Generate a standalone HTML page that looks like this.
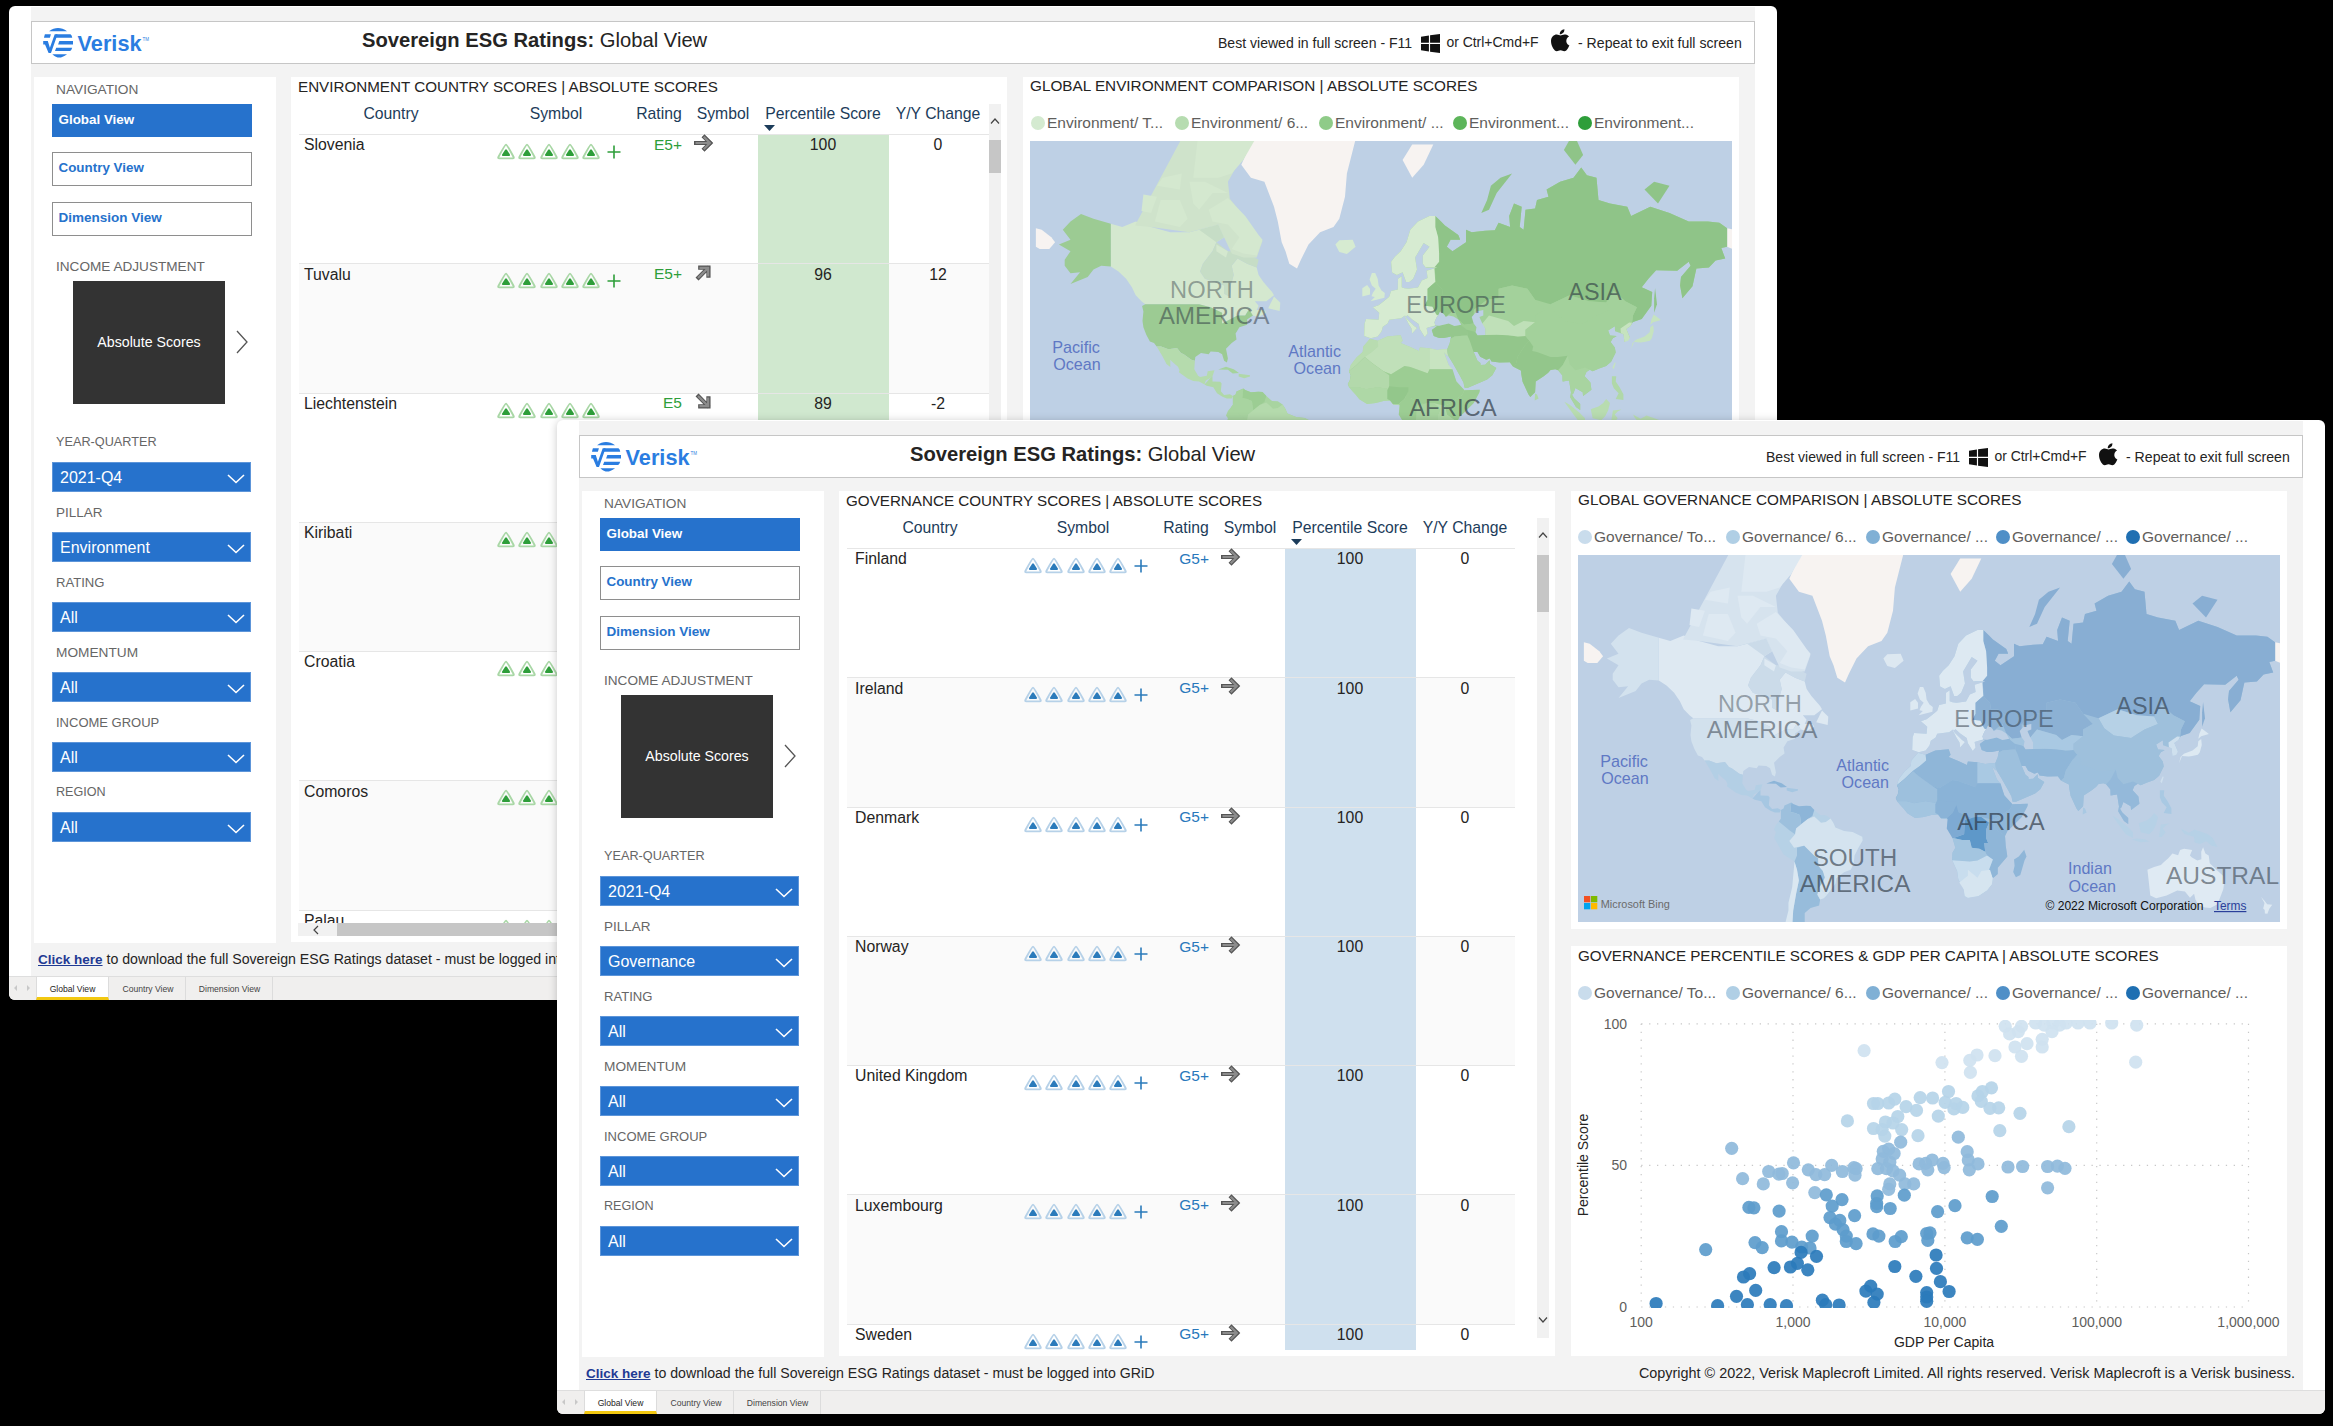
<!DOCTYPE html><html><head><meta charset="utf-8"><style>
html,body{margin:0;padding:0;background:#000;width:2333px;height:1426px;overflow:hidden;font-family:"Liberation Sans", sans-serif}
</style></head><body>
<div style="position:absolute;left:9px;top:6px;width:1768px;height:994px;background:#fff;border-radius:6px;overflow:hidden;box-shadow:0 1px 9px rgba(0,0,0,0.22)"><div style="position:absolute;left:22px;top:1px;width:1724px;height:969px;background:#f3f3f3;"></div><div style="position:absolute;left:22px;top:15px;width:1724px;height:43px;background:#fff;box-sizing:border-box;border:1.5px solid #c6c6c6"></div><svg width="110" height="34" viewBox="0 0 110 34" style="position:absolute;left:34px;top:21px"><g fill="#2a7de1"><path d="M6.1 4.3 C9 1.5 12 0.9 15 0.9 C18 0.9 21 1.5 24.1 4.3 Z"/><path d="M1.9 7.3 H7.9 L6.9 10.7 H0.9 Z"/><path d="M12.9 7.3 H27.5 Q29.2 8.5 29.2 10.7 H11.7 Z"/><path d="M0.2 14 H4.8 L6.9 20.8 L11.7 7.3 H14.6 L8 25.9 H5.6 L2 17.6 H0.2 Z"/><path d="M16.3 14 H30 V17.6 H15.1 Z"/><path d="M13.2 20.7 H29.2 Q28.6 23 27.2 24 H12 Z"/><path d="M9.4 27.2 H24.1 C21 29.8 18 30.5 16.5 30.5 C14 30.5 11.5 29.8 9.4 27.2 Z"/></g><text x="34.6" y="24" font-family="Liberation Sans" font-weight="bold" font-size="21.7" fill="#2a7de1">Verisk</text><text x="99.5" y="13.5" font-family="Liberation Sans" font-size="4.5" fill="#2a7de1">TM</text></svg><div style="position:absolute;left:353.0px;top:23.6px;font-size:20.2px;color:#252423;font-weight:normal;white-space:nowrap;line-height:1;"><b>Sovereign ESG Ratings:</b> Global View</div><div style="position:absolute;left:1209.0px;top:30.3px;font-size:14.05px;color:#252423;font-weight:normal;white-space:nowrap;line-height:1;">Best viewed in full screen - F11</div><svg width="19" height="19" viewBox="0 0 18 18" style="position:absolute;left:1411.7px;top:27.5px"><path d="M0 2.5 L7.5 1.4 V8.4 H0Z M8.6 1.2 L18 0 V8.4 H8.6Z M0 9.5 H7.5 V16.6 L0 15.5Z M8.6 9.5 H18 V18 L8.6 16.8Z" fill="#111"/></svg><div style="position:absolute;left:1437.4px;top:30.4px;font-size:13.95px;color:#252423;font-weight:normal;white-space:nowrap;line-height:1;">or Ctrl+Cmd+F</div><svg width="20" height="23" viewBox="0 0 170 200" preserveAspectRatio="none" style="position:absolute;left:1541.6px;top:23px"><path fill="#111" d="M150 68c-1 1-20 12-20 36 0 28 25 38 26 38 0 1-4 14-13 27-8 12-17 24-30 24s-17-8-32-8c-15 0-20 8-32 8s-21-11-30-24C8 153 0 128 0 105c0-38 25-58 49-58 13 0 24 9 32 9 8 0 20-9 35-9 6 0 26 1 39 20zM104 33c6-7 10-17 10-27 0-1 0-3-1-4-10 0-21 7-28 15-6 6-11 16-11 26 0 2 0 3 1 3 1 0 2 0 3 0 9 0 20-6 26-13z"/></svg><div style="position:absolute;left:1569.0px;top:30.3px;font-size:14.1px;color:#252423;font-weight:normal;white-space:nowrap;line-height:1;">- Repeat to exit full screen</div><div style="position:absolute;left:25px;top:71px;width:242px;height:866px;background:#fff;"></div><div style="position:absolute;left:47.0px;top:76.8px;font-size:13.7px;color:#666;font-weight:normal;white-space:nowrap;line-height:1;">NAVIGATION</div><div style="position:absolute;left:43px;top:98px;width:200px;height:33px;background:#2672cc;"></div><div style="position:absolute;left:49.5px;top:107.3px;font-size:13.4px;color:#fff;font-weight:bold;white-space:nowrap;line-height:1;">Global View</div><div style="position:absolute;left:43px;top:146px;width:200px;height:34px;background:#fff;box-sizing:border-box;border:1.6px solid #8e8e8e"></div><div style="position:absolute;left:49.5px;top:155.3px;font-size:13.4px;color:#2672cc;font-weight:bold;white-space:nowrap;line-height:1;">Country View</div><div style="position:absolute;left:43px;top:196px;width:200px;height:34px;background:#fff;box-sizing:border-box;border:1.6px solid #8e8e8e"></div><div style="position:absolute;left:49.5px;top:205.2px;font-size:13.5px;color:#2672cc;font-weight:bold;white-space:nowrap;line-height:1;">Dimension View</div><div style="position:absolute;left:47.0px;top:253.7px;font-size:13.6px;color:#666;font-weight:normal;white-space:nowrap;line-height:1;">INCOME ADJUSTMENT</div><div style="position:absolute;left:64px;top:275px;width:152px;height:123px;background:#333333;"></div><div style="position:absolute;left:-560.0px;width:1400px;text-align:center;top:328.7px;font-size:14.2px;color:#fff;font-weight:normal;white-space:nowrap;line-height:1;">Absolute Scores</div><svg width="14" height="26" viewBox="0 0 14 26" style="position:absolute;left:226px;top:323px"><path d="M2 2 L12 13 L2 24" fill="none" stroke="#555" stroke-width="1.3"/></svg><div style="position:absolute;left:47.0px;top:430.3px;font-size:12.7px;color:#666;font-weight:normal;white-space:nowrap;line-height:1;">YEAR-QUARTER</div><div style="position:absolute;left:43px;top:456px;width:199px;height:30px;background:#2672cc;box-sizing:border-box;border:1px solid #5d95d9"></div><div style="position:absolute;left:51.0px;top:463.8px;font-size:16px;color:#fff;font-weight:normal;white-space:nowrap;line-height:1;">2021-Q4</div><svg width="18" height="10" viewBox="0 0 18 10" style="position:absolute;left:218px;top:468px"><path d="M1 1 L9 8.5 L17 1" fill="none" stroke="#fff" stroke-width="1.6"/></svg><div style="position:absolute;left:47.0px;top:499.7px;font-size:13.5px;color:#666;font-weight:normal;white-space:nowrap;line-height:1;">PILLAR</div><div style="position:absolute;left:43px;top:526px;width:199px;height:30px;background:#2672cc;box-sizing:border-box;border:1px solid #5d95d9"></div><div style="position:absolute;left:51.0px;top:533.8px;font-size:16px;color:#fff;font-weight:normal;white-space:nowrap;line-height:1;">Environment</div><svg width="18" height="10" viewBox="0 0 18 10" style="position:absolute;left:218px;top:538px"><path d="M1 1 L9 8.5 L17 1" fill="none" stroke="#fff" stroke-width="1.6"/></svg><div style="position:absolute;left:47.0px;top:570.0px;font-size:13.1px;color:#666;font-weight:normal;white-space:nowrap;line-height:1;">RATING</div><div style="position:absolute;left:43px;top:596px;width:199px;height:30px;background:#2672cc;box-sizing:border-box;border:1px solid #5d95d9"></div><div style="position:absolute;left:51.0px;top:603.8px;font-size:16px;color:#fff;font-weight:normal;white-space:nowrap;line-height:1;">All</div><svg width="18" height="10" viewBox="0 0 18 10" style="position:absolute;left:218px;top:608px"><path d="M1 1 L9 8.5 L17 1" fill="none" stroke="#fff" stroke-width="1.6"/></svg><div style="position:absolute;left:47.0px;top:639.6px;font-size:13.7px;color:#666;font-weight:normal;white-space:nowrap;line-height:1;">MOMENTUM</div><div style="position:absolute;left:43px;top:666px;width:199px;height:30px;background:#2672cc;box-sizing:border-box;border:1px solid #5d95d9"></div><div style="position:absolute;left:51.0px;top:673.8px;font-size:16px;color:#fff;font-weight:normal;white-space:nowrap;line-height:1;">All</div><svg width="18" height="10" viewBox="0 0 18 10" style="position:absolute;left:218px;top:678px"><path d="M1 1 L9 8.5 L17 1" fill="none" stroke="#fff" stroke-width="1.6"/></svg><div style="position:absolute;left:47.0px;top:710.1px;font-size:13.0px;color:#666;font-weight:normal;white-space:nowrap;line-height:1;">INCOME GROUP</div><div style="position:absolute;left:43px;top:736px;width:199px;height:30px;background:#2672cc;box-sizing:border-box;border:1px solid #5d95d9"></div><div style="position:absolute;left:51.0px;top:743.8px;font-size:16px;color:#fff;font-weight:normal;white-space:nowrap;line-height:1;">All</div><svg width="18" height="10" viewBox="0 0 18 10" style="position:absolute;left:218px;top:748px"><path d="M1 1 L9 8.5 L17 1" fill="none" stroke="#fff" stroke-width="1.6"/></svg><div style="position:absolute;left:47.0px;top:780.4px;font-size:12.6px;color:#666;font-weight:normal;white-space:nowrap;line-height:1;">REGION</div><div style="position:absolute;left:43px;top:806px;width:199px;height:30px;background:#2672cc;box-sizing:border-box;border:1px solid #5d95d9"></div><div style="position:absolute;left:51.0px;top:813.8px;font-size:16px;color:#fff;font-weight:normal;white-space:nowrap;line-height:1;">All</div><svg width="18" height="10" viewBox="0 0 18 10" style="position:absolute;left:218px;top:818px"><path d="M1 1 L9 8.5 L17 1" fill="none" stroke="#fff" stroke-width="1.6"/></svg><div style="position:absolute;left:282px;top:71px;width:716px;height:865px;background:#fff;"></div><div style="position:absolute;left:289.0px;top:72.6px;font-size:15.2px;color:#252423;font-weight:normal;white-space:nowrap;line-height:1;">ENVIRONMENT COUNTRY SCORES | ABSOLUTE SCORES</div><div style="position:absolute;left:-318.0px;width:1400px;text-align:center;top:100.0px;font-size:15.75px;color:#1c3c5a;font-weight:normal;white-space:nowrap;line-height:1;">Country</div><div style="position:absolute;left:-153.0px;width:1400px;text-align:center;top:100.0px;font-size:15.75px;color:#1c3c5a;font-weight:normal;white-space:nowrap;line-height:1;">Symbol</div><div style="position:absolute;left:-50.0px;width:1400px;text-align:center;top:100.0px;font-size:15.75px;color:#1c3c5a;font-weight:normal;white-space:nowrap;line-height:1;">Rating</div><div style="position:absolute;left:14.0px;width:1400px;text-align:center;top:100.0px;font-size:15.75px;color:#1c3c5a;font-weight:normal;white-space:nowrap;line-height:1;">Symbol</div><div style="position:absolute;left:114.0px;width:1400px;text-align:center;top:100.0px;font-size:15.75px;color:#1c3c5a;font-weight:normal;white-space:nowrap;line-height:1;">Percentile Score</div><div style="position:absolute;left:229.0px;width:1400px;text-align:center;top:100.0px;font-size:15.75px;color:#1c3c5a;font-weight:normal;white-space:nowrap;line-height:1;">Y/Y Change</div><svg width="12" height="7" style="position:absolute;left:755px;top:119px"><path d="M0 0 H11 L5.5 6Z" fill="#1c3c5a"/></svg><div style="position:absolute;left:290px;top:128px;width:690px;height:802px;overflow:hidden"><div style="position:absolute;left:0px;top:0.00px;width:690px;height:129.25px;background:#ffffff;box-sizing:border-box;border-top:1px solid #e6e6e6"></div><div style="position:absolute;left:459px;top:1.00px;width:130.5px;height:129.25px;background:#d0e8cf;"></div><div style="position:absolute;left:5.0px;top:3.4px;font-size:15.8px;color:#252423;font-weight:normal;white-space:nowrap;line-height:1;">Slovenia</div><div style="position:absolute;left:197.7px;top:9.0px"><svg width="18" height="17" viewBox="0 0 18 17" style="position:absolute"><path d="M9 1.6 Q10 1.6 16.6 14 Q17.2 15.4 15.8 15.4 L2.2 15.4 Q0.8 15.4 1.4 14 Q8 1.6 9 1.6Z" fill="none" stroke="#a9d7a6" stroke-width="1.9"/><path d="M9 6.2 Q9.7 6.2 12.9 11.6 Q13.5 13 12.1 13.1 L5.9 13.1 Q4.5 13 5.1 11.6 Q8.3 6.2 9 6.2 Z" fill="#2e9e3a"/></svg></div><div style="position:absolute;left:219.1px;top:9.0px"><svg width="18" height="17" viewBox="0 0 18 17" style="position:absolute"><path d="M9 1.6 Q10 1.6 16.6 14 Q17.2 15.4 15.8 15.4 L2.2 15.4 Q0.8 15.4 1.4 14 Q8 1.6 9 1.6Z" fill="none" stroke="#a9d7a6" stroke-width="1.9"/><path d="M9 6.2 Q9.7 6.2 12.9 11.6 Q13.5 13 12.1 13.1 L5.9 13.1 Q4.5 13 5.1 11.6 Q8.3 6.2 9 6.2 Z" fill="#2e9e3a"/></svg></div><div style="position:absolute;left:240.5px;top:9.0px"><svg width="18" height="17" viewBox="0 0 18 17" style="position:absolute"><path d="M9 1.6 Q10 1.6 16.6 14 Q17.2 15.4 15.8 15.4 L2.2 15.4 Q0.8 15.4 1.4 14 Q8 1.6 9 1.6Z" fill="none" stroke="#a9d7a6" stroke-width="1.9"/><path d="M9 6.2 Q9.7 6.2 12.9 11.6 Q13.5 13 12.1 13.1 L5.9 13.1 Q4.5 13 5.1 11.6 Q8.3 6.2 9 6.2 Z" fill="#2e9e3a"/></svg></div><div style="position:absolute;left:261.9px;top:9.0px"><svg width="18" height="17" viewBox="0 0 18 17" style="position:absolute"><path d="M9 1.6 Q10 1.6 16.6 14 Q17.2 15.4 15.8 15.4 L2.2 15.4 Q0.8 15.4 1.4 14 Q8 1.6 9 1.6Z" fill="none" stroke="#a9d7a6" stroke-width="1.9"/><path d="M9 6.2 Q9.7 6.2 12.9 11.6 Q13.5 13 12.1 13.1 L5.9 13.1 Q4.5 13 5.1 11.6 Q8.3 6.2 9 6.2 Z" fill="#2e9e3a"/></svg></div><div style="position:absolute;left:283.3px;top:9.0px"><svg width="18" height="17" viewBox="0 0 18 17" style="position:absolute"><path d="M9 1.6 Q10 1.6 16.6 14 Q17.2 15.4 15.8 15.4 L2.2 15.4 Q0.8 15.4 1.4 14 Q8 1.6 9 1.6Z" fill="none" stroke="#a9d7a6" stroke-width="1.9"/><path d="M9 6.2 Q9.7 6.2 12.9 11.6 Q13.5 13 12.1 13.1 L5.9 13.1 Q4.5 13 5.1 11.6 Q8.3 6.2 9 6.2 Z" fill="#2e9e3a"/></svg></div><svg width="16" height="16" style="position:absolute;left:306.5px;top:10.0px"><path d="M8 1.5 V14.5 M1.5 8 H14.5" stroke="#2e9e3a" stroke-width="1.6"/></svg><div style="position:absolute;left:-1017.0px;width:1400px;text-align:right;top:2.7px;font-size:15.5px;color:#2e9e3a;font-weight:normal;white-space:nowrap;line-height:1;">E5+</div><div style="position:absolute;left:395px;top:0.0px"><svg width="20" height="18" viewBox="0 0 20 18" style="position:absolute;transform:rotate(0deg)"><g fill="none" stroke-linecap="square"><path d="M2 9 H15.5 M10.5 3.2 L16.3 9 L10.5 14.8" stroke="#555" stroke-width="4.2"/><path d="M2.6 9 H15 M10.5 3.6 L15.9 9 L10.5 14.4" stroke="#8c8c8c" stroke-width="2.2"/></g></svg></div><div style="position:absolute;left:-176.0px;width:1400px;text-align:center;top:3.3px;font-size:15.8px;color:#252423;font-weight:normal;white-space:nowrap;line-height:1;">100</div><div style="position:absolute;left:-61.0px;width:1400px;text-align:center;top:3.3px;font-size:15.8px;color:#252423;font-weight:normal;white-space:nowrap;line-height:1;">0</div><div style="position:absolute;left:0px;top:129.25px;width:690px;height:129.25px;background:#fafafa;box-sizing:border-box;border-top:1px solid #e6e6e6"></div><div style="position:absolute;left:459px;top:130.25px;width:130.5px;height:129.25px;background:#d0e8cf;"></div><div style="position:absolute;left:5.0px;top:132.6px;font-size:15.8px;color:#252423;font-weight:normal;white-space:nowrap;line-height:1;">Tuvalu</div><div style="position:absolute;left:197.7px;top:138.2px"><svg width="18" height="17" viewBox="0 0 18 17" style="position:absolute"><path d="M9 1.6 Q10 1.6 16.6 14 Q17.2 15.4 15.8 15.4 L2.2 15.4 Q0.8 15.4 1.4 14 Q8 1.6 9 1.6Z" fill="none" stroke="#a9d7a6" stroke-width="1.9"/><path d="M9 6.2 Q9.7 6.2 12.9 11.6 Q13.5 13 12.1 13.1 L5.9 13.1 Q4.5 13 5.1 11.6 Q8.3 6.2 9 6.2 Z" fill="#2e9e3a"/></svg></div><div style="position:absolute;left:219.1px;top:138.2px"><svg width="18" height="17" viewBox="0 0 18 17" style="position:absolute"><path d="M9 1.6 Q10 1.6 16.6 14 Q17.2 15.4 15.8 15.4 L2.2 15.4 Q0.8 15.4 1.4 14 Q8 1.6 9 1.6Z" fill="none" stroke="#a9d7a6" stroke-width="1.9"/><path d="M9 6.2 Q9.7 6.2 12.9 11.6 Q13.5 13 12.1 13.1 L5.9 13.1 Q4.5 13 5.1 11.6 Q8.3 6.2 9 6.2 Z" fill="#2e9e3a"/></svg></div><div style="position:absolute;left:240.5px;top:138.2px"><svg width="18" height="17" viewBox="0 0 18 17" style="position:absolute"><path d="M9 1.6 Q10 1.6 16.6 14 Q17.2 15.4 15.8 15.4 L2.2 15.4 Q0.8 15.4 1.4 14 Q8 1.6 9 1.6Z" fill="none" stroke="#a9d7a6" stroke-width="1.9"/><path d="M9 6.2 Q9.7 6.2 12.9 11.6 Q13.5 13 12.1 13.1 L5.9 13.1 Q4.5 13 5.1 11.6 Q8.3 6.2 9 6.2 Z" fill="#2e9e3a"/></svg></div><div style="position:absolute;left:261.9px;top:138.2px"><svg width="18" height="17" viewBox="0 0 18 17" style="position:absolute"><path d="M9 1.6 Q10 1.6 16.6 14 Q17.2 15.4 15.8 15.4 L2.2 15.4 Q0.8 15.4 1.4 14 Q8 1.6 9 1.6Z" fill="none" stroke="#a9d7a6" stroke-width="1.9"/><path d="M9 6.2 Q9.7 6.2 12.9 11.6 Q13.5 13 12.1 13.1 L5.9 13.1 Q4.5 13 5.1 11.6 Q8.3 6.2 9 6.2 Z" fill="#2e9e3a"/></svg></div><div style="position:absolute;left:283.3px;top:138.2px"><svg width="18" height="17" viewBox="0 0 18 17" style="position:absolute"><path d="M9 1.6 Q10 1.6 16.6 14 Q17.2 15.4 15.8 15.4 L2.2 15.4 Q0.8 15.4 1.4 14 Q8 1.6 9 1.6Z" fill="none" stroke="#a9d7a6" stroke-width="1.9"/><path d="M9 6.2 Q9.7 6.2 12.9 11.6 Q13.5 13 12.1 13.1 L5.9 13.1 Q4.5 13 5.1 11.6 Q8.3 6.2 9 6.2 Z" fill="#2e9e3a"/></svg></div><svg width="16" height="16" style="position:absolute;left:306.5px;top:139.2px"><path d="M8 1.5 V14.5 M1.5 8 H14.5" stroke="#2e9e3a" stroke-width="1.6"/></svg><div style="position:absolute;left:-1017.0px;width:1400px;text-align:right;top:132.0px;font-size:15.5px;color:#2e9e3a;font-weight:normal;white-space:nowrap;line-height:1;">E5+</div><div style="position:absolute;left:395px;top:129.2px"><svg width="20" height="18" viewBox="0 0 20 18" style="position:absolute;transform:rotate(-45deg)"><g fill="none" stroke-linecap="square"><path d="M2 9 H15.5 M10.5 3.2 L16.3 9 L10.5 14.8" stroke="#555" stroke-width="4.2"/><path d="M2.6 9 H15 M10.5 3.6 L15.9 9 L10.5 14.4" stroke="#8c8c8c" stroke-width="2.2"/></g></svg></div><div style="position:absolute;left:-176.0px;width:1400px;text-align:center;top:132.5px;font-size:15.8px;color:#252423;font-weight:normal;white-space:nowrap;line-height:1;">96</div><div style="position:absolute;left:-61.0px;width:1400px;text-align:center;top:132.5px;font-size:15.8px;color:#252423;font-weight:normal;white-space:nowrap;line-height:1;">12</div><div style="position:absolute;left:0px;top:258.50px;width:690px;height:129.25px;background:#ffffff;box-sizing:border-box;border-top:1px solid #e6e6e6"></div><div style="position:absolute;left:459px;top:259.50px;width:130.5px;height:129.25px;background:#d0e8cf;"></div><div style="position:absolute;left:5.0px;top:261.9px;font-size:15.8px;color:#252423;font-weight:normal;white-space:nowrap;line-height:1;">Liechtenstein</div><div style="position:absolute;left:197.7px;top:267.5px"><svg width="18" height="17" viewBox="0 0 18 17" style="position:absolute"><path d="M9 1.6 Q10 1.6 16.6 14 Q17.2 15.4 15.8 15.4 L2.2 15.4 Q0.8 15.4 1.4 14 Q8 1.6 9 1.6Z" fill="none" stroke="#a9d7a6" stroke-width="1.9"/><path d="M9 6.2 Q9.7 6.2 12.9 11.6 Q13.5 13 12.1 13.1 L5.9 13.1 Q4.5 13 5.1 11.6 Q8.3 6.2 9 6.2 Z" fill="#2e9e3a"/></svg></div><div style="position:absolute;left:219.1px;top:267.5px"><svg width="18" height="17" viewBox="0 0 18 17" style="position:absolute"><path d="M9 1.6 Q10 1.6 16.6 14 Q17.2 15.4 15.8 15.4 L2.2 15.4 Q0.8 15.4 1.4 14 Q8 1.6 9 1.6Z" fill="none" stroke="#a9d7a6" stroke-width="1.9"/><path d="M9 6.2 Q9.7 6.2 12.9 11.6 Q13.5 13 12.1 13.1 L5.9 13.1 Q4.5 13 5.1 11.6 Q8.3 6.2 9 6.2 Z" fill="#2e9e3a"/></svg></div><div style="position:absolute;left:240.5px;top:267.5px"><svg width="18" height="17" viewBox="0 0 18 17" style="position:absolute"><path d="M9 1.6 Q10 1.6 16.6 14 Q17.2 15.4 15.8 15.4 L2.2 15.4 Q0.8 15.4 1.4 14 Q8 1.6 9 1.6Z" fill="none" stroke="#a9d7a6" stroke-width="1.9"/><path d="M9 6.2 Q9.7 6.2 12.9 11.6 Q13.5 13 12.1 13.1 L5.9 13.1 Q4.5 13 5.1 11.6 Q8.3 6.2 9 6.2 Z" fill="#2e9e3a"/></svg></div><div style="position:absolute;left:261.9px;top:267.5px"><svg width="18" height="17" viewBox="0 0 18 17" style="position:absolute"><path d="M9 1.6 Q10 1.6 16.6 14 Q17.2 15.4 15.8 15.4 L2.2 15.4 Q0.8 15.4 1.4 14 Q8 1.6 9 1.6Z" fill="none" stroke="#a9d7a6" stroke-width="1.9"/><path d="M9 6.2 Q9.7 6.2 12.9 11.6 Q13.5 13 12.1 13.1 L5.9 13.1 Q4.5 13 5.1 11.6 Q8.3 6.2 9 6.2 Z" fill="#2e9e3a"/></svg></div><div style="position:absolute;left:283.3px;top:267.5px"><svg width="18" height="17" viewBox="0 0 18 17" style="position:absolute"><path d="M9 1.6 Q10 1.6 16.6 14 Q17.2 15.4 15.8 15.4 L2.2 15.4 Q0.8 15.4 1.4 14 Q8 1.6 9 1.6Z" fill="none" stroke="#a9d7a6" stroke-width="1.9"/><path d="M9 6.2 Q9.7 6.2 12.9 11.6 Q13.5 13 12.1 13.1 L5.9 13.1 Q4.5 13 5.1 11.6 Q8.3 6.2 9 6.2 Z" fill="#2e9e3a"/></svg></div><div style="position:absolute;left:-1017.0px;width:1400px;text-align:right;top:261.2px;font-size:15.5px;color:#2e9e3a;font-weight:normal;white-space:nowrap;line-height:1;">E5</div><div style="position:absolute;left:395px;top:258.5px"><svg width="20" height="18" viewBox="0 0 20 18" style="position:absolute;transform:rotate(45deg)"><g fill="none" stroke-linecap="square"><path d="M2 9 H15.5 M10.5 3.2 L16.3 9 L10.5 14.8" stroke="#555" stroke-width="4.2"/><path d="M2.6 9 H15 M10.5 3.6 L15.9 9 L10.5 14.4" stroke="#8c8c8c" stroke-width="2.2"/></g></svg></div><div style="position:absolute;left:-176.0px;width:1400px;text-align:center;top:261.8px;font-size:15.8px;color:#252423;font-weight:normal;white-space:nowrap;line-height:1;">89</div><div style="position:absolute;left:-61.0px;width:1400px;text-align:center;top:261.8px;font-size:15.8px;color:#252423;font-weight:normal;white-space:nowrap;line-height:1;">-2</div><div style="position:absolute;left:0px;top:387.75px;width:690px;height:129.25px;background:#fafafa;box-sizing:border-box;border-top:1px solid #e6e6e6"></div><div style="position:absolute;left:459px;top:388.75px;width:130.5px;height:129.25px;background:#d0e8cf;"></div><div style="position:absolute;left:5.0px;top:391.1px;font-size:15.8px;color:#252423;font-weight:normal;white-space:nowrap;line-height:1;">Kiribati</div><div style="position:absolute;left:197.7px;top:396.8px"><svg width="18" height="17" viewBox="0 0 18 17" style="position:absolute"><path d="M9 1.6 Q10 1.6 16.6 14 Q17.2 15.4 15.8 15.4 L2.2 15.4 Q0.8 15.4 1.4 14 Q8 1.6 9 1.6Z" fill="none" stroke="#a9d7a6" stroke-width="1.9"/><path d="M9 6.2 Q9.7 6.2 12.9 11.6 Q13.5 13 12.1 13.1 L5.9 13.1 Q4.5 13 5.1 11.6 Q8.3 6.2 9 6.2 Z" fill="#2e9e3a"/></svg></div><div style="position:absolute;left:219.1px;top:396.8px"><svg width="18" height="17" viewBox="0 0 18 17" style="position:absolute"><path d="M9 1.6 Q10 1.6 16.6 14 Q17.2 15.4 15.8 15.4 L2.2 15.4 Q0.8 15.4 1.4 14 Q8 1.6 9 1.6Z" fill="none" stroke="#a9d7a6" stroke-width="1.9"/><path d="M9 6.2 Q9.7 6.2 12.9 11.6 Q13.5 13 12.1 13.1 L5.9 13.1 Q4.5 13 5.1 11.6 Q8.3 6.2 9 6.2 Z" fill="#2e9e3a"/></svg></div><div style="position:absolute;left:240.5px;top:396.8px"><svg width="18" height="17" viewBox="0 0 18 17" style="position:absolute"><path d="M9 1.6 Q10 1.6 16.6 14 Q17.2 15.4 15.8 15.4 L2.2 15.4 Q0.8 15.4 1.4 14 Q8 1.6 9 1.6Z" fill="none" stroke="#a9d7a6" stroke-width="1.9"/><path d="M9 6.2 Q9.7 6.2 12.9 11.6 Q13.5 13 12.1 13.1 L5.9 13.1 Q4.5 13 5.1 11.6 Q8.3 6.2 9 6.2 Z" fill="#2e9e3a"/></svg></div><div style="position:absolute;left:261.9px;top:396.8px"><svg width="18" height="17" viewBox="0 0 18 17" style="position:absolute"><path d="M9 1.6 Q10 1.6 16.6 14 Q17.2 15.4 15.8 15.4 L2.2 15.4 Q0.8 15.4 1.4 14 Q8 1.6 9 1.6Z" fill="none" stroke="#a9d7a6" stroke-width="1.9"/><path d="M9 6.2 Q9.7 6.2 12.9 11.6 Q13.5 13 12.1 13.1 L5.9 13.1 Q4.5 13 5.1 11.6 Q8.3 6.2 9 6.2 Z" fill="#2e9e3a"/></svg></div><div style="position:absolute;left:283.3px;top:396.8px"><svg width="18" height="17" viewBox="0 0 18 17" style="position:absolute"><path d="M9 1.6 Q10 1.6 16.6 14 Q17.2 15.4 15.8 15.4 L2.2 15.4 Q0.8 15.4 1.4 14 Q8 1.6 9 1.6Z" fill="none" stroke="#a9d7a6" stroke-width="1.9"/><path d="M9 6.2 Q9.7 6.2 12.9 11.6 Q13.5 13 12.1 13.1 L5.9 13.1 Q4.5 13 5.1 11.6 Q8.3 6.2 9 6.2 Z" fill="#2e9e3a"/></svg></div><div style="position:absolute;left:-1017.0px;width:1400px;text-align:right;top:390.5px;font-size:15.5px;color:#2e9e3a;font-weight:normal;white-space:nowrap;line-height:1;">E5</div><div style="position:absolute;left:395px;top:387.8px"><svg width="20" height="18" viewBox="0 0 20 18" style="position:absolute;transform:rotate(0deg)"><g fill="none" stroke-linecap="square"><path d="M2 9 H15.5 M10.5 3.2 L16.3 9 L10.5 14.8" stroke="#555" stroke-width="4.2"/><path d="M2.6 9 H15 M10.5 3.6 L15.9 9 L10.5 14.4" stroke="#8c8c8c" stroke-width="2.2"/></g></svg></div><div style="position:absolute;left:-176.0px;width:1400px;text-align:center;top:391.0px;font-size:15.8px;color:#252423;font-weight:normal;white-space:nowrap;line-height:1;">88</div><div style="position:absolute;left:-61.0px;width:1400px;text-align:center;top:391.0px;font-size:15.8px;color:#252423;font-weight:normal;white-space:nowrap;line-height:1;">0</div><div style="position:absolute;left:0px;top:517.00px;width:690px;height:129.25px;background:#ffffff;box-sizing:border-box;border-top:1px solid #e6e6e6"></div><div style="position:absolute;left:459px;top:518.00px;width:130.5px;height:129.25px;background:#d0e8cf;"></div><div style="position:absolute;left:5.0px;top:520.4px;font-size:15.8px;color:#252423;font-weight:normal;white-space:nowrap;line-height:1;">Croatia</div><div style="position:absolute;left:197.7px;top:526.0px"><svg width="18" height="17" viewBox="0 0 18 17" style="position:absolute"><path d="M9 1.6 Q10 1.6 16.6 14 Q17.2 15.4 15.8 15.4 L2.2 15.4 Q0.8 15.4 1.4 14 Q8 1.6 9 1.6Z" fill="none" stroke="#a9d7a6" stroke-width="1.9"/><path d="M9 6.2 Q9.7 6.2 12.9 11.6 Q13.5 13 12.1 13.1 L5.9 13.1 Q4.5 13 5.1 11.6 Q8.3 6.2 9 6.2 Z" fill="#2e9e3a"/></svg></div><div style="position:absolute;left:219.1px;top:526.0px"><svg width="18" height="17" viewBox="0 0 18 17" style="position:absolute"><path d="M9 1.6 Q10 1.6 16.6 14 Q17.2 15.4 15.8 15.4 L2.2 15.4 Q0.8 15.4 1.4 14 Q8 1.6 9 1.6Z" fill="none" stroke="#a9d7a6" stroke-width="1.9"/><path d="M9 6.2 Q9.7 6.2 12.9 11.6 Q13.5 13 12.1 13.1 L5.9 13.1 Q4.5 13 5.1 11.6 Q8.3 6.2 9 6.2 Z" fill="#2e9e3a"/></svg></div><div style="position:absolute;left:240.5px;top:526.0px"><svg width="18" height="17" viewBox="0 0 18 17" style="position:absolute"><path d="M9 1.6 Q10 1.6 16.6 14 Q17.2 15.4 15.8 15.4 L2.2 15.4 Q0.8 15.4 1.4 14 Q8 1.6 9 1.6Z" fill="none" stroke="#a9d7a6" stroke-width="1.9"/><path d="M9 6.2 Q9.7 6.2 12.9 11.6 Q13.5 13 12.1 13.1 L5.9 13.1 Q4.5 13 5.1 11.6 Q8.3 6.2 9 6.2 Z" fill="#2e9e3a"/></svg></div><div style="position:absolute;left:261.9px;top:526.0px"><svg width="18" height="17" viewBox="0 0 18 17" style="position:absolute"><path d="M9 1.6 Q10 1.6 16.6 14 Q17.2 15.4 15.8 15.4 L2.2 15.4 Q0.8 15.4 1.4 14 Q8 1.6 9 1.6Z" fill="none" stroke="#a9d7a6" stroke-width="1.9"/><path d="M9 6.2 Q9.7 6.2 12.9 11.6 Q13.5 13 12.1 13.1 L5.9 13.1 Q4.5 13 5.1 11.6 Q8.3 6.2 9 6.2 Z" fill="#2e9e3a"/></svg></div><div style="position:absolute;left:283.3px;top:526.0px"><svg width="18" height="17" viewBox="0 0 18 17" style="position:absolute"><path d="M9 1.6 Q10 1.6 16.6 14 Q17.2 15.4 15.8 15.4 L2.2 15.4 Q0.8 15.4 1.4 14 Q8 1.6 9 1.6Z" fill="none" stroke="#a9d7a6" stroke-width="1.9"/><path d="M9 6.2 Q9.7 6.2 12.9 11.6 Q13.5 13 12.1 13.1 L5.9 13.1 Q4.5 13 5.1 11.6 Q8.3 6.2 9 6.2 Z" fill="#2e9e3a"/></svg></div><div style="position:absolute;left:-1017.0px;width:1400px;text-align:right;top:519.7px;font-size:15.5px;color:#2e9e3a;font-weight:normal;white-space:nowrap;line-height:1;">E5</div><div style="position:absolute;left:395px;top:517.0px"><svg width="20" height="18" viewBox="0 0 20 18" style="position:absolute;transform:rotate(0deg)"><g fill="none" stroke-linecap="square"><path d="M2 9 H15.5 M10.5 3.2 L16.3 9 L10.5 14.8" stroke="#555" stroke-width="4.2"/><path d="M2.6 9 H15 M10.5 3.6 L15.9 9 L10.5 14.4" stroke="#8c8c8c" stroke-width="2.2"/></g></svg></div><div style="position:absolute;left:-176.0px;width:1400px;text-align:center;top:520.3px;font-size:15.8px;color:#252423;font-weight:normal;white-space:nowrap;line-height:1;">86</div><div style="position:absolute;left:-61.0px;width:1400px;text-align:center;top:520.3px;font-size:15.8px;color:#252423;font-weight:normal;white-space:nowrap;line-height:1;">0</div><div style="position:absolute;left:0px;top:646.25px;width:690px;height:129.25px;background:#fafafa;box-sizing:border-box;border-top:1px solid #e6e6e6"></div><div style="position:absolute;left:459px;top:647.25px;width:130.5px;height:129.25px;background:#d0e8cf;"></div><div style="position:absolute;left:5.0px;top:649.6px;font-size:15.8px;color:#252423;font-weight:normal;white-space:nowrap;line-height:1;">Comoros</div><div style="position:absolute;left:197.7px;top:655.2px"><svg width="18" height="17" viewBox="0 0 18 17" style="position:absolute"><path d="M9 1.6 Q10 1.6 16.6 14 Q17.2 15.4 15.8 15.4 L2.2 15.4 Q0.8 15.4 1.4 14 Q8 1.6 9 1.6Z" fill="none" stroke="#a9d7a6" stroke-width="1.9"/><path d="M9 6.2 Q9.7 6.2 12.9 11.6 Q13.5 13 12.1 13.1 L5.9 13.1 Q4.5 13 5.1 11.6 Q8.3 6.2 9 6.2 Z" fill="#2e9e3a"/></svg></div><div style="position:absolute;left:219.1px;top:655.2px"><svg width="18" height="17" viewBox="0 0 18 17" style="position:absolute"><path d="M9 1.6 Q10 1.6 16.6 14 Q17.2 15.4 15.8 15.4 L2.2 15.4 Q0.8 15.4 1.4 14 Q8 1.6 9 1.6Z" fill="none" stroke="#a9d7a6" stroke-width="1.9"/><path d="M9 6.2 Q9.7 6.2 12.9 11.6 Q13.5 13 12.1 13.1 L5.9 13.1 Q4.5 13 5.1 11.6 Q8.3 6.2 9 6.2 Z" fill="#2e9e3a"/></svg></div><div style="position:absolute;left:240.5px;top:655.2px"><svg width="18" height="17" viewBox="0 0 18 17" style="position:absolute"><path d="M9 1.6 Q10 1.6 16.6 14 Q17.2 15.4 15.8 15.4 L2.2 15.4 Q0.8 15.4 1.4 14 Q8 1.6 9 1.6Z" fill="none" stroke="#a9d7a6" stroke-width="1.9"/><path d="M9 6.2 Q9.7 6.2 12.9 11.6 Q13.5 13 12.1 13.1 L5.9 13.1 Q4.5 13 5.1 11.6 Q8.3 6.2 9 6.2 Z" fill="#2e9e3a"/></svg></div><div style="position:absolute;left:261.9px;top:655.2px"><svg width="18" height="17" viewBox="0 0 18 17" style="position:absolute"><path d="M9 1.6 Q10 1.6 16.6 14 Q17.2 15.4 15.8 15.4 L2.2 15.4 Q0.8 15.4 1.4 14 Q8 1.6 9 1.6Z" fill="none" stroke="#a9d7a6" stroke-width="1.9"/><path d="M9 6.2 Q9.7 6.2 12.9 11.6 Q13.5 13 12.1 13.1 L5.9 13.1 Q4.5 13 5.1 11.6 Q8.3 6.2 9 6.2 Z" fill="#2e9e3a"/></svg></div><div style="position:absolute;left:283.3px;top:655.2px"><svg width="18" height="17" viewBox="0 0 18 17" style="position:absolute"><path d="M9 1.6 Q10 1.6 16.6 14 Q17.2 15.4 15.8 15.4 L2.2 15.4 Q0.8 15.4 1.4 14 Q8 1.6 9 1.6Z" fill="none" stroke="#a9d7a6" stroke-width="1.9"/><path d="M9 6.2 Q9.7 6.2 12.9 11.6 Q13.5 13 12.1 13.1 L5.9 13.1 Q4.5 13 5.1 11.6 Q8.3 6.2 9 6.2 Z" fill="#2e9e3a"/></svg></div><div style="position:absolute;left:-1017.0px;width:1400px;text-align:right;top:649.0px;font-size:15.5px;color:#2e9e3a;font-weight:normal;white-space:nowrap;line-height:1;">E5</div><div style="position:absolute;left:395px;top:646.2px"><svg width="20" height="18" viewBox="0 0 20 18" style="position:absolute;transform:rotate(0deg)"><g fill="none" stroke-linecap="square"><path d="M2 9 H15.5 M10.5 3.2 L16.3 9 L10.5 14.8" stroke="#555" stroke-width="4.2"/><path d="M2.6 9 H15 M10.5 3.6 L15.9 9 L10.5 14.4" stroke="#8c8c8c" stroke-width="2.2"/></g></svg></div><div style="position:absolute;left:-176.0px;width:1400px;text-align:center;top:649.5px;font-size:15.8px;color:#252423;font-weight:normal;white-space:nowrap;line-height:1;">85</div><div style="position:absolute;left:-61.0px;width:1400px;text-align:center;top:649.5px;font-size:15.8px;color:#252423;font-weight:normal;white-space:nowrap;line-height:1;">0</div><div style="position:absolute;left:0px;top:775.50px;width:690px;height:129.25px;background:#ffffff;box-sizing:border-box;border-top:1px solid #e6e6e6"></div><div style="position:absolute;left:459px;top:776.50px;width:130.5px;height:129.25px;background:#d0e8cf;"></div><div style="position:absolute;left:5.0px;top:778.9px;font-size:15.8px;color:#252423;font-weight:normal;white-space:nowrap;line-height:1;">Palau</div><div style="position:absolute;left:197.7px;top:784.5px"><svg width="18" height="17" viewBox="0 0 18 17" style="position:absolute"><path d="M9 1.6 Q10 1.6 16.6 14 Q17.2 15.4 15.8 15.4 L2.2 15.4 Q0.8 15.4 1.4 14 Q8 1.6 9 1.6Z" fill="none" stroke="#a9d7a6" stroke-width="1.9"/><path d="M9 6.2 Q9.7 6.2 12.9 11.6 Q13.5 13 12.1 13.1 L5.9 13.1 Q4.5 13 5.1 11.6 Q8.3 6.2 9 6.2 Z" fill="#2e9e3a"/></svg></div><div style="position:absolute;left:219.1px;top:784.5px"><svg width="18" height="17" viewBox="0 0 18 17" style="position:absolute"><path d="M9 1.6 Q10 1.6 16.6 14 Q17.2 15.4 15.8 15.4 L2.2 15.4 Q0.8 15.4 1.4 14 Q8 1.6 9 1.6Z" fill="none" stroke="#a9d7a6" stroke-width="1.9"/><path d="M9 6.2 Q9.7 6.2 12.9 11.6 Q13.5 13 12.1 13.1 L5.9 13.1 Q4.5 13 5.1 11.6 Q8.3 6.2 9 6.2 Z" fill="#2e9e3a"/></svg></div><div style="position:absolute;left:240.5px;top:784.5px"><svg width="18" height="17" viewBox="0 0 18 17" style="position:absolute"><path d="M9 1.6 Q10 1.6 16.6 14 Q17.2 15.4 15.8 15.4 L2.2 15.4 Q0.8 15.4 1.4 14 Q8 1.6 9 1.6Z" fill="none" stroke="#a9d7a6" stroke-width="1.9"/><path d="M9 6.2 Q9.7 6.2 12.9 11.6 Q13.5 13 12.1 13.1 L5.9 13.1 Q4.5 13 5.1 11.6 Q8.3 6.2 9 6.2 Z" fill="#2e9e3a"/></svg></div><div style="position:absolute;left:261.9px;top:784.5px"><svg width="18" height="17" viewBox="0 0 18 17" style="position:absolute"><path d="M9 1.6 Q10 1.6 16.6 14 Q17.2 15.4 15.8 15.4 L2.2 15.4 Q0.8 15.4 1.4 14 Q8 1.6 9 1.6Z" fill="none" stroke="#a9d7a6" stroke-width="1.9"/><path d="M9 6.2 Q9.7 6.2 12.9 11.6 Q13.5 13 12.1 13.1 L5.9 13.1 Q4.5 13 5.1 11.6 Q8.3 6.2 9 6.2 Z" fill="#2e9e3a"/></svg></div><div style="position:absolute;left:283.3px;top:784.5px"><svg width="18" height="17" viewBox="0 0 18 17" style="position:absolute"><path d="M9 1.6 Q10 1.6 16.6 14 Q17.2 15.4 15.8 15.4 L2.2 15.4 Q0.8 15.4 1.4 14 Q8 1.6 9 1.6Z" fill="none" stroke="#a9d7a6" stroke-width="1.9"/><path d="M9 6.2 Q9.7 6.2 12.9 11.6 Q13.5 13 12.1 13.1 L5.9 13.1 Q4.5 13 5.1 11.6 Q8.3 6.2 9 6.2 Z" fill="#2e9e3a"/></svg></div><div style="position:absolute;left:-1017.0px;width:1400px;text-align:right;top:778.2px;font-size:15.5px;color:#2e9e3a;font-weight:normal;white-space:nowrap;line-height:1;">E5</div><div style="position:absolute;left:395px;top:775.5px"><svg width="20" height="18" viewBox="0 0 20 18" style="position:absolute;transform:rotate(0deg)"><g fill="none" stroke-linecap="square"><path d="M2 9 H15.5 M10.5 3.2 L16.3 9 L10.5 14.8" stroke="#555" stroke-width="4.2"/><path d="M2.6 9 H15 M10.5 3.6 L15.9 9 L10.5 14.4" stroke="#8c8c8c" stroke-width="2.2"/></g></svg></div><div style="position:absolute;left:-176.0px;width:1400px;text-align:center;top:778.8px;font-size:15.8px;color:#252423;font-weight:normal;white-space:nowrap;line-height:1;">84</div><div style="position:absolute;left:-61.0px;width:1400px;text-align:center;top:778.8px;font-size:15.8px;color:#252423;font-weight:normal;white-space:nowrap;line-height:1;">0</div></div><div style="position:absolute;left:980px;top:98px;width:12px;height:820px;background:#f1f1f1;"></div><div style="position:absolute;left:980px;top:134px;width:12px;height:33px;background:#c6c6c6;"></div><svg width="12" height="8" style="position:absolute;left:980px;top:111px"><path d="M2 6.5 L6 2 L10 6.5" fill="none" stroke="#444" stroke-width="1.2"/></svg><svg width="12" height="8" style="position:absolute;left:980px;top:896px"><path d="M2 1.5 L6 6 L10 1.5" fill="none" stroke="#444" stroke-width="1.2"/></svg><div style="position:absolute;left:289px;top:917px;width:690px;height:13px;background:#f1f1f1;"></div><div style="position:absolute;left:328px;top:917px;width:600px;height:13px;background:#c6c6c6;"></div><svg width="10" height="12" style="position:absolute;left:302px;top:918px"><path d="M7 2 L3 6 L7 10" fill="none" stroke="#444" stroke-width="1.2"/></svg><div style="position:absolute;left:1014px;top:71px;width:716px;height:438px;background:#fff;"></div><div style="position:absolute;left:1021.0px;top:72.4px;font-size:15.3px;color:#252423;font-weight:normal;white-space:nowrap;line-height:1;">GLOBAL ENVIRONMENT COMPARISON | ABSOLUTE SCORES</div><div style="position:absolute;left:1022px;top:110px;width:14px;height:14px;border-radius:50%;background:#d4ead0"></div><div style="position:absolute;left:1038.0px;top:108.7px;font-size:15.5px;color:#605e5c;font-weight:normal;white-space:nowrap;line-height:1;">Environment/ T...</div><div style="position:absolute;left:1166px;top:110px;width:14px;height:14px;border-radius:50%;background:#b6dcb0"></div><div style="position:absolute;left:1182.0px;top:108.7px;font-size:15.5px;color:#605e5c;font-weight:normal;white-space:nowrap;line-height:1;">Environment/ 6...</div><div style="position:absolute;left:1310px;top:110px;width:14px;height:14px;border-radius:50%;background:#8fcb88"></div><div style="position:absolute;left:1326.0px;top:108.7px;font-size:15.5px;color:#605e5c;font-weight:normal;white-space:nowrap;line-height:1;">Environment/ ...</div><div style="position:absolute;left:1444px;top:110px;width:14px;height:14px;border-radius:50%;background:#5db55a"></div><div style="position:absolute;left:1460.0px;top:108.7px;font-size:15.5px;color:#605e5c;font-weight:normal;white-space:nowrap;line-height:1;">Environment...</div><div style="position:absolute;left:1569px;top:110px;width:14px;height:14px;border-radius:50%;background:#2e9e3a"></div><div style="position:absolute;left:1585.0px;top:108.7px;font-size:15.5px;color:#605e5c;font-weight:normal;white-space:nowrap;line-height:1;">Environment...</div><div style="position:absolute;left:1021px;top:135px;width:702px;height:367px;overflow:hidden"><svg width="702" height="367" viewBox="0 0 702 367" style="position:absolute;left:0;top:0"><rect width="702" height="367" fill="#bed0e5"/><polygon points="211.3,23.7 222.9,-2.2 245.9,-28.3 293.9,-44.0 322.7,-21.1 328.5,-13.2 316.9,32.6 315.0,55.7 309.3,77.8 303.5,86.1 290.1,91.3 278.5,103.5 270.9,118.7 267.0,127.4 259.3,122.7 255.5,110.3 251.7,101.2 247.8,80.6 244.0,65.7 234.4,40.8 220.9,36.8 211.3,23.7" fill="#f7f3f1"/><polygon points="305.4,103.5 309.3,99.3 322.7,98.8 325.6,105.8 316.9,112.9 309.3,111.1 305.4,103.5" fill="#d6ebd1"/><polygon points="5.9,105.8 5.9,87.2 11.7,88.7 21.3,96.3 25.1,101.2 19.3,108.0 9.7,108.0 5.9,105.8" fill="#f7f3f1"/><polygon points="697.1,105.8 697.1,87.2 704.8,88.7 714.4,96.3 718.2,101.2 712.5,108.0 702.9,108.0 697.1,105.8" fill="#f7f3f1"/><polygon points="80.8,82.8 92.3,86.1 105.7,80.6 121.1,86.1 140.3,91.3 159.5,91.3 169.1,88.7 178.7,86.1 188.3,83.4 194.1,96.3 186.4,101.2 182.5,110.3 172.9,122.7 170.1,130.4 174.9,137.7 184.5,141.1 194.1,144.5 194.1,152.7 199.8,155.8 200.8,144.5 203.7,134.1 201.7,124.7 207.5,117.5 217.1,122.7 226.7,126.6 228.6,134.1 233.4,141.1 242.1,151.1 244.0,154.2 236.3,160.3 224.8,160.3 228.6,164.7 226.7,169.0 234.4,169.0 236.3,171.8 228.6,175.9 222.9,174.5 219.0,168.2 215.2,174.5 207.5,174.5 199.8,178.6 192.1,182.5 192.1,171.8 180.6,166.2 169.1,163.3 115.3,163.3 111.5,160.3 105.7,154.2 101.9,146.2 96.1,137.7 88.5,130.4 80.8,125.5" fill="#d4e8cf"/><polygon points="169.1,88.7 178.7,86.1 188.3,83.4 194.1,96.3 186.4,101.2 182.5,110.3 172.9,122.7 170.1,130.4 174.9,137.7 184.5,141.1 194.1,144.5 194.1,152.7 199.8,155.8 200.8,144.5 203.7,134.1 201.7,124.7 207.5,117.5 217.1,122.7 226.7,126.6 228.6,118.7 213.3,110.3 197.9,110.3 186.4,101.2 169.1,88.7" fill="#c6ddc6"/><polygon points="105.0,84.5 158.0,-14.4 219.0,-14.4 207.5,23.7 197.9,40.8 199.8,57.7 211.3,71.9 228.6,96.3 232.5,99.7 226.7,116.6 213.3,116.6 201.7,112.4 194.1,96.3 188.3,83.4 178.7,86.1 159.5,91.3 121.1,86.1 105.0,84.5" fill="#cfe3cb"/><polygon points="124.9,80.6 149.9,86.1 157.6,77.8 149.9,59.1 130.7,59.1 124.9,80.6" fill="#d4e8cf"/><polygon points="178.7,68.8 197.9,57.0 215.2,74.9 228.6,93.9 232.5,98.8 226.7,114.6 213.3,112.4 201.7,108.0 209.4,96.3 197.9,83.4 182.5,80.6 178.7,68.8" fill="#d4e8cf"/><polygon points="163.3,36.8 188.3,36.8 201.7,32.6 213.3,19.0 232.5,-14.4 197.9,-28.3 169.1,-14.4 163.3,36.8" fill="#d4e8cf"/><polygon points="111.5,70.0 121.1,71.9 126.9,55.7 113.4,53.5 111.5,70.0" fill="#d4e8cf"/><polygon points="169.1,68.8 182.5,52.1 197.9,52.1 174.9,40.8 159.5,40.8 163.3,62.4 169.1,68.8" fill="#d4e8cf"/><polygon points="126.9,44.7 149.9,48.5 151.8,32.6 132.6,36.8 126.9,44.7" fill="#d4e8cf"/><polygon points="186.4,110.3 196.0,116.6 197.9,110.3 186.4,103.5 186.4,110.3" fill="#d4e8cf"/><polygon points="238.2,167.3 249.7,169.9 250.3,161.8 244.0,155.5 238.2,167.3" fill="#d4e8cf"/><polygon points="80.8,82.8 63.5,77.8 51.0,73.1 40.5,80.6 32.8,88.7 40.5,98.8 28.9,103.5 40.5,110.3 34.7,118.7 34.7,124.7 40.5,132.3 50.1,131.2 40.5,142.9 57.7,135.9 63.5,128.5 71.2,124.7 80.8,125.5" fill="#9ccb93"/><polygon points="115.3,163.3 169.1,163.3 180.6,166.2 192.1,171.8 192.1,182.5 199.8,178.6 207.5,174.5 215.2,174.5 219.0,168.2 222.9,174.5 217.1,178.6 217.1,183.8 209.4,186.3 205.6,192.5 206.5,198.5 201.7,202.0 196.0,207.7 197.9,217.6 196.9,221.5 194.1,219.8 192.1,213.3 188.3,211.1 180.6,210.4 178.7,213.3 171.0,212.0 165.3,215.9 164.9,219.8 161.4,218.7 153.7,213.3 150.9,212.0 147.0,207.0 138.4,208.2 131.1,205.5 126.7,205.5 124.0,202.0 119.9,200.6 116.3,193.7 113.4,186.3 112.5,179.9 113.4,170.4 112.1,165.0 115.3,163.3" fill="#9ccb93"/><polygon points="126.7,205.5 131.1,205.5 138.4,208.2 147.0,207.0 150.9,212.0 153.7,213.3 161.4,218.7 164.9,219.8 164.3,228.2 168.1,234.7 170.1,236.0 176.8,234.7 177.7,230.2 184.5,229.2 182.5,235.3 180.6,236.8 175.8,239.4 174.5,243.4 169.1,240.4 163.3,240.0 157.6,237.4 148.9,231.3 149.5,229.2 148.0,225.7 142.2,220.8 135.5,213.3 131.7,208.4 134.5,207.7 140.3,217.6 140.3,226.1 136.5,223.0 132.6,215.5 126.7,205.5" fill="#b5dbad"/><polygon points="174.5,243.4 180.6,236.8 182.5,235.3 182.5,240.4 190.2,240.8 191.6,242.6 190.8,250.3 194.1,254.1 199.8,253.2 202.9,254.9 201.7,257.4 196.9,257.4 192.5,255.7 187.0,252.2 183.3,246.3 176.8,244.7 174.5,243.4" fill="#b0d8a8"/><polygon points="188.3,228.4 196.0,225.7 203.7,228.2 209.0,231.9 202.7,232.5 197.9,228.8 188.3,228.4" fill="#a5d39d"/><polygon points="208.7,232.7 220.0,234.3 220.0,235.6 214.2,237.2 208.7,235.6" fill="#b0d8a8"/><polygon points="202.9,254.9 205.6,253.4 206.5,250.6 213.3,247.5 215.2,249.1 220.9,251.2 228.6,250.8 232.5,251.0 236.3,255.1 242.1,260.0 247.8,260.3 252.6,263.4 255.5,268.0 257.4,272.5 266.1,275.9 274.7,277.1 284.3,281.7 284.7,285.4 280.5,292.7 276.6,300.6 275.7,308.7 272.8,314.8 266.1,317.3 258.4,323.2 257.4,328.8 252.6,335.3 248.8,341.0 245.9,343.3 242.1,344.5 241.1,350.5 232.5,352.9 226.7,357.9 226.7,368.5 221.9,372.6 224.8,376.8 220.2,384.2 213.3,382.7 208.5,382.7 206.5,371.2 210.4,355.4 210.4,348.1 214.2,331.9 216.5,306.6 205.6,299.6 196.2,283.0 197.9,277.3 196.0,274.4 197.9,270.0 200.8,266.5 202.9,263.8 202.9,254.9" fill="#a8d4a0"/><polygon points="213.3,247.5 215.2,249.1 220.9,251.2 228.6,250.8 232.5,251.0 236.3,255.1 234.4,260.9 229.8,264.0 223.2,269.2 221.9,260.0 217.1,258.0 212.3,257.1 213.3,247.5" fill="#9ccd93"/><polygon points="202.9,254.9 205.6,253.4 206.5,250.6 213.3,247.5 212.3,257.1 217.1,258.0 221.9,260.0 223.2,269.2 218.1,273.4 217.1,279.2 211.3,275.3 207.5,271.9 200.8,266.5 202.9,263.8 202.9,254.9" fill="#a8d4a0"/><polygon points="252.6,263.4 255.5,268.0 257.4,272.5 266.1,275.9 274.7,277.1 284.3,281.7 284.7,285.4 280.5,292.7 276.6,300.6 275.7,308.7 272.8,314.8 266.1,317.3 258.4,323.2 257.4,328.8 252.6,335.3 248.8,340.3 240.9,332.4 244.6,327.5 246.7,322.4 244.7,315.9 240.1,310.7 240.1,303.2 235.9,300.6 226.1,290.8 216.1,292.7 211.3,285.9 217.1,279.2 218.1,273.4 223.2,269.2 229.8,264.0 236.3,261.5 243.0,267.7 247.8,267.1 252.6,263.4" fill="#b4daac"/><polygon points="216.5,306.6 219.0,314.8 220.9,325.4 218.1,338.7 215.2,355.4 214.2,371.2 213.3,382.7 220.2,384.2 224.8,376.8 221.9,372.6 226.7,368.5 226.7,357.9 232.5,352.9 241.1,350.5 242.1,344.5 239.4,339.8 240.9,332.4 244.6,327.5 246.7,322.4 244.7,315.9 240.1,310.7 240.1,303.2 235.9,300.6 226.1,290.8 219.0,292.7 219.0,300.6 216.5,306.6" fill="#a8d4a0"/><polygon points="239.4,339.8 240.9,332.4 248.8,340.3 245.9,343.3 242.1,344.5 239.4,339.8" fill="#b4daac"/><polygon points="216.5,306.6 219.0,314.8 220.9,325.4 218.1,338.7 215.2,355.4 214.2,371.2 213.3,382.7 208.5,382.7 206.5,371.2 210.4,355.4 210.4,348.1 214.2,331.9 216.5,306.6" fill="#b4daac"/><polygon points="318.9,230.2 320.8,224.0 326.5,216.6 332.7,211.1 333.3,205.5 340.0,197.8 347.7,199.7 357.3,195.4 370.7,194.2 372.6,199.7 370.7,202.0 380.3,205.9 388.9,210.0 389.9,206.6 399.5,207.3 407.2,209.1 412.9,208.2 417.2,208.2 417.7,215.5 413.9,211.3 418.7,224.0 422.5,230.2 426.4,240.4 434.4,249.3 449.8,248.7 449.4,251.2 443.7,261.9 432.1,273.4 429.3,276.3 427.0,281.1 427.7,290.8 429.3,301.6 419.7,312.8 419.7,319.0 414.7,323.2 413.9,329.3 409.1,335.3 400.5,341.0 389.9,342.8 386.8,341.0 385.7,334.2 380.3,324.3 379.1,315.9 374.2,305.2 374.5,297.7 377.4,292.7 374.5,283.0 368.8,273.4 369.7,264.2 363.0,263.2 360.1,259.4 353.4,260.0 345.7,261.9 337.1,263.0 329.4,258.2 326.0,254.1 322.5,250.3 319.2,246.3 317.9,243.0 319.8,239.4 320.8,234.3 318.9,230.2" fill="#b3d9ab"/><polygon points="318.9,230.2 320.8,224.0 326.5,216.6 332.7,211.1 333.3,205.5 340.0,197.8 347.7,199.7 348.2,205.5 341.9,211.1 334.8,216.1 326.5,224.0 318.9,230.2" fill="#b8dcb0"/><polygon points="347.7,199.7 357.3,195.4 370.7,194.2 372.6,199.7 370.7,202.0 380.3,205.9 388.9,210.0 389.9,206.6 399.5,207.3 399.5,232.3 397.6,232.3 380.3,226.1 374.5,225.1 361.1,233.3 353.4,230.2 341.9,221.9 334.8,216.1 341.9,211.1 348.2,205.5 347.7,199.7" fill="#c0e0b9"/><polygon points="399.5,207.3 407.2,209.1 412.9,208.2 417.2,208.2 417.7,215.5 413.9,211.3 418.7,224.0 422.5,228.2 399.5,228.2 399.5,207.3" fill="#c8e4c1"/><polygon points="318.9,230.2 326.5,224.0 334.8,216.1 341.9,221.9 353.4,230.2 361.1,233.3 374.5,225.1 380.3,226.1 397.6,232.3 399.5,228.2 422.5,228.2 426.4,240.4 434.4,249.3 432.1,254.1 420.6,261.9 414.9,264.8 403.3,261.9 393.7,262.9 380.3,257.1 368.8,250.3 359.2,248.3 347.7,246.3 336.1,248.3 328.5,246.3 319.2,246.3 317.9,243.0 319.8,239.4 320.8,234.3 318.9,230.2" fill="#9ccd93"/><polygon points="318.9,230.2 326.5,224.0 334.8,216.1 341.9,221.9 353.4,230.2 359.2,234.3 359.2,248.3 347.7,246.3 336.1,248.3 328.5,246.3 319.2,246.3 317.9,243.0 319.8,239.4 320.8,234.3 318.9,230.2" fill="#b3d9ab"/><polygon points="319.2,246.3 328.5,246.3 336.1,248.3 347.7,246.3 359.2,248.3 368.8,250.3 369.7,264.2 363.0,263.2 360.1,259.4 353.4,260.0 345.7,261.9 337.1,263.0 329.4,258.2 326.0,254.1 322.5,250.3 319.2,246.3" fill="#aed8a6"/><polygon points="357.3,258.0 357.3,249.3 359.2,245.3 368.8,246.3 378.4,246.3 378.4,250.3 374.5,258.0 368.8,262.9 363.0,263.2 360.1,259.4 357.3,258.0" fill="#93c78b"/><polygon points="420.6,261.9 432.1,254.1 434.4,249.3 449.8,248.7 449.4,251.2 443.7,261.9 432.1,273.4 429.3,276.3 427.0,281.1 416.8,273.4 414.9,264.8 420.6,261.9" fill="#9ccd93"/><polygon points="375.5,283.0 386.1,279.2 387.0,264.8 397.6,261.9 403.3,261.9 411.0,267.7 408.1,274.4 408.1,283.0 410.1,287.9 406.2,287.9 407.2,296.7 401.4,293.7 393.7,292.7 391.8,285.0 384.1,285.0 375.5,283.0" fill="#a8d4a0"/><polygon points="368.8,273.4 369.7,264.2 368.8,262.9 374.5,258.0 378.4,250.3 380.3,257.1 393.7,262.9 397.6,261.9 387.0,264.8 386.1,279.2 375.5,283.0 374.5,283.0 368.8,273.4" fill="#9ccd93"/><polygon points="408.1,274.4 411.0,267.7 414.9,264.8 416.8,273.4 427.0,281.1 427.7,290.8 429.3,301.6 419.7,312.8 419.7,319.0 414.7,323.2 411.0,314.8 414.9,304.6 409.1,300.6 407.2,296.7 406.2,287.9 410.1,287.9 408.1,283.0 408.1,274.4" fill="#aed8a6"/><polygon points="374.5,283.0 384.1,285.0 391.8,285.0 393.7,292.7 401.4,293.7 407.2,296.7 409.1,300.6 399.5,305.6 391.8,306.6 374.2,305.2 374.5,297.7 377.4,292.7 374.5,283.0" fill="#aed8a6"/><polygon points="374.2,305.2 391.8,306.6 399.5,305.6 409.1,300.6 414.9,304.6 411.0,314.8 414.7,323.2 413.9,329.3 409.1,335.3 400.5,341.0 389.9,342.8 386.8,341.0 385.7,334.2 380.3,324.3 379.1,315.9 374.2,305.2" fill="#bfe0b8"/><polygon points="385.7,334.2 381.3,327.5 389.9,320.7 389.9,314.8 399.5,322.8 403.3,315.9 412.0,314.8 414.7,323.2 413.9,329.3 409.1,335.3 400.5,341.0 389.9,342.8 386.8,341.0 385.7,334.2" fill="#c6e3bf"/><polygon points="446.2,294.7 448.5,301.6 446.5,305.6 442.3,320.0 437.9,322.2 435.2,316.9 436.6,310.7 436.0,304.6 440.8,301.6 446.2,294.7" fill="#a8d4a0"/><polygon points="340.7,197.3 334.2,194.9 334.6,182.5 336.1,178.0 348.6,178.8 349.2,171.8 342.9,166.2 348.6,164.2 354.4,159.7 359.2,155.8 361.1,150.1 367.8,148.5 368.0,137.7 371.7,135.2 371.7,146.2 374.5,147.2 378.4,147.8 388.0,146.5 391.8,139.4 397.6,137.0 396.6,129.7 407.2,126.6 395.7,126.6 392.8,122.7 392.8,114.6 399.5,105.8 393.7,102.1 385.1,116.6 387.0,128.5 383.2,137.7 379.3,141.1 376.1,141.1 372.6,131.2 366.9,134.1 362.1,131.5 361.1,120.7 364.9,115.8 370.7,110.3 376.5,101.2 380.3,88.7 388.0,80.6 399.5,74.9 405.3,74.9 411.0,80.6 414.9,84.5 428.3,93.9 430.2,98.8 420.6,98.8 416.8,105.8 422.5,110.3 436.0,101.2 436.0,88.7 441.7,91.3 455.2,89.8 464.8,89.3 468.6,81.7 480.1,86.1 479.2,74.9 484.0,62.4 491.7,65.7 489.7,86.1 493.6,88.7 495.5,68.8 505.1,67.6 507.0,59.1 518.5,55.7 516.6,48.5 530.1,40.8 543.5,36.8 551.2,26.4 556.9,34.3 566.5,36.8 568.5,59.1 580.0,62.4 597.3,65.7 601.1,74.9 620.3,65.7 639.5,71.9 658.7,80.6 677.9,80.6 689.4,81.7 697.1,87.2 697.1,105.8 691.3,107.1 695.2,117.5 685.6,119.5 678.9,126.6 666.4,127.4 664.5,135.9 662.5,145.2 652.4,157.3 650.1,144.5 651.0,135.9 660.6,124.7 658.7,120.7 647.2,129.7 626.1,129.3 618.4,137.7 611.7,146.2 622.2,151.1 621.3,164.7 611.7,178.0 603.0,180.9 600.5,185.1 596.3,188.1 599.9,196.4 594.4,200.9 593.6,193.3 590.9,192.3 585.0,190.3 584.8,185.3 578.1,189.6 580.0,194.5 586.7,194.9 582.9,197.3 580.6,200.9 584.8,206.6 585.7,211.5 581.1,220.8 576.1,224.9 568.5,227.8 562.7,230.2 559.8,228.8 556.4,230.9 554.6,235.3 560.4,241.4 561.4,248.7 553.1,254.9 552.7,251.2 545.4,246.9 543.5,252.2 542.0,253.8 544.3,257.4 550.2,262.9 550.2,269.0 546.0,265.9 540.2,256.3 541.0,251.4 539.1,239.4 532.6,240.4 532.4,234.5 528.1,229.2 525.3,228.2 520.5,229.0 518.2,231.7 513.7,235.3 505.7,240.6 505.1,251.2 500.3,256.1 498.4,253.2 492.6,240.8 491.3,233.3 490.9,229.6 485.9,227.1 483.0,225.5 479.8,221.3 469.6,221.5 461.5,220.4 459.8,217.4 456.3,218.7 450.2,215.7 447.5,211.1 443.7,211.1 447.5,219.8 450.4,221.9 450.6,224.0 455.2,223.8 459.6,219.3 460.0,223.0 466.3,227.1 462.3,234.3 457.1,238.4 451.3,241.0 437.9,246.7 434.6,246.7 433.5,241.4 430.2,235.3 426.4,228.6 423.3,223.0 418.7,215.5 417.7,212.2 417.2,208.2 419.7,202.2 420.6,197.8 421.2,195.4 413.9,197.1 409.1,196.9 403.7,194.9 401.8,189.1 407.2,185.1 401.4,185.6 396.6,187.1 397.6,192.5 394.7,196.1 391.8,191.3 389.9,188.3 388.7,183.0 382.2,178.6 377.6,174.3 375.1,175.9 378.4,182.5 381.5,187.6 382.2,192.5 387.0,187.1 384.1,185.1 376.5,177.5 375.1,174.5 371.1,177.2 366.9,177.8 359.2,178.8 357.6,182.5 352.8,185.8 351.5,190.6 347.7,195.4 340.7,197.3" fill="#a3d19b"/><polygon points="405.3,74.9 411.0,80.6 414.9,84.5 428.3,93.9 430.2,98.8 420.6,98.8 416.8,105.8 422.5,110.3 436.0,101.2 436.0,88.7 441.7,91.3 455.2,89.8 464.8,89.3 468.6,81.7 480.1,86.1 479.2,74.9 484.0,62.4 491.7,65.7 489.7,86.1 493.6,88.7 495.5,68.8 505.1,67.6 507.0,59.1 518.5,55.7 516.6,48.5 530.1,40.8 543.5,36.8 551.2,26.4 556.9,34.3 566.5,36.8 568.5,59.1 580.0,62.4 597.3,65.7 601.1,74.9 620.3,65.7 639.5,71.9 658.7,80.6 677.9,80.6 689.4,81.7 697.1,87.2 697.1,105.8 691.3,107.1 695.2,117.5 685.6,119.5 678.9,126.6 666.4,127.4 664.5,135.9 662.5,145.2 652.4,157.3 650.1,144.5 651.0,135.9 660.6,124.7 658.7,120.7 647.2,129.7 626.1,129.3 618.4,137.7 611.7,146.2 622.2,151.1 621.3,164.7 611.7,178.0 603.0,180.9 602.1,181.7 603.0,174.5 606.9,166.2 595.3,160.3 583.8,150.1 576.1,161.5 558.9,160.3 539.7,154.2 520.5,163.3 505.1,158.8 497.4,147.8 482.1,144.5 468.6,147.8 468.6,157.3 457.1,158.8 443.7,169.0 443.7,182.5 434.1,183.8 428.3,178.6 424.5,169.0 428.3,164.7 428.3,160.3 419.7,154.2 412.9,154.2 412.0,147.8 405.3,141.1 405.3,134.1 404.3,126.6 407.2,126.6 395.7,126.6 409.1,120.7 409.1,112.4 408.1,96.3 405.3,86.1 405.3,74.9" fill="#8fc488"/><polygon points="340.7,197.3 334.2,194.9 334.6,182.5 336.1,178.0 348.6,178.8 349.2,171.8 342.9,166.2 348.6,164.2 354.4,159.7 359.2,155.8 361.1,150.1 367.8,148.5 368.0,137.7 371.7,135.2 371.7,146.2 374.5,147.2 378.4,147.8 388.0,146.5 391.8,139.4 397.6,137.0 396.6,129.7 407.2,126.6 395.7,126.6 392.8,122.7 392.8,114.6 399.5,105.8 393.7,102.1 385.1,116.6 387.0,128.5 383.2,137.7 379.3,141.1 376.1,141.1 372.6,131.2 366.9,134.1 362.1,131.5 361.1,120.7 364.9,115.8 370.7,110.3 376.5,101.2 380.3,88.7 388.0,80.6 399.5,74.9 405.3,74.9 405.3,86.1 408.1,96.3 409.1,112.4 409.1,120.7 404.3,126.6 405.3,141.1 397.6,147.8 397.6,158.8 394.7,164.7 402.4,165.6 406.2,173.2 408.3,174.5 406.4,176.7 404.5,181.2 405.3,184.5 401.4,185.6 396.6,187.1 397.6,192.5 394.7,196.1 391.8,191.3 389.9,188.3 388.7,183.0 382.2,178.6 377.6,174.3 375.1,175.9 378.4,182.5 381.5,187.6 382.2,192.5 387.0,187.1 384.1,185.1 376.5,177.5 375.1,174.5 371.1,177.2 366.9,177.8 359.2,178.8 357.6,182.5 352.8,185.8 351.5,190.6 347.7,195.4 340.7,197.3" fill="#d6ebd1"/><polygon points="397.6,147.8 405.3,141.1 412.0,147.8 412.9,154.2 419.7,154.2 428.3,160.3 428.3,164.7 424.5,169.0 418.7,173.2 415.8,175.9 413.9,173.2 410.1,170.4 408.3,174.5 406.2,173.2 402.4,165.6 394.7,164.7 397.6,158.8 397.6,147.8" fill="#8fc488"/><polygon points="428.3,178.6 434.1,183.8 443.7,182.5 446.5,186.3 445.6,191.3 436.9,190.1 432.1,185.1 428.3,178.6" fill="#9ccd93"/><polygon points="401.8,189.1 403.7,194.9 409.1,196.9 413.9,197.1 421.2,195.4 420.6,197.8 424.5,195.4 432.1,194.7 437.5,194.5 436.9,188.8 432.1,185.1 431.2,183.8 424.5,185.1 418.7,182.5 409.1,184.8 405.3,184.5 407.2,185.1 401.8,189.1" fill="#95c78d"/><polygon points="417.2,208.2 419.7,202.2 420.6,197.8 424.5,195.4 432.1,194.7 437.5,194.5 439.8,199.7 443.7,211.1 447.5,219.8 450.4,221.9 450.6,224.0 455.2,223.8 459.6,219.3 460.0,223.0 466.3,227.1 462.3,234.3 457.1,238.4 451.3,241.0 437.9,246.7 434.6,246.7 433.5,241.4 430.2,235.3 426.4,228.6 423.3,223.0 418.7,215.5 417.7,212.2 417.2,208.2" fill="#a8d4a0"/><polygon points="437.5,194.5 436.9,188.8 443.7,190.6 445.6,191.3 455.2,194.0 466.7,193.7 478.2,194.2 487.8,195.4 495.5,194.9 499.3,199.7 494.5,205.0 487.8,215.5 485.9,223.0 483.0,225.5 479.8,221.3 469.6,221.5 461.5,220.4 459.8,217.4 456.3,218.7 450.2,215.7 447.5,211.1 443.7,211.1 439.8,199.7 437.5,194.5" fill="#93c68b"/><polygon points="443.7,169.0 457.1,158.8 468.6,157.3 468.6,147.8 482.1,144.5 497.4,147.8 505.1,158.8 514.7,169.0 505.1,174.5 505.1,181.2 493.6,179.9 484.0,185.1 478.2,179.9 468.6,177.2 459.0,174.5 451.3,183.8 449.4,175.9 453.3,169.0 446.5,170.4 443.7,169.0" fill="#a3d19b"/><polygon points="451.3,183.8 455.2,187.6 455.2,194.0 466.7,193.7 478.2,194.2 487.8,195.4 495.5,194.9 495.5,188.8 505.1,181.2 493.6,179.9 484.0,185.1 478.2,179.9 468.6,177.2 459.0,174.5 451.3,183.8" fill="#bfe0b8"/><polygon points="520.5,163.3 539.7,154.2 558.9,160.3 576.1,161.5 580.0,169.0 566.5,174.5 553.1,183.0 535.8,180.4 526.2,173.2 520.5,163.3" fill="#a3d19b"/><polygon points="505.1,181.2 495.5,188.8 495.5,194.9 499.3,199.7 503.2,205.5 502.2,210.0 507.0,211.1 520.5,215.9 528.1,215.9 537.7,214.8 539.7,223.0 545.4,229.2 555.0,226.5 559.8,228.8 562.7,230.2 568.5,227.8 576.1,224.9 581.1,220.8 585.7,211.5 584.8,206.6 580.6,200.9 582.9,197.3 586.7,194.9 580.0,194.5 578.1,189.6 584.8,185.3 590.5,187.6 599.2,181.5 602.1,181.7 603.0,174.5 606.9,166.2 595.3,160.3 583.8,150.1 576.1,161.5 580.0,169.0 566.5,174.5 553.1,183.0 535.8,180.4 526.2,173.2 520.5,163.3 514.7,169.0 505.1,174.5 505.1,181.2" fill="#a3d19b"/><polygon points="590.5,187.6 599.2,181.5 602.1,181.7 600.5,185.1 596.3,188.1 599.9,196.4 598.2,199.7 594.4,200.9 593.6,193.3 590.9,192.3 590.5,187.6" fill="#c6e3bf"/><polygon points="483.0,225.5 485.9,223.0 487.8,215.5 494.5,205.0 499.3,199.7 503.2,205.5 502.2,210.0 507.0,211.1 520.5,215.9 528.1,215.9 537.7,214.8 532.9,224.0 529.1,228.2 528.1,229.2 525.3,228.2 520.5,229.0 518.2,231.7 513.7,235.3 505.7,240.6 505.1,251.2 500.3,256.1 498.4,253.2 492.6,240.8 491.3,233.3 490.9,229.6 485.9,227.1 483.0,225.5" fill="#93c68b"/><polygon points="537.7,214.8 539.7,223.0 545.4,229.2 555.0,226.5 559.8,228.8 556.4,230.9 554.6,235.3 560.4,241.4 561.4,248.7 553.1,254.9 552.7,251.2 545.4,246.9 543.5,252.2 542.0,253.8 544.3,257.4 550.2,262.9 550.2,269.0 546.0,265.9 540.2,256.3 541.0,251.4 539.1,239.4 532.6,240.4 532.4,234.5 528.1,229.2 529.1,228.2 532.9,224.0 537.7,214.8" fill="#a8d4a0"/><polygon points="404.5,181.2 405.3,184.5 409.1,184.8 418.7,182.5 424.5,185.1 431.2,183.8 428.3,178.6 423.5,175.4 418.7,174.5 415.8,175.9 413.9,173.2 410.1,170.4 408.1,174.5 406.4,176.7 404.5,181.2" fill="#bed0e5"/><polygon points="441.7,175.9 446.5,170.4 453.3,169.0 453.3,174.5 449.4,175.9 452.3,182.5 455.2,187.6 455.2,194.0 447.5,194.2 445.6,191.3 446.5,186.3 443.7,182.5 441.7,175.9" fill="#bed0e5"/><polygon points="340.6,160.3 354.4,156.7 354.8,152.0 351.5,149.5 348.6,144.5 347.7,137.7 345.2,131.9 341.9,131.9 339.6,138.4 341.9,144.5 345.7,147.8 342.9,151.7 341.5,155.2 344.8,156.1 340.6,160.3" fill="#d6ebd1"/><polygon points="332.3,155.5 340.0,153.6 340.0,147.8 337.1,143.9 332.3,147.2 332.3,155.5" fill="#d6ebd1"/><polygon points="601.1,208.2 604.0,200.9 610.7,201.6 614.2,200.9 619.9,199.7 621.8,197.3 623.8,190.1 623.2,184.0 620.3,186.3 619.7,191.3 614.5,195.4 605.9,198.7 602.6,202.0 601.1,208.2" fill="#c6e3bf"/><polygon points="620.3,183.8 623.2,181.2 630.9,179.1 628.0,176.7 623.6,173.5 621.3,179.1 620.3,183.8" fill="#c6e3bf"/><polygon points="624.1,171.8 627.0,163.3 625.1,146.9 624.1,157.3 624.1,171.8" fill="#8fc488"/><polygon points="504.7,259.6 508.6,257.6 507.0,253.4 505.1,252.6 504.7,259.6" fill="#b0d8a8"/><polygon points="582.3,226.5 583.8,228.2 585.7,221.9 584.8,221.3 582.3,226.5" fill="#c6e3bf"/><polygon points="581.9,235.3 586.3,235.3 585.7,240.4 589.6,246.3 593.4,253.2 593.4,259.0 585.7,258.0 588.6,252.2 583.8,247.3 581.9,242.4 581.9,235.3" fill="#b0d8a8"/><polygon points="560.8,268.6 562.7,277.3 571.3,279.2 575.2,275.3 578.1,269.6 580.0,261.9 576.1,258.0 573.3,261.9 568.5,265.4 561.9,267.7 560.8,268.6" fill="#b8dcb0"/><polygon points="534.3,260.7 539.7,263.8 549.3,271.5 555.0,277.3 555.0,283.0 547.9,279.2 543.5,273.4 534.3,260.7" fill="#b8dcb0"/><polygon points="553.5,284.6 558.9,283.4 567.5,284.6 571.3,286.5 562.7,287.3 553.5,284.6" fill="#b8dcb0"/><polygon points="580.9,282.1 582.9,269.6 591.5,268.6 587.7,270.5 584.8,273.4 587.7,277.3 583.8,282.1 580.9,282.1" fill="#b8dcb0"/><polygon points="603.0,273.4 610.7,277.8 616.5,274.4 622.2,276.5 629.9,279.2 634.7,283.0 639.5,292.0 633.7,290.8 628.0,286.3 622.2,288.9 616.5,287.5 616.1,281.7 606.9,279.2 604.9,276.9 603.0,273.4" fill="#b8dcb0"/><polygon points="569.4,314.8 570.4,323.2 572.3,340.5 578.1,343.3 588.6,340.5 599.2,335.5 606.9,336.6 612.0,342.8 616.1,338.7 617.4,344.5 620.3,350.0 627.0,352.4 632.4,352.9 639.5,349.3 645.3,334.2 646.2,327.5 645.3,321.1 638.5,314.8 631.8,308.3 630.7,300.6 627.4,298.6 625.1,292.2 623.2,296.7 623.4,304.2 619.3,305.6 614.0,302.4 611.9,300.6 614.2,295.1 606.1,293.7 602.1,295.1 600.1,300.2 594.4,298.6 590.3,303.2 585.7,307.2 582.9,310.1 576.1,311.9 569.4,314.8" fill="#c6e3bf"/><polygon points="683.1,341.9 686.5,345.7 689.2,349.3 694.2,349.7 691.3,353.7 689.4,358.7 686.9,358.5 686.7,354.9 685.2,353.4 686.5,348.1 683.1,341.9" fill="#c6e3bf"/><polygon points="372.6,19.0 382.2,3.5 403.3,3.5 393.7,23.7 382.2,36.8 372.6,19.0" fill="#f7f3f1"/><polygon points="451.3,71.9 457.1,59.1 460.9,44.7 470.5,36.8 482.1,32.6 466.7,52.1 459.0,68.8 451.3,71.9" fill="#8fc488"/><polygon points="533.9,8.9 543.5,-8.1 553.1,14.1 545.4,23.7 533.9,8.9" fill="#8fc488"/><polygon points="614.5,48.5 624.1,40.8 639.5,44.7 628.0,62.4 614.5,48.5" fill="#8fc488"/></svg><svg width="702" height="367" style="position:absolute;left:0;top:0;font-family:"Liberation Sans", sans-serif"><text x="182" y="157" font-size="23.7" fill="#2a3440" fill-opacity="0.42" text-anchor="middle">NORTH</text><text x="184" y="183" font-size="24.3" fill="#2a3440" fill-opacity="0.5" text-anchor="middle">AMERICA</text><text x="426" y="172" font-size="23.6" fill="#2a3440" fill-opacity="0.5" text-anchor="middle">EUROPE</text><text x="565" y="158.60000000000002" font-size="23.4" fill="#2a3440" fill-opacity="0.6" text-anchor="middle">ASIA</text><text x="423" y="274.6" font-size="23.9" fill="#2a3440" fill-opacity="0.68" text-anchor="middle">AFRICA</text><text x="277" y="311" font-size="24.2" fill="#2a3440" fill-opacity="0.6" text-anchor="middle">SOUTH</text><text x="277" y="337" font-size="24.3" fill="#2a3440" fill-opacity="0.65" text-anchor="middle">AMERICA</text><text x="588" y="329" font-size="24.5" fill="#2a3440" fill-opacity="0.55" text-anchor="start">AUSTRAL</text><text x="46" y="211.60000000000002" font-size="16.2" fill="#5f78c4" text-anchor="middle" >Pacific</text><text x="47" y="229" font-size="16.1" fill="#5f78c4" text-anchor="middle" >Ocean</text><text x="311" y="216" font-size="16.1" fill="#5f78c4" text-anchor="end" >Atlantic</text><text x="311" y="233" font-size="16.1" fill="#5f78c4" text-anchor="end" >Ocean</text><text x="490" y="319.29999999999995" font-size="16.1" fill="#5f78c4" text-anchor="start" >Indian</text><text x="490.5999999999999" y="337" font-size="16.1" fill="#5f78c4" text-anchor="start" >Ocean</text><rect x="6" y="341" width="6.3" height="6.3" fill="#f25022"/><rect x="13" y="341" width="6.3" height="6.3" fill="#7fba00"/><rect x="6" y="348" width="6.3" height="6.3" fill="#00a4ef"/><rect x="13" y="348" width="6.3" height="6.3" fill="#ffb900"/><text x="22.799999999999955" y="353" font-size="10.9" fill="#6b6b6b" text-anchor="start" >Microsoft Bing</text><text x="467.4000000000001" y="355" font-size="12.1" fill="#111" text-anchor="start" >© 2022 Microsoft Corporation</text><text x="636" y="355" font-size="11.9" fill="#2a3f9a" text-anchor="start" text-decoration="underline">Terms</text></svg></div><div style="position:absolute;left:1014px;top:526px;width:716px;height:410px;background:#fff;"></div><div style="position:absolute;left:1021.0px;top:527.9px;font-size:15.2px;color:#252423;font-weight:normal;white-space:nowrap;line-height:1;">ENVIRONMENT PERCENTILE SCORES &amp; GDP PER CAPITA | ABSOLUTE SCORES</div><div style="position:absolute;left:1022px;top:566px;width:14px;height:14px;border-radius:50%;background:#d4ead0"></div><div style="position:absolute;left:1038.0px;top:564.7px;font-size:15.5px;color:#605e5c;font-weight:normal;white-space:nowrap;line-height:1;">Environment/ T...</div><div style="position:absolute;left:1166px;top:566px;width:14px;height:14px;border-radius:50%;background:#b6dcb0"></div><div style="position:absolute;left:1182.0px;top:564.7px;font-size:15.5px;color:#605e5c;font-weight:normal;white-space:nowrap;line-height:1;">Environment/ 6...</div><div style="position:absolute;left:1310px;top:566px;width:14px;height:14px;border-radius:50%;background:#8fcb88"></div><div style="position:absolute;left:1326.0px;top:564.7px;font-size:15.5px;color:#605e5c;font-weight:normal;white-space:nowrap;line-height:1;">Environment/ ...</div><div style="position:absolute;left:1444px;top:566px;width:14px;height:14px;border-radius:50%;background:#5db55a"></div><div style="position:absolute;left:1460.0px;top:564.7px;font-size:15.5px;color:#605e5c;font-weight:normal;white-space:nowrap;line-height:1;">Environment...</div><div style="position:absolute;left:1569px;top:566px;width:14px;height:14px;border-radius:50%;background:#2e9e3a"></div><div style="position:absolute;left:1585.0px;top:564.7px;font-size:15.5px;color:#605e5c;font-weight:normal;white-space:nowrap;line-height:1;">Environment...</div><svg width="716" height="410" viewBox="1014 526 716 410" style="position:absolute;left:1014px;top:526px"><defs><clipPath id="pc"><rect x="1014" y="600" width="716" height="288"/></clipPath></defs><line x1="1084.2" y1="603.8" x2="1084.2" y2="887" stroke="#c8c8c8" stroke-width="1.2" stroke-dasharray="1.3 6.6"/><line x1="1236" y1="603.8" x2="1236" y2="887" stroke="#c8c8c8" stroke-width="1.2" stroke-dasharray="1.3 6.6"/><line x1="1387.9" y1="603.8" x2="1387.9" y2="887" stroke="#c8c8c8" stroke-width="1.2" stroke-dasharray="1.3 6.6"/><line x1="1539.7" y1="603.8" x2="1539.7" y2="887" stroke="#c8c8c8" stroke-width="1.2" stroke-dasharray="1.3 6.6"/><line x1="1691.5" y1="603.8" x2="1691.5" y2="887" stroke="#c8c8c8" stroke-width="1.2" stroke-dasharray="1.3 6.6"/><line x1="1084.2" y1="603.8" x2="1691.5" y2="603.8" stroke="#c8c8c8" stroke-width="1.2" stroke-dasharray="1.3 6.6"/><line x1="1084.2" y1="745.4" x2="1691.5" y2="745.4" stroke="#c8c8c8" stroke-width="1.2" stroke-dasharray="1.3 6.6"/><line x1="1084.2" y1="887" x2="1691.5" y2="887" stroke="#c8c8c8" stroke-width="1.2" stroke-dasharray="1.3 6.6"/><g clip-path="url(#pc)"><circle cx="1307.1" cy="630.7" r="6.6" fill="#cfe2f0" fill-opacity="0.92"/><circle cx="1385.0" cy="642.6" r="6.6" fill="#cfe2f0" fill-opacity="0.92"/><circle cx="1448.2" cy="606.3" r="6.6" fill="#cfe2f0" fill-opacity="0.92"/><circle cx="1464.5" cy="606.3" r="6.6" fill="#cfe2f0" fill-opacity="0.92"/><circle cx="1478.7" cy="603.0" r="6.6" fill="#cfe2f0" fill-opacity="0.92"/><circle cx="1487.3" cy="605.2" r="6.6" fill="#cfe2f0" fill-opacity="0.92"/><circle cx="1496.0" cy="603.0" r="6.6" fill="#cfe2f0" fill-opacity="0.92"/><circle cx="1502.6" cy="605.2" r="6.6" fill="#cfe2f0" fill-opacity="0.92"/><circle cx="1509.1" cy="603.0" r="6.6" fill="#cfe2f0" fill-opacity="0.92"/><circle cx="1521.0" cy="603.0" r="6.6" fill="#cfe2f0" fill-opacity="0.92"/><circle cx="1533.0" cy="603.0" r="6.6" fill="#cfe2f0" fill-opacity="0.92"/><circle cx="1554.7" cy="603.0" r="6.6" fill="#cfe2f0" fill-opacity="0.92"/><circle cx="1579.7" cy="605.2" r="6.6" fill="#cfe2f0" fill-opacity="0.92"/><circle cx="1452.6" cy="613.9" r="6.6" fill="#cfe2f0" fill-opacity="0.92"/><circle cx="1461.3" cy="611.7" r="6.6" fill="#cfe2f0" fill-opacity="0.92"/><circle cx="1458.0" cy="627.0" r="6.6" fill="#cfe2f0" fill-opacity="0.92"/><circle cx="1470.0" cy="623.7" r="6.6" fill="#cfe2f0" fill-opacity="0.92"/><circle cx="1464.5" cy="636.3" r="6.6" fill="#cfe2f0" fill-opacity="0.92"/><circle cx="1485.2" cy="619.3" r="6.6" fill="#cfe2f0" fill-opacity="0.92"/><circle cx="1485.2" cy="627.0" r="6.6" fill="#cfe2f0" fill-opacity="0.92"/><circle cx="1495.0" cy="611.7" r="6.6" fill="#cfe2f0" fill-opacity="0.92"/><circle cx="1438.0" cy="635.7" r="6.6" fill="#cfe2f0" fill-opacity="0.92"/><circle cx="1420.0" cy="635.0" r="6.6" fill="#cfe2f0" fill-opacity="0.92"/><circle cx="1412.8" cy="640.4" r="6.6" fill="#cfe2f0" fill-opacity="0.92"/><circle cx="1413.4" cy="652.4" r="6.6" fill="#cfe2f0" fill-opacity="0.92"/><circle cx="1578.7" cy="642.2" r="6.6" fill="#cfe2f0" fill-opacity="0.92"/><circle cx="1290.4" cy="700.9" r="6.6" fill="#b5d4e8" fill-opacity="0.92"/><circle cx="1316.5" cy="683.5" r="6.6" fill="#b5d4e8" fill-opacity="0.92"/><circle cx="1320.8" cy="683.5" r="6.6" fill="#b5d4e8" fill-opacity="0.92"/><circle cx="1331.7" cy="683.0" r="6.6" fill="#b5d4e8" fill-opacity="0.92"/><circle cx="1337.8" cy="679.1" r="6.6" fill="#b5d4e8" fill-opacity="0.92"/><circle cx="1349.1" cy="686.7" r="6.6" fill="#b5d4e8" fill-opacity="0.92"/><circle cx="1363.2" cy="677.6" r="6.6" fill="#b5d4e8" fill-opacity="0.92"/><circle cx="1375.6" cy="678.0" r="6.6" fill="#b5d4e8" fill-opacity="0.92"/><circle cx="1359.5" cy="690.4" r="6.6" fill="#b5d4e8" fill-opacity="0.92"/><circle cx="1340.8" cy="696.5" r="6.6" fill="#b5d4e8" fill-opacity="0.92"/><circle cx="1328.4" cy="702.0" r="6.6" fill="#b5d4e8" fill-opacity="0.92"/><circle cx="1316.5" cy="708.5" r="6.6" fill="#b5d4e8" fill-opacity="0.92"/><circle cx="1325.2" cy="709.6" r="6.6" fill="#b5d4e8" fill-opacity="0.92"/><circle cx="1336.0" cy="703.0" r="6.6" fill="#b5d4e8" fill-opacity="0.92"/><circle cx="1344.7" cy="709.6" r="6.6" fill="#b5d4e8" fill-opacity="0.92"/><circle cx="1327.8" cy="716.1" r="6.6" fill="#b5d4e8" fill-opacity="0.92"/><circle cx="1361.0" cy="715.7" r="6.6" fill="#b5d4e8" fill-opacity="0.92"/><circle cx="1381.3" cy="696.1" r="6.6" fill="#b5d4e8" fill-opacity="0.92"/><circle cx="1391.5" cy="671.5" r="6.6" fill="#b5d4e8" fill-opacity="0.92"/><circle cx="1388.2" cy="682.4" r="6.6" fill="#b5d4e8" fill-opacity="0.92"/><circle cx="1396.9" cy="688.9" r="6.6" fill="#b5d4e8" fill-opacity="0.92"/><circle cx="1399.1" cy="683.5" r="6.6" fill="#b5d4e8" fill-opacity="0.92"/><circle cx="1421.0" cy="675.9" r="6.6" fill="#b5d4e8" fill-opacity="0.92"/><circle cx="1425.4" cy="671.5" r="6.6" fill="#b5d4e8" fill-opacity="0.92"/><circle cx="1424.3" cy="681.3" r="6.6" fill="#b5d4e8" fill-opacity="0.92"/><circle cx="1434.5" cy="667.8" r="6.6" fill="#b5d4e8" fill-opacity="0.92"/><circle cx="1433.0" cy="688.3" r="6.6" fill="#b5d4e8" fill-opacity="0.92"/><circle cx="1441.7" cy="687.8" r="6.6" fill="#b5d4e8" fill-opacity="0.92"/><circle cx="1463.0" cy="693.3" r="6.6" fill="#b5d4e8" fill-opacity="0.92"/><circle cx="1442.8" cy="710.7" r="6.6" fill="#b5d4e8" fill-opacity="0.92"/><circle cx="1511.9" cy="706.7" r="6.6" fill="#b5d4e8" fill-opacity="0.92"/><circle cx="1405.8" cy="687.4" r="6.6" fill="#b5d4e8" fill-opacity="0.92"/><circle cx="1174.7" cy="728.3" r="6.6" fill="#8fbadb" fill-opacity="0.92"/><circle cx="1185.6" cy="758.7" r="6.6" fill="#8fbadb" fill-opacity="0.92"/><circle cx="1206.3" cy="763.9" r="6.6" fill="#8fbadb" fill-opacity="0.92"/><circle cx="1211.7" cy="751.5" r="6.6" fill="#8fbadb" fill-opacity="0.92"/><circle cx="1221.9" cy="754.1" r="6.6" fill="#8fbadb" fill-opacity="0.92"/><circle cx="1225.2" cy="753.5" r="6.6" fill="#8fbadb" fill-opacity="0.92"/><circle cx="1236.5" cy="742.8" r="6.6" fill="#8fbadb" fill-opacity="0.92"/><circle cx="1235.6" cy="762.8" r="6.6" fill="#8fbadb" fill-opacity="0.92"/><circle cx="1251.3" cy="749.8" r="6.6" fill="#8fbadb" fill-opacity="0.92"/><circle cx="1258.9" cy="754.6" r="6.6" fill="#8fbadb" fill-opacity="0.92"/><circle cx="1267.6" cy="754.6" r="6.6" fill="#8fbadb" fill-opacity="0.92"/><circle cx="1274.7" cy="745.4" r="6.6" fill="#8fbadb" fill-opacity="0.92"/><circle cx="1285.4" cy="751.5" r="6.6" fill="#8fbadb" fill-opacity="0.92"/><circle cx="1296.9" cy="747.6" r="6.6" fill="#8fbadb" fill-opacity="0.92"/><circle cx="1299.1" cy="748.7" r="6.6" fill="#8fbadb" fill-opacity="0.92"/><circle cx="1298.0" cy="755.2" r="6.6" fill="#8fbadb" fill-opacity="0.92"/><circle cx="1257.8" cy="772.6" r="6.6" fill="#8fbadb" fill-opacity="0.92"/><circle cx="1326.3" cy="731.3" r="6.6" fill="#8fbadb" fill-opacity="0.92"/><circle cx="1331.7" cy="729.1" r="6.6" fill="#8fbadb" fill-opacity="0.92"/><circle cx="1337.1" cy="733.5" r="6.6" fill="#8fbadb" fill-opacity="0.92"/><circle cx="1325.2" cy="738.9" r="6.6" fill="#8fbadb" fill-opacity="0.92"/><circle cx="1332.8" cy="742.2" r="6.6" fill="#8fbadb" fill-opacity="0.92"/><circle cx="1320.8" cy="748.7" r="6.6" fill="#8fbadb" fill-opacity="0.92"/><circle cx="1329.5" cy="748.7" r="6.6" fill="#8fbadb" fill-opacity="0.92"/><circle cx="1336.0" cy="750.9" r="6.6" fill="#8fbadb" fill-opacity="0.92"/><circle cx="1342.6" cy="755.2" r="6.6" fill="#8fbadb" fill-opacity="0.92"/><circle cx="1332.8" cy="763.9" r="6.6" fill="#8fbadb" fill-opacity="0.92"/><circle cx="1331.7" cy="769.3" r="6.6" fill="#8fbadb" fill-opacity="0.92"/><circle cx="1348.0" cy="763.9" r="6.6" fill="#8fbadb" fill-opacity="0.92"/><circle cx="1356.7" cy="763.9" r="6.6" fill="#8fbadb" fill-opacity="0.92"/><circle cx="1343.7" cy="722.2" r="6.6" fill="#8fbadb" fill-opacity="0.92"/><circle cx="1362.1" cy="743.9" r="6.6" fill="#8fbadb" fill-opacity="0.92"/><circle cx="1368.7" cy="743.3" r="6.6" fill="#8fbadb" fill-opacity="0.92"/><circle cx="1375.2" cy="740.0" r="6.6" fill="#8fbadb" fill-opacity="0.92"/><circle cx="1370.8" cy="749.8" r="6.6" fill="#8fbadb" fill-opacity="0.92"/><circle cx="1386.0" cy="743.3" r="6.6" fill="#8fbadb" fill-opacity="0.92"/><circle cx="1387.1" cy="747.6" r="6.6" fill="#8fbadb" fill-opacity="0.92"/><circle cx="1401.3" cy="717.2" r="6.6" fill="#8fbadb" fill-opacity="0.92"/><circle cx="1410.2" cy="731.7" r="6.6" fill="#8fbadb" fill-opacity="0.92"/><circle cx="1411.3" cy="740.0" r="6.6" fill="#8fbadb" fill-opacity="0.92"/><circle cx="1412.3" cy="749.8" r="6.6" fill="#8fbadb" fill-opacity="0.92"/><circle cx="1421.0" cy="743.9" r="6.6" fill="#8fbadb" fill-opacity="0.92"/><circle cx="1451.0" cy="747.0" r="6.6" fill="#8fbadb" fill-opacity="0.92"/><circle cx="1465.6" cy="746.5" r="6.6" fill="#8fbadb" fill-opacity="0.92"/><circle cx="1490.6" cy="746.5" r="6.6" fill="#8fbadb" fill-opacity="0.92"/><circle cx="1500.4" cy="746.1" r="6.6" fill="#8fbadb" fill-opacity="0.92"/><circle cx="1508.0" cy="748.3" r="6.6" fill="#8fbadb" fill-opacity="0.92"/><circle cx="1490.6" cy="767.8" r="6.6" fill="#8fbadb" fill-opacity="0.92"/><circle cx="1191.9" cy="787.4" r="6.6" fill="#5d9ccc" fill-opacity="0.92"/><circle cx="1196.9" cy="787.8" r="6.6" fill="#5d9ccc" fill-opacity="0.92"/><circle cx="1222.1" cy="791.1" r="6.6" fill="#5d9ccc" fill-opacity="0.92"/><circle cx="1269.3" cy="774.8" r="6.6" fill="#5d9ccc" fill-opacity="0.92"/><circle cx="1285.0" cy="779.6" r="6.6" fill="#5d9ccc" fill-opacity="0.92"/><circle cx="1275.2" cy="786.1" r="6.6" fill="#5d9ccc" fill-opacity="0.92"/><circle cx="1273.0" cy="797.6" r="6.6" fill="#5d9ccc" fill-opacity="0.92"/><circle cx="1278.4" cy="804.1" r="6.6" fill="#5d9ccc" fill-opacity="0.92"/><circle cx="1282.8" cy="800.4" r="6.6" fill="#5d9ccc" fill-opacity="0.92"/><circle cx="1286.0" cy="809.6" r="6.6" fill="#5d9ccc" fill-opacity="0.92"/><circle cx="1289.3" cy="816.1" r="6.6" fill="#5d9ccc" fill-opacity="0.92"/><circle cx="1289.3" cy="821.5" r="6.6" fill="#5d9ccc" fill-opacity="0.92"/><circle cx="1299.1" cy="823.7" r="6.6" fill="#5d9ccc" fill-opacity="0.92"/><circle cx="1297.6" cy="795.7" r="6.6" fill="#5d9ccc" fill-opacity="0.92"/><circle cx="1320.2" cy="775.9" r="6.6" fill="#5d9ccc" fill-opacity="0.92"/><circle cx="1319.7" cy="783.5" r="6.6" fill="#5d9ccc" fill-opacity="0.92"/><circle cx="1319.7" cy="786.7" r="6.6" fill="#5d9ccc" fill-opacity="0.92"/><circle cx="1333.2" cy="788.5" r="6.6" fill="#5d9ccc" fill-opacity="0.92"/><circle cx="1347.3" cy="775.2" r="6.6" fill="#5d9ccc" fill-opacity="0.92"/><circle cx="1380.6" cy="791.7" r="6.6" fill="#5d9ccc" fill-opacity="0.92"/><circle cx="1398.0" cy="785.7" r="6.6" fill="#5d9ccc" fill-opacity="0.92"/><circle cx="1148.7" cy="829.6" r="6.6" fill="#5d9ccc" fill-opacity="0.92"/><circle cx="1198.0" cy="822.6" r="6.6" fill="#5d9ccc" fill-opacity="0.92"/><circle cx="1205.2" cy="827.6" r="6.6" fill="#5d9ccc" fill-opacity="0.92"/><circle cx="1224.5" cy="811.7" r="6.6" fill="#5d9ccc" fill-opacity="0.92"/><circle cx="1224.5" cy="820.9" r="6.6" fill="#5d9ccc" fill-opacity="0.92"/><circle cx="1235.0" cy="822.2" r="6.6" fill="#5d9ccc" fill-opacity="0.92"/><circle cx="1244.7" cy="827.0" r="6.6" fill="#5d9ccc" fill-opacity="0.92"/><circle cx="1255.2" cy="816.1" r="6.6" fill="#5d9ccc" fill-opacity="0.92"/><circle cx="1253.0" cy="828.0" r="6.6" fill="#5d9ccc" fill-opacity="0.92"/><circle cx="1316.0" cy="813.9" r="6.6" fill="#5d9ccc" fill-opacity="0.92"/><circle cx="1321.9" cy="816.1" r="6.6" fill="#5d9ccc" fill-opacity="0.92"/><circle cx="1338.2" cy="821.5" r="6.6" fill="#5d9ccc" fill-opacity="0.92"/><circle cx="1344.3" cy="816.7" r="6.6" fill="#5d9ccc" fill-opacity="0.92"/><circle cx="1369.7" cy="813.5" r="6.6" fill="#5d9ccc" fill-opacity="0.92"/><circle cx="1373.0" cy="812.8" r="6.6" fill="#5d9ccc" fill-opacity="0.92"/><circle cx="1370.8" cy="820.4" r="6.6" fill="#5d9ccc" fill-opacity="0.92"/><circle cx="1435.2" cy="776.5" r="6.6" fill="#5d9ccc" fill-opacity="0.92"/><circle cx="1444.3" cy="806.3" r="6.6" fill="#5d9ccc" fill-opacity="0.92"/><circle cx="1410.2" cy="817.8" r="6.6" fill="#5d9ccc" fill-opacity="0.92"/><circle cx="1420.4" cy="819.3" r="6.6" fill="#5d9ccc" fill-opacity="0.92"/><circle cx="1099.1" cy="883.5" r="6.6" fill="#2b7bbb" fill-opacity="0.92"/><circle cx="1160.6" cy="885.7" r="6.6" fill="#2b7bbb" fill-opacity="0.92"/><circle cx="1179.5" cy="876.3" r="6.6" fill="#2b7bbb" fill-opacity="0.92"/><circle cx="1186.5" cy="857.0" r="6.6" fill="#2b7bbb" fill-opacity="0.92"/><circle cx="1192.6" cy="853.7" r="6.6" fill="#2b7bbb" fill-opacity="0.92"/><circle cx="1198.7" cy="870.4" r="6.6" fill="#2b7bbb" fill-opacity="0.92"/><circle cx="1190.4" cy="884.6" r="6.6" fill="#2b7bbb" fill-opacity="0.92"/><circle cx="1213.2" cy="884.6" r="6.6" fill="#2b7bbb" fill-opacity="0.92"/><circle cx="1217.1" cy="847.6" r="6.6" fill="#2b7bbb" fill-opacity="0.92"/><circle cx="1229.5" cy="885.7" r="6.6" fill="#2b7bbb" fill-opacity="0.92"/><circle cx="1233.4" cy="847.0" r="6.6" fill="#2b7bbb" fill-opacity="0.92"/><circle cx="1240.4" cy="843.3" r="6.6" fill="#2b7bbb" fill-opacity="0.92"/><circle cx="1244.1" cy="832.4" r="6.6" fill="#2b7bbb" fill-opacity="0.92"/><circle cx="1250.8" cy="849.8" r="6.6" fill="#2b7bbb" fill-opacity="0.92"/><circle cx="1259.5" cy="836.3" r="6.6" fill="#2b7bbb" fill-opacity="0.92"/><circle cx="1265.4" cy="880.2" r="6.6" fill="#2b7bbb" fill-opacity="0.92"/><circle cx="1268.7" cy="884.6" r="6.6" fill="#2b7bbb" fill-opacity="0.92"/><circle cx="1282.1" cy="885.0" r="6.6" fill="#2b7bbb" fill-opacity="0.92"/><circle cx="1308.9" cy="871.1" r="6.6" fill="#2b7bbb" fill-opacity="0.92"/><circle cx="1313.7" cy="866.1" r="6.6" fill="#2b7bbb" fill-opacity="0.92"/><circle cx="1320.2" cy="874.1" r="6.6" fill="#2b7bbb" fill-opacity="0.92"/><circle cx="1316.9" cy="882.4" r="6.6" fill="#2b7bbb" fill-opacity="0.92"/><circle cx="1337.8" cy="846.5" r="6.6" fill="#2b7bbb" fill-opacity="0.92"/><circle cx="1358.9" cy="856.3" r="6.6" fill="#2b7bbb" fill-opacity="0.92"/><circle cx="1379.1" cy="835.0" r="6.6" fill="#2b7bbb" fill-opacity="0.92"/><circle cx="1379.5" cy="848.3" r="6.6" fill="#2b7bbb" fill-opacity="0.92"/><circle cx="1383.4" cy="861.7" r="6.6" fill="#2b7bbb" fill-opacity="0.92"/><circle cx="1392.1" cy="871.5" r="6.6" fill="#2b7bbb" fill-opacity="0.92"/><circle cx="1369.7" cy="872.6" r="6.6" fill="#2b7bbb" fill-opacity="0.92"/><circle cx="1369.7" cy="877.0" r="6.6" fill="#2b7bbb" fill-opacity="0.92"/><circle cx="1369.7" cy="881.3" r="6.6" fill="#2b7bbb" fill-opacity="0.92"/></g></svg><div style="position:absolute;left:-330.0px;width:1400px;text-align:right;top:596.7px;font-size:14px;color:#605e5c;font-weight:normal;white-space:nowrap;line-height:1;">100</div><div style="position:absolute;left:-330.0px;width:1400px;text-align:right;top:738.3px;font-size:14px;color:#605e5c;font-weight:normal;white-space:nowrap;line-height:1;">50</div><div style="position:absolute;left:-330.0px;width:1400px;text-align:right;top:879.9px;font-size:14px;color:#605e5c;font-weight:normal;white-space:nowrap;line-height:1;">0</div><div style="position:absolute;left:384.2px;width:1400px;text-align:center;top:895.4px;font-size:14px;color:#605e5c;font-weight:normal;white-space:nowrap;line-height:1;">100</div><div style="position:absolute;left:536.0px;width:1400px;text-align:center;top:895.4px;font-size:14px;color:#605e5c;font-weight:normal;white-space:nowrap;line-height:1;">1,000</div><div style="position:absolute;left:687.9px;width:1400px;text-align:center;top:895.4px;font-size:14px;color:#605e5c;font-weight:normal;white-space:nowrap;line-height:1;">10,000</div><div style="position:absolute;left:839.7px;width:1400px;text-align:center;top:895.4px;font-size:14px;color:#605e5c;font-weight:normal;white-space:nowrap;line-height:1;">100,000</div><div style="position:absolute;left:991.5px;width:1400px;text-align:center;top:895.4px;font-size:14px;color:#605e5c;font-weight:normal;white-space:nowrap;line-height:1;">1,000,000</div><div style="position:absolute;left:687.0px;width:1400px;text-align:center;top:915.4px;font-size:14px;color:#252423;font-weight:normal;white-space:nowrap;line-height:1;">GDP Per Capita</div><div style="position:absolute;left:966px;top:738px;width:120px;text-align:center;font-size:14px;line-height:1;color:#252423;transform:rotate(-90deg)">Percentile Score</div><div style="position:absolute;left:29.0px;top:946.2px;font-size:14.15px;color:#252423;font-weight:normal;white-space:nowrap;line-height:1;"><span style="color:#1f3a93;font-weight:bold;text-decoration:underline;font-size:13.5px">Click here</span> to download the full Sovereign ESG Ratings dataset - must be logged into GRiD</div><div style="position:absolute;left:338.0px;width:1400px;text-align:right;top:946.1px;font-size:14.4px;color:#252423;font-weight:normal;white-space:nowrap;line-height:1;">Copyright © 2022, Verisk Maplecroft Limited. All rights reserved. Verisk Maplecroft is a Verisk business.</div><div style="position:absolute;left:0px;top:970px;width:1768px;height:24px;background:#f0efee;box-sizing:border-box;border-top:1px solid #dedede"></div><div style="position:absolute;left:27px;top:971px;width:73px;height:23px;background:#fff;box-sizing:border-box;border-bottom:3px solid #f2c811;border-left:1px solid #dcdcdc;border-right:1px solid #dcdcdc"></div><div style="position:absolute;left:-636.5px;width:1400px;text-align:center;top:978.5px;font-size:8.6px;color:#252423;font-weight:normal;white-space:nowrap;line-height:1;">Global View</div><div style="position:absolute;left:100px;top:971px;width:77px;height:23px;background:transparent;box-sizing:border-box;border-right:1px solid #dcdcdc"></div><div style="position:absolute;left:-561.0px;width:1400px;text-align:center;top:978.5px;font-size:8.6px;color:#444;font-weight:normal;white-space:nowrap;line-height:1;">Country View</div><div style="position:absolute;left:177px;top:971px;width:87px;height:23px;background:transparent;box-sizing:border-box;border-right:1px solid #dcdcdc"></div><div style="position:absolute;left:-479.5px;width:1400px;text-align:center;top:978.5px;font-size:8.6px;color:#444;font-weight:normal;white-space:nowrap;line-height:1;">Dimension View</div><svg width="26" height="12" style="position:absolute;left:0;top:976px"><path d="M8 3 L5 6 L8 9Z M18 3 L21 6 L18 9Z" fill="#c8c8c8"/></svg></div>
<div style="position:absolute;left:557px;top:420px;width:1768px;height:994px;background:#fff;border-radius:6px;overflow:hidden;box-shadow:0 1px 9px rgba(0,0,0,0.22)"><div style="position:absolute;left:22px;top:1px;width:1724px;height:969px;background:#f3f3f3;"></div><div style="position:absolute;left:22px;top:15px;width:1724px;height:43px;background:#fff;box-sizing:border-box;border:1.5px solid #c6c6c6"></div><svg width="110" height="34" viewBox="0 0 110 34" style="position:absolute;left:34px;top:21px"><g fill="#2a7de1"><path d="M6.1 4.3 C9 1.5 12 0.9 15 0.9 C18 0.9 21 1.5 24.1 4.3 Z"/><path d="M1.9 7.3 H7.9 L6.9 10.7 H0.9 Z"/><path d="M12.9 7.3 H27.5 Q29.2 8.5 29.2 10.7 H11.7 Z"/><path d="M0.2 14 H4.8 L6.9 20.8 L11.7 7.3 H14.6 L8 25.9 H5.6 L2 17.6 H0.2 Z"/><path d="M16.3 14 H30 V17.6 H15.1 Z"/><path d="M13.2 20.7 H29.2 Q28.6 23 27.2 24 H12 Z"/><path d="M9.4 27.2 H24.1 C21 29.8 18 30.5 16.5 30.5 C14 30.5 11.5 29.8 9.4 27.2 Z"/></g><text x="34.6" y="24" font-family="Liberation Sans" font-weight="bold" font-size="21.7" fill="#2a7de1">Verisk</text><text x="99.5" y="13.5" font-family="Liberation Sans" font-size="4.5" fill="#2a7de1">TM</text></svg><div style="position:absolute;left:353.0px;top:23.6px;font-size:20.2px;color:#252423;font-weight:normal;white-space:nowrap;line-height:1;"><b>Sovereign ESG Ratings:</b> Global View</div><div style="position:absolute;left:1209.0px;top:30.3px;font-size:14.05px;color:#252423;font-weight:normal;white-space:nowrap;line-height:1;">Best viewed in full screen - F11</div><svg width="19" height="19" viewBox="0 0 18 18" style="position:absolute;left:1411.7px;top:27.5px"><path d="M0 2.5 L7.5 1.4 V8.4 H0Z M8.6 1.2 L18 0 V8.4 H8.6Z M0 9.5 H7.5 V16.6 L0 15.5Z M8.6 9.5 H18 V18 L8.6 16.8Z" fill="#111"/></svg><div style="position:absolute;left:1437.4px;top:30.4px;font-size:13.95px;color:#252423;font-weight:normal;white-space:nowrap;line-height:1;">or Ctrl+Cmd+F</div><svg width="20" height="23" viewBox="0 0 170 200" preserveAspectRatio="none" style="position:absolute;left:1541.6px;top:23px"><path fill="#111" d="M150 68c-1 1-20 12-20 36 0 28 25 38 26 38 0 1-4 14-13 27-8 12-17 24-30 24s-17-8-32-8c-15 0-20 8-32 8s-21-11-30-24C8 153 0 128 0 105c0-38 25-58 49-58 13 0 24 9 32 9 8 0 20-9 35-9 6 0 26 1 39 20zM104 33c6-7 10-17 10-27 0-1 0-3-1-4-10 0-21 7-28 15-6 6-11 16-11 26 0 2 0 3 1 3 1 0 2 0 3 0 9 0 20-6 26-13z"/></svg><div style="position:absolute;left:1569.0px;top:30.3px;font-size:14.1px;color:#252423;font-weight:normal;white-space:nowrap;line-height:1;">- Repeat to exit full screen</div><div style="position:absolute;left:25px;top:71px;width:242px;height:866px;background:#fff;"></div><div style="position:absolute;left:47.0px;top:76.8px;font-size:13.7px;color:#666;font-weight:normal;white-space:nowrap;line-height:1;">NAVIGATION</div><div style="position:absolute;left:43px;top:98px;width:200px;height:33px;background:#2672cc;"></div><div style="position:absolute;left:49.5px;top:107.3px;font-size:13.4px;color:#fff;font-weight:bold;white-space:nowrap;line-height:1;">Global View</div><div style="position:absolute;left:43px;top:146px;width:200px;height:34px;background:#fff;box-sizing:border-box;border:1.6px solid #8e8e8e"></div><div style="position:absolute;left:49.5px;top:155.3px;font-size:13.4px;color:#2672cc;font-weight:bold;white-space:nowrap;line-height:1;">Country View</div><div style="position:absolute;left:43px;top:196px;width:200px;height:34px;background:#fff;box-sizing:border-box;border:1.6px solid #8e8e8e"></div><div style="position:absolute;left:49.5px;top:205.2px;font-size:13.5px;color:#2672cc;font-weight:bold;white-space:nowrap;line-height:1;">Dimension View</div><div style="position:absolute;left:47.0px;top:253.7px;font-size:13.6px;color:#666;font-weight:normal;white-space:nowrap;line-height:1;">INCOME ADJUSTMENT</div><div style="position:absolute;left:64px;top:275px;width:152px;height:123px;background:#333333;"></div><div style="position:absolute;left:-560.0px;width:1400px;text-align:center;top:328.7px;font-size:14.2px;color:#fff;font-weight:normal;white-space:nowrap;line-height:1;">Absolute Scores</div><svg width="14" height="26" viewBox="0 0 14 26" style="position:absolute;left:226px;top:323px"><path d="M2 2 L12 13 L2 24" fill="none" stroke="#555" stroke-width="1.3"/></svg><div style="position:absolute;left:47.0px;top:430.3px;font-size:12.7px;color:#666;font-weight:normal;white-space:nowrap;line-height:1;">YEAR-QUARTER</div><div style="position:absolute;left:43px;top:456px;width:199px;height:30px;background:#2672cc;box-sizing:border-box;border:1px solid #5d95d9"></div><div style="position:absolute;left:51.0px;top:463.8px;font-size:16px;color:#fff;font-weight:normal;white-space:nowrap;line-height:1;">2021-Q4</div><svg width="18" height="10" viewBox="0 0 18 10" style="position:absolute;left:218px;top:468px"><path d="M1 1 L9 8.5 L17 1" fill="none" stroke="#fff" stroke-width="1.6"/></svg><div style="position:absolute;left:47.0px;top:499.7px;font-size:13.5px;color:#666;font-weight:normal;white-space:nowrap;line-height:1;">PILLAR</div><div style="position:absolute;left:43px;top:526px;width:199px;height:30px;background:#2672cc;box-sizing:border-box;border:1px solid #5d95d9"></div><div style="position:absolute;left:51.0px;top:533.8px;font-size:16px;color:#fff;font-weight:normal;white-space:nowrap;line-height:1;">Governance</div><svg width="18" height="10" viewBox="0 0 18 10" style="position:absolute;left:218px;top:538px"><path d="M1 1 L9 8.5 L17 1" fill="none" stroke="#fff" stroke-width="1.6"/></svg><div style="position:absolute;left:47.0px;top:570.0px;font-size:13.1px;color:#666;font-weight:normal;white-space:nowrap;line-height:1;">RATING</div><div style="position:absolute;left:43px;top:596px;width:199px;height:30px;background:#2672cc;box-sizing:border-box;border:1px solid #5d95d9"></div><div style="position:absolute;left:51.0px;top:603.8px;font-size:16px;color:#fff;font-weight:normal;white-space:nowrap;line-height:1;">All</div><svg width="18" height="10" viewBox="0 0 18 10" style="position:absolute;left:218px;top:608px"><path d="M1 1 L9 8.5 L17 1" fill="none" stroke="#fff" stroke-width="1.6"/></svg><div style="position:absolute;left:47.0px;top:639.6px;font-size:13.7px;color:#666;font-weight:normal;white-space:nowrap;line-height:1;">MOMENTUM</div><div style="position:absolute;left:43px;top:666px;width:199px;height:30px;background:#2672cc;box-sizing:border-box;border:1px solid #5d95d9"></div><div style="position:absolute;left:51.0px;top:673.8px;font-size:16px;color:#fff;font-weight:normal;white-space:nowrap;line-height:1;">All</div><svg width="18" height="10" viewBox="0 0 18 10" style="position:absolute;left:218px;top:678px"><path d="M1 1 L9 8.5 L17 1" fill="none" stroke="#fff" stroke-width="1.6"/></svg><div style="position:absolute;left:47.0px;top:710.1px;font-size:13.0px;color:#666;font-weight:normal;white-space:nowrap;line-height:1;">INCOME GROUP</div><div style="position:absolute;left:43px;top:736px;width:199px;height:30px;background:#2672cc;box-sizing:border-box;border:1px solid #5d95d9"></div><div style="position:absolute;left:51.0px;top:743.8px;font-size:16px;color:#fff;font-weight:normal;white-space:nowrap;line-height:1;">All</div><svg width="18" height="10" viewBox="0 0 18 10" style="position:absolute;left:218px;top:748px"><path d="M1 1 L9 8.5 L17 1" fill="none" stroke="#fff" stroke-width="1.6"/></svg><div style="position:absolute;left:47.0px;top:780.4px;font-size:12.6px;color:#666;font-weight:normal;white-space:nowrap;line-height:1;">REGION</div><div style="position:absolute;left:43px;top:806px;width:199px;height:30px;background:#2672cc;box-sizing:border-box;border:1px solid #5d95d9"></div><div style="position:absolute;left:51.0px;top:813.8px;font-size:16px;color:#fff;font-weight:normal;white-space:nowrap;line-height:1;">All</div><svg width="18" height="10" viewBox="0 0 18 10" style="position:absolute;left:218px;top:818px"><path d="M1 1 L9 8.5 L17 1" fill="none" stroke="#fff" stroke-width="1.6"/></svg><div style="position:absolute;left:282px;top:71px;width:716px;height:865px;background:#fff;"></div><div style="position:absolute;left:289.0px;top:72.6px;font-size:15.2px;color:#252423;font-weight:normal;white-space:nowrap;line-height:1;">GOVERNANCE COUNTRY SCORES | ABSOLUTE SCORES</div><div style="position:absolute;left:-327.0px;width:1400px;text-align:center;top:100.0px;font-size:15.75px;color:#1c3c5a;font-weight:normal;white-space:nowrap;line-height:1;">Country</div><div style="position:absolute;left:-174.0px;width:1400px;text-align:center;top:100.0px;font-size:15.75px;color:#1c3c5a;font-weight:normal;white-space:nowrap;line-height:1;">Symbol</div><div style="position:absolute;left:-71.0px;width:1400px;text-align:center;top:100.0px;font-size:15.75px;color:#1c3c5a;font-weight:normal;white-space:nowrap;line-height:1;">Rating</div><div style="position:absolute;left:-7.0px;width:1400px;text-align:center;top:100.0px;font-size:15.75px;color:#1c3c5a;font-weight:normal;white-space:nowrap;line-height:1;">Symbol</div><div style="position:absolute;left:93.0px;width:1400px;text-align:center;top:100.0px;font-size:15.75px;color:#1c3c5a;font-weight:normal;white-space:nowrap;line-height:1;">Percentile Score</div><div style="position:absolute;left:208.0px;width:1400px;text-align:center;top:100.0px;font-size:15.75px;color:#1c3c5a;font-weight:normal;white-space:nowrap;line-height:1;">Y/Y Change</div><svg width="12" height="7" style="position:absolute;left:734px;top:119px"><path d="M0 0 H11 L5.5 6Z" fill="#1c3c5a"/></svg><div style="position:absolute;left:290px;top:128px;width:668px;height:802px;overflow:hidden"><div style="position:absolute;left:0px;top:0.00px;width:668px;height:129.25px;background:#ffffff;box-sizing:border-box;border-top:1px solid #e6e6e6"></div><div style="position:absolute;left:438px;top:1.00px;width:130.5px;height:129.25px;background:#cfe0ee;"></div><div style="position:absolute;left:8.0px;top:3.4px;font-size:15.8px;color:#252423;font-weight:normal;white-space:nowrap;line-height:1;">Finland</div><div style="position:absolute;left:176.7px;top:9.0px"><svg width="18" height="17" viewBox="0 0 18 17" style="position:absolute"><path d="M9 1.6 Q10 1.6 16.6 14 Q17.2 15.4 15.8 15.4 L2.2 15.4 Q0.8 15.4 1.4 14 Q8 1.6 9 1.6Z" fill="none" stroke="#b6d1e8" stroke-width="1.9"/><path d="M9 6.2 Q9.7 6.2 12.9 11.6 Q13.5 13 12.1 13.1 L5.9 13.1 Q4.5 13 5.1 11.6 Q8.3 6.2 9 6.2 Z" fill="#2b7bbb"/></svg></div><div style="position:absolute;left:198.1px;top:9.0px"><svg width="18" height="17" viewBox="0 0 18 17" style="position:absolute"><path d="M9 1.6 Q10 1.6 16.6 14 Q17.2 15.4 15.8 15.4 L2.2 15.4 Q0.8 15.4 1.4 14 Q8 1.6 9 1.6Z" fill="none" stroke="#b6d1e8" stroke-width="1.9"/><path d="M9 6.2 Q9.7 6.2 12.9 11.6 Q13.5 13 12.1 13.1 L5.9 13.1 Q4.5 13 5.1 11.6 Q8.3 6.2 9 6.2 Z" fill="#2b7bbb"/></svg></div><div style="position:absolute;left:219.5px;top:9.0px"><svg width="18" height="17" viewBox="0 0 18 17" style="position:absolute"><path d="M9 1.6 Q10 1.6 16.6 14 Q17.2 15.4 15.8 15.4 L2.2 15.4 Q0.8 15.4 1.4 14 Q8 1.6 9 1.6Z" fill="none" stroke="#b6d1e8" stroke-width="1.9"/><path d="M9 6.2 Q9.7 6.2 12.9 11.6 Q13.5 13 12.1 13.1 L5.9 13.1 Q4.5 13 5.1 11.6 Q8.3 6.2 9 6.2 Z" fill="#2b7bbb"/></svg></div><div style="position:absolute;left:240.9px;top:9.0px"><svg width="18" height="17" viewBox="0 0 18 17" style="position:absolute"><path d="M9 1.6 Q10 1.6 16.6 14 Q17.2 15.4 15.8 15.4 L2.2 15.4 Q0.8 15.4 1.4 14 Q8 1.6 9 1.6Z" fill="none" stroke="#b6d1e8" stroke-width="1.9"/><path d="M9 6.2 Q9.7 6.2 12.9 11.6 Q13.5 13 12.1 13.1 L5.9 13.1 Q4.5 13 5.1 11.6 Q8.3 6.2 9 6.2 Z" fill="#2b7bbb"/></svg></div><div style="position:absolute;left:262.3px;top:9.0px"><svg width="18" height="17" viewBox="0 0 18 17" style="position:absolute"><path d="M9 1.6 Q10 1.6 16.6 14 Q17.2 15.4 15.8 15.4 L2.2 15.4 Q0.8 15.4 1.4 14 Q8 1.6 9 1.6Z" fill="none" stroke="#b6d1e8" stroke-width="1.9"/><path d="M9 6.2 Q9.7 6.2 12.9 11.6 Q13.5 13 12.1 13.1 L5.9 13.1 Q4.5 13 5.1 11.6 Q8.3 6.2 9 6.2 Z" fill="#2b7bbb"/></svg></div><svg width="16" height="16" style="position:absolute;left:285.5px;top:10.0px"><path d="M8 1.5 V14.5 M1.5 8 H14.5" stroke="#2b7bbb" stroke-width="1.6"/></svg><div style="position:absolute;left:-1038.0px;width:1400px;text-align:right;top:2.7px;font-size:15.5px;color:#2878bc;font-weight:normal;white-space:nowrap;line-height:1;">G5+</div><div style="position:absolute;left:374px;top:0.0px"><svg width="20" height="18" viewBox="0 0 20 18" style="position:absolute;transform:rotate(0deg)"><g fill="none" stroke-linecap="square"><path d="M2 9 H15.5 M10.5 3.2 L16.3 9 L10.5 14.8" stroke="#555" stroke-width="4.2"/><path d="M2.6 9 H15 M10.5 3.6 L15.9 9 L10.5 14.4" stroke="#8c8c8c" stroke-width="2.2"/></g></svg></div><div style="position:absolute;left:-197.0px;width:1400px;text-align:center;top:3.3px;font-size:15.8px;color:#252423;font-weight:normal;white-space:nowrap;line-height:1;">100</div><div style="position:absolute;left:-82.0px;width:1400px;text-align:center;top:3.3px;font-size:15.8px;color:#252423;font-weight:normal;white-space:nowrap;line-height:1;">0</div><div style="position:absolute;left:0px;top:129.25px;width:668px;height:129.25px;background:#fafafa;box-sizing:border-box;border-top:1px solid #e6e6e6"></div><div style="position:absolute;left:438px;top:130.25px;width:130.5px;height:129.25px;background:#cfe0ee;"></div><div style="position:absolute;left:8.0px;top:132.6px;font-size:15.8px;color:#252423;font-weight:normal;white-space:nowrap;line-height:1;">Ireland</div><div style="position:absolute;left:176.7px;top:138.2px"><svg width="18" height="17" viewBox="0 0 18 17" style="position:absolute"><path d="M9 1.6 Q10 1.6 16.6 14 Q17.2 15.4 15.8 15.4 L2.2 15.4 Q0.8 15.4 1.4 14 Q8 1.6 9 1.6Z" fill="none" stroke="#b6d1e8" stroke-width="1.9"/><path d="M9 6.2 Q9.7 6.2 12.9 11.6 Q13.5 13 12.1 13.1 L5.9 13.1 Q4.5 13 5.1 11.6 Q8.3 6.2 9 6.2 Z" fill="#2b7bbb"/></svg></div><div style="position:absolute;left:198.1px;top:138.2px"><svg width="18" height="17" viewBox="0 0 18 17" style="position:absolute"><path d="M9 1.6 Q10 1.6 16.6 14 Q17.2 15.4 15.8 15.4 L2.2 15.4 Q0.8 15.4 1.4 14 Q8 1.6 9 1.6Z" fill="none" stroke="#b6d1e8" stroke-width="1.9"/><path d="M9 6.2 Q9.7 6.2 12.9 11.6 Q13.5 13 12.1 13.1 L5.9 13.1 Q4.5 13 5.1 11.6 Q8.3 6.2 9 6.2 Z" fill="#2b7bbb"/></svg></div><div style="position:absolute;left:219.5px;top:138.2px"><svg width="18" height="17" viewBox="0 0 18 17" style="position:absolute"><path d="M9 1.6 Q10 1.6 16.6 14 Q17.2 15.4 15.8 15.4 L2.2 15.4 Q0.8 15.4 1.4 14 Q8 1.6 9 1.6Z" fill="none" stroke="#b6d1e8" stroke-width="1.9"/><path d="M9 6.2 Q9.7 6.2 12.9 11.6 Q13.5 13 12.1 13.1 L5.9 13.1 Q4.5 13 5.1 11.6 Q8.3 6.2 9 6.2 Z" fill="#2b7bbb"/></svg></div><div style="position:absolute;left:240.9px;top:138.2px"><svg width="18" height="17" viewBox="0 0 18 17" style="position:absolute"><path d="M9 1.6 Q10 1.6 16.6 14 Q17.2 15.4 15.8 15.4 L2.2 15.4 Q0.8 15.4 1.4 14 Q8 1.6 9 1.6Z" fill="none" stroke="#b6d1e8" stroke-width="1.9"/><path d="M9 6.2 Q9.7 6.2 12.9 11.6 Q13.5 13 12.1 13.1 L5.9 13.1 Q4.5 13 5.1 11.6 Q8.3 6.2 9 6.2 Z" fill="#2b7bbb"/></svg></div><div style="position:absolute;left:262.3px;top:138.2px"><svg width="18" height="17" viewBox="0 0 18 17" style="position:absolute"><path d="M9 1.6 Q10 1.6 16.6 14 Q17.2 15.4 15.8 15.4 L2.2 15.4 Q0.8 15.4 1.4 14 Q8 1.6 9 1.6Z" fill="none" stroke="#b6d1e8" stroke-width="1.9"/><path d="M9 6.2 Q9.7 6.2 12.9 11.6 Q13.5 13 12.1 13.1 L5.9 13.1 Q4.5 13 5.1 11.6 Q8.3 6.2 9 6.2 Z" fill="#2b7bbb"/></svg></div><svg width="16" height="16" style="position:absolute;left:285.5px;top:139.2px"><path d="M8 1.5 V14.5 M1.5 8 H14.5" stroke="#2b7bbb" stroke-width="1.6"/></svg><div style="position:absolute;left:-1038.0px;width:1400px;text-align:right;top:132.0px;font-size:15.5px;color:#2878bc;font-weight:normal;white-space:nowrap;line-height:1;">G5+</div><div style="position:absolute;left:374px;top:129.2px"><svg width="20" height="18" viewBox="0 0 20 18" style="position:absolute;transform:rotate(0deg)"><g fill="none" stroke-linecap="square"><path d="M2 9 H15.5 M10.5 3.2 L16.3 9 L10.5 14.8" stroke="#555" stroke-width="4.2"/><path d="M2.6 9 H15 M10.5 3.6 L15.9 9 L10.5 14.4" stroke="#8c8c8c" stroke-width="2.2"/></g></svg></div><div style="position:absolute;left:-197.0px;width:1400px;text-align:center;top:132.5px;font-size:15.8px;color:#252423;font-weight:normal;white-space:nowrap;line-height:1;">100</div><div style="position:absolute;left:-82.0px;width:1400px;text-align:center;top:132.5px;font-size:15.8px;color:#252423;font-weight:normal;white-space:nowrap;line-height:1;">0</div><div style="position:absolute;left:0px;top:258.50px;width:668px;height:129.25px;background:#ffffff;box-sizing:border-box;border-top:1px solid #e6e6e6"></div><div style="position:absolute;left:438px;top:259.50px;width:130.5px;height:129.25px;background:#cfe0ee;"></div><div style="position:absolute;left:8.0px;top:261.9px;font-size:15.8px;color:#252423;font-weight:normal;white-space:nowrap;line-height:1;">Denmark</div><div style="position:absolute;left:176.7px;top:267.5px"><svg width="18" height="17" viewBox="0 0 18 17" style="position:absolute"><path d="M9 1.6 Q10 1.6 16.6 14 Q17.2 15.4 15.8 15.4 L2.2 15.4 Q0.8 15.4 1.4 14 Q8 1.6 9 1.6Z" fill="none" stroke="#b6d1e8" stroke-width="1.9"/><path d="M9 6.2 Q9.7 6.2 12.9 11.6 Q13.5 13 12.1 13.1 L5.9 13.1 Q4.5 13 5.1 11.6 Q8.3 6.2 9 6.2 Z" fill="#2b7bbb"/></svg></div><div style="position:absolute;left:198.1px;top:267.5px"><svg width="18" height="17" viewBox="0 0 18 17" style="position:absolute"><path d="M9 1.6 Q10 1.6 16.6 14 Q17.2 15.4 15.8 15.4 L2.2 15.4 Q0.8 15.4 1.4 14 Q8 1.6 9 1.6Z" fill="none" stroke="#b6d1e8" stroke-width="1.9"/><path d="M9 6.2 Q9.7 6.2 12.9 11.6 Q13.5 13 12.1 13.1 L5.9 13.1 Q4.5 13 5.1 11.6 Q8.3 6.2 9 6.2 Z" fill="#2b7bbb"/></svg></div><div style="position:absolute;left:219.5px;top:267.5px"><svg width="18" height="17" viewBox="0 0 18 17" style="position:absolute"><path d="M9 1.6 Q10 1.6 16.6 14 Q17.2 15.4 15.8 15.4 L2.2 15.4 Q0.8 15.4 1.4 14 Q8 1.6 9 1.6Z" fill="none" stroke="#b6d1e8" stroke-width="1.9"/><path d="M9 6.2 Q9.7 6.2 12.9 11.6 Q13.5 13 12.1 13.1 L5.9 13.1 Q4.5 13 5.1 11.6 Q8.3 6.2 9 6.2 Z" fill="#2b7bbb"/></svg></div><div style="position:absolute;left:240.9px;top:267.5px"><svg width="18" height="17" viewBox="0 0 18 17" style="position:absolute"><path d="M9 1.6 Q10 1.6 16.6 14 Q17.2 15.4 15.8 15.4 L2.2 15.4 Q0.8 15.4 1.4 14 Q8 1.6 9 1.6Z" fill="none" stroke="#b6d1e8" stroke-width="1.9"/><path d="M9 6.2 Q9.7 6.2 12.9 11.6 Q13.5 13 12.1 13.1 L5.9 13.1 Q4.5 13 5.1 11.6 Q8.3 6.2 9 6.2 Z" fill="#2b7bbb"/></svg></div><div style="position:absolute;left:262.3px;top:267.5px"><svg width="18" height="17" viewBox="0 0 18 17" style="position:absolute"><path d="M9 1.6 Q10 1.6 16.6 14 Q17.2 15.4 15.8 15.4 L2.2 15.4 Q0.8 15.4 1.4 14 Q8 1.6 9 1.6Z" fill="none" stroke="#b6d1e8" stroke-width="1.9"/><path d="M9 6.2 Q9.7 6.2 12.9 11.6 Q13.5 13 12.1 13.1 L5.9 13.1 Q4.5 13 5.1 11.6 Q8.3 6.2 9 6.2 Z" fill="#2b7bbb"/></svg></div><svg width="16" height="16" style="position:absolute;left:285.5px;top:268.5px"><path d="M8 1.5 V14.5 M1.5 8 H14.5" stroke="#2b7bbb" stroke-width="1.6"/></svg><div style="position:absolute;left:-1038.0px;width:1400px;text-align:right;top:261.2px;font-size:15.5px;color:#2878bc;font-weight:normal;white-space:nowrap;line-height:1;">G5+</div><div style="position:absolute;left:374px;top:258.5px"><svg width="20" height="18" viewBox="0 0 20 18" style="position:absolute;transform:rotate(0deg)"><g fill="none" stroke-linecap="square"><path d="M2 9 H15.5 M10.5 3.2 L16.3 9 L10.5 14.8" stroke="#555" stroke-width="4.2"/><path d="M2.6 9 H15 M10.5 3.6 L15.9 9 L10.5 14.4" stroke="#8c8c8c" stroke-width="2.2"/></g></svg></div><div style="position:absolute;left:-197.0px;width:1400px;text-align:center;top:261.8px;font-size:15.8px;color:#252423;font-weight:normal;white-space:nowrap;line-height:1;">100</div><div style="position:absolute;left:-82.0px;width:1400px;text-align:center;top:261.8px;font-size:15.8px;color:#252423;font-weight:normal;white-space:nowrap;line-height:1;">0</div><div style="position:absolute;left:0px;top:387.75px;width:668px;height:129.25px;background:#fafafa;box-sizing:border-box;border-top:1px solid #e6e6e6"></div><div style="position:absolute;left:438px;top:388.75px;width:130.5px;height:129.25px;background:#cfe0ee;"></div><div style="position:absolute;left:8.0px;top:391.1px;font-size:15.8px;color:#252423;font-weight:normal;white-space:nowrap;line-height:1;">Norway</div><div style="position:absolute;left:176.7px;top:396.8px"><svg width="18" height="17" viewBox="0 0 18 17" style="position:absolute"><path d="M9 1.6 Q10 1.6 16.6 14 Q17.2 15.4 15.8 15.4 L2.2 15.4 Q0.8 15.4 1.4 14 Q8 1.6 9 1.6Z" fill="none" stroke="#b6d1e8" stroke-width="1.9"/><path d="M9 6.2 Q9.7 6.2 12.9 11.6 Q13.5 13 12.1 13.1 L5.9 13.1 Q4.5 13 5.1 11.6 Q8.3 6.2 9 6.2 Z" fill="#2b7bbb"/></svg></div><div style="position:absolute;left:198.1px;top:396.8px"><svg width="18" height="17" viewBox="0 0 18 17" style="position:absolute"><path d="M9 1.6 Q10 1.6 16.6 14 Q17.2 15.4 15.8 15.4 L2.2 15.4 Q0.8 15.4 1.4 14 Q8 1.6 9 1.6Z" fill="none" stroke="#b6d1e8" stroke-width="1.9"/><path d="M9 6.2 Q9.7 6.2 12.9 11.6 Q13.5 13 12.1 13.1 L5.9 13.1 Q4.5 13 5.1 11.6 Q8.3 6.2 9 6.2 Z" fill="#2b7bbb"/></svg></div><div style="position:absolute;left:219.5px;top:396.8px"><svg width="18" height="17" viewBox="0 0 18 17" style="position:absolute"><path d="M9 1.6 Q10 1.6 16.6 14 Q17.2 15.4 15.8 15.4 L2.2 15.4 Q0.8 15.4 1.4 14 Q8 1.6 9 1.6Z" fill="none" stroke="#b6d1e8" stroke-width="1.9"/><path d="M9 6.2 Q9.7 6.2 12.9 11.6 Q13.5 13 12.1 13.1 L5.9 13.1 Q4.5 13 5.1 11.6 Q8.3 6.2 9 6.2 Z" fill="#2b7bbb"/></svg></div><div style="position:absolute;left:240.9px;top:396.8px"><svg width="18" height="17" viewBox="0 0 18 17" style="position:absolute"><path d="M9 1.6 Q10 1.6 16.6 14 Q17.2 15.4 15.8 15.4 L2.2 15.4 Q0.8 15.4 1.4 14 Q8 1.6 9 1.6Z" fill="none" stroke="#b6d1e8" stroke-width="1.9"/><path d="M9 6.2 Q9.7 6.2 12.9 11.6 Q13.5 13 12.1 13.1 L5.9 13.1 Q4.5 13 5.1 11.6 Q8.3 6.2 9 6.2 Z" fill="#2b7bbb"/></svg></div><div style="position:absolute;left:262.3px;top:396.8px"><svg width="18" height="17" viewBox="0 0 18 17" style="position:absolute"><path d="M9 1.6 Q10 1.6 16.6 14 Q17.2 15.4 15.8 15.4 L2.2 15.4 Q0.8 15.4 1.4 14 Q8 1.6 9 1.6Z" fill="none" stroke="#b6d1e8" stroke-width="1.9"/><path d="M9 6.2 Q9.7 6.2 12.9 11.6 Q13.5 13 12.1 13.1 L5.9 13.1 Q4.5 13 5.1 11.6 Q8.3 6.2 9 6.2 Z" fill="#2b7bbb"/></svg></div><svg width="16" height="16" style="position:absolute;left:285.5px;top:397.8px"><path d="M8 1.5 V14.5 M1.5 8 H14.5" stroke="#2b7bbb" stroke-width="1.6"/></svg><div style="position:absolute;left:-1038.0px;width:1400px;text-align:right;top:390.5px;font-size:15.5px;color:#2878bc;font-weight:normal;white-space:nowrap;line-height:1;">G5+</div><div style="position:absolute;left:374px;top:387.8px"><svg width="20" height="18" viewBox="0 0 20 18" style="position:absolute;transform:rotate(0deg)"><g fill="none" stroke-linecap="square"><path d="M2 9 H15.5 M10.5 3.2 L16.3 9 L10.5 14.8" stroke="#555" stroke-width="4.2"/><path d="M2.6 9 H15 M10.5 3.6 L15.9 9 L10.5 14.4" stroke="#8c8c8c" stroke-width="2.2"/></g></svg></div><div style="position:absolute;left:-197.0px;width:1400px;text-align:center;top:391.0px;font-size:15.8px;color:#252423;font-weight:normal;white-space:nowrap;line-height:1;">100</div><div style="position:absolute;left:-82.0px;width:1400px;text-align:center;top:391.0px;font-size:15.8px;color:#252423;font-weight:normal;white-space:nowrap;line-height:1;">0</div><div style="position:absolute;left:0px;top:517.00px;width:668px;height:129.25px;background:#ffffff;box-sizing:border-box;border-top:1px solid #e6e6e6"></div><div style="position:absolute;left:438px;top:518.00px;width:130.5px;height:129.25px;background:#cfe0ee;"></div><div style="position:absolute;left:8.0px;top:520.4px;font-size:15.8px;color:#252423;font-weight:normal;white-space:nowrap;line-height:1;">United Kingdom</div><div style="position:absolute;left:176.7px;top:526.0px"><svg width="18" height="17" viewBox="0 0 18 17" style="position:absolute"><path d="M9 1.6 Q10 1.6 16.6 14 Q17.2 15.4 15.8 15.4 L2.2 15.4 Q0.8 15.4 1.4 14 Q8 1.6 9 1.6Z" fill="none" stroke="#b6d1e8" stroke-width="1.9"/><path d="M9 6.2 Q9.7 6.2 12.9 11.6 Q13.5 13 12.1 13.1 L5.9 13.1 Q4.5 13 5.1 11.6 Q8.3 6.2 9 6.2 Z" fill="#2b7bbb"/></svg></div><div style="position:absolute;left:198.1px;top:526.0px"><svg width="18" height="17" viewBox="0 0 18 17" style="position:absolute"><path d="M9 1.6 Q10 1.6 16.6 14 Q17.2 15.4 15.8 15.4 L2.2 15.4 Q0.8 15.4 1.4 14 Q8 1.6 9 1.6Z" fill="none" stroke="#b6d1e8" stroke-width="1.9"/><path d="M9 6.2 Q9.7 6.2 12.9 11.6 Q13.5 13 12.1 13.1 L5.9 13.1 Q4.5 13 5.1 11.6 Q8.3 6.2 9 6.2 Z" fill="#2b7bbb"/></svg></div><div style="position:absolute;left:219.5px;top:526.0px"><svg width="18" height="17" viewBox="0 0 18 17" style="position:absolute"><path d="M9 1.6 Q10 1.6 16.6 14 Q17.2 15.4 15.8 15.4 L2.2 15.4 Q0.8 15.4 1.4 14 Q8 1.6 9 1.6Z" fill="none" stroke="#b6d1e8" stroke-width="1.9"/><path d="M9 6.2 Q9.7 6.2 12.9 11.6 Q13.5 13 12.1 13.1 L5.9 13.1 Q4.5 13 5.1 11.6 Q8.3 6.2 9 6.2 Z" fill="#2b7bbb"/></svg></div><div style="position:absolute;left:240.9px;top:526.0px"><svg width="18" height="17" viewBox="0 0 18 17" style="position:absolute"><path d="M9 1.6 Q10 1.6 16.6 14 Q17.2 15.4 15.8 15.4 L2.2 15.4 Q0.8 15.4 1.4 14 Q8 1.6 9 1.6Z" fill="none" stroke="#b6d1e8" stroke-width="1.9"/><path d="M9 6.2 Q9.7 6.2 12.9 11.6 Q13.5 13 12.1 13.1 L5.9 13.1 Q4.5 13 5.1 11.6 Q8.3 6.2 9 6.2 Z" fill="#2b7bbb"/></svg></div><div style="position:absolute;left:262.3px;top:526.0px"><svg width="18" height="17" viewBox="0 0 18 17" style="position:absolute"><path d="M9 1.6 Q10 1.6 16.6 14 Q17.2 15.4 15.8 15.4 L2.2 15.4 Q0.8 15.4 1.4 14 Q8 1.6 9 1.6Z" fill="none" stroke="#b6d1e8" stroke-width="1.9"/><path d="M9 6.2 Q9.7 6.2 12.9 11.6 Q13.5 13 12.1 13.1 L5.9 13.1 Q4.5 13 5.1 11.6 Q8.3 6.2 9 6.2 Z" fill="#2b7bbb"/></svg></div><svg width="16" height="16" style="position:absolute;left:285.5px;top:527.0px"><path d="M8 1.5 V14.5 M1.5 8 H14.5" stroke="#2b7bbb" stroke-width="1.6"/></svg><div style="position:absolute;left:-1038.0px;width:1400px;text-align:right;top:519.7px;font-size:15.5px;color:#2878bc;font-weight:normal;white-space:nowrap;line-height:1;">G5+</div><div style="position:absolute;left:374px;top:517.0px"><svg width="20" height="18" viewBox="0 0 20 18" style="position:absolute;transform:rotate(0deg)"><g fill="none" stroke-linecap="square"><path d="M2 9 H15.5 M10.5 3.2 L16.3 9 L10.5 14.8" stroke="#555" stroke-width="4.2"/><path d="M2.6 9 H15 M10.5 3.6 L15.9 9 L10.5 14.4" stroke="#8c8c8c" stroke-width="2.2"/></g></svg></div><div style="position:absolute;left:-197.0px;width:1400px;text-align:center;top:520.3px;font-size:15.8px;color:#252423;font-weight:normal;white-space:nowrap;line-height:1;">100</div><div style="position:absolute;left:-82.0px;width:1400px;text-align:center;top:520.3px;font-size:15.8px;color:#252423;font-weight:normal;white-space:nowrap;line-height:1;">0</div><div style="position:absolute;left:0px;top:646.25px;width:668px;height:129.25px;background:#fafafa;box-sizing:border-box;border-top:1px solid #e6e6e6"></div><div style="position:absolute;left:438px;top:647.25px;width:130.5px;height:129.25px;background:#cfe0ee;"></div><div style="position:absolute;left:8.0px;top:649.6px;font-size:15.8px;color:#252423;font-weight:normal;white-space:nowrap;line-height:1;">Luxembourg</div><div style="position:absolute;left:176.7px;top:655.2px"><svg width="18" height="17" viewBox="0 0 18 17" style="position:absolute"><path d="M9 1.6 Q10 1.6 16.6 14 Q17.2 15.4 15.8 15.4 L2.2 15.4 Q0.8 15.4 1.4 14 Q8 1.6 9 1.6Z" fill="none" stroke="#b6d1e8" stroke-width="1.9"/><path d="M9 6.2 Q9.7 6.2 12.9 11.6 Q13.5 13 12.1 13.1 L5.9 13.1 Q4.5 13 5.1 11.6 Q8.3 6.2 9 6.2 Z" fill="#2b7bbb"/></svg></div><div style="position:absolute;left:198.1px;top:655.2px"><svg width="18" height="17" viewBox="0 0 18 17" style="position:absolute"><path d="M9 1.6 Q10 1.6 16.6 14 Q17.2 15.4 15.8 15.4 L2.2 15.4 Q0.8 15.4 1.4 14 Q8 1.6 9 1.6Z" fill="none" stroke="#b6d1e8" stroke-width="1.9"/><path d="M9 6.2 Q9.7 6.2 12.9 11.6 Q13.5 13 12.1 13.1 L5.9 13.1 Q4.5 13 5.1 11.6 Q8.3 6.2 9 6.2 Z" fill="#2b7bbb"/></svg></div><div style="position:absolute;left:219.5px;top:655.2px"><svg width="18" height="17" viewBox="0 0 18 17" style="position:absolute"><path d="M9 1.6 Q10 1.6 16.6 14 Q17.2 15.4 15.8 15.4 L2.2 15.4 Q0.8 15.4 1.4 14 Q8 1.6 9 1.6Z" fill="none" stroke="#b6d1e8" stroke-width="1.9"/><path d="M9 6.2 Q9.7 6.2 12.9 11.6 Q13.5 13 12.1 13.1 L5.9 13.1 Q4.5 13 5.1 11.6 Q8.3 6.2 9 6.2 Z" fill="#2b7bbb"/></svg></div><div style="position:absolute;left:240.9px;top:655.2px"><svg width="18" height="17" viewBox="0 0 18 17" style="position:absolute"><path d="M9 1.6 Q10 1.6 16.6 14 Q17.2 15.4 15.8 15.4 L2.2 15.4 Q0.8 15.4 1.4 14 Q8 1.6 9 1.6Z" fill="none" stroke="#b6d1e8" stroke-width="1.9"/><path d="M9 6.2 Q9.7 6.2 12.9 11.6 Q13.5 13 12.1 13.1 L5.9 13.1 Q4.5 13 5.1 11.6 Q8.3 6.2 9 6.2 Z" fill="#2b7bbb"/></svg></div><div style="position:absolute;left:262.3px;top:655.2px"><svg width="18" height="17" viewBox="0 0 18 17" style="position:absolute"><path d="M9 1.6 Q10 1.6 16.6 14 Q17.2 15.4 15.8 15.4 L2.2 15.4 Q0.8 15.4 1.4 14 Q8 1.6 9 1.6Z" fill="none" stroke="#b6d1e8" stroke-width="1.9"/><path d="M9 6.2 Q9.7 6.2 12.9 11.6 Q13.5 13 12.1 13.1 L5.9 13.1 Q4.5 13 5.1 11.6 Q8.3 6.2 9 6.2 Z" fill="#2b7bbb"/></svg></div><svg width="16" height="16" style="position:absolute;left:285.5px;top:656.2px"><path d="M8 1.5 V14.5 M1.5 8 H14.5" stroke="#2b7bbb" stroke-width="1.6"/></svg><div style="position:absolute;left:-1038.0px;width:1400px;text-align:right;top:649.0px;font-size:15.5px;color:#2878bc;font-weight:normal;white-space:nowrap;line-height:1;">G5+</div><div style="position:absolute;left:374px;top:646.2px"><svg width="20" height="18" viewBox="0 0 20 18" style="position:absolute;transform:rotate(0deg)"><g fill="none" stroke-linecap="square"><path d="M2 9 H15.5 M10.5 3.2 L16.3 9 L10.5 14.8" stroke="#555" stroke-width="4.2"/><path d="M2.6 9 H15 M10.5 3.6 L15.9 9 L10.5 14.4" stroke="#8c8c8c" stroke-width="2.2"/></g></svg></div><div style="position:absolute;left:-197.0px;width:1400px;text-align:center;top:649.5px;font-size:15.8px;color:#252423;font-weight:normal;white-space:nowrap;line-height:1;">100</div><div style="position:absolute;left:-82.0px;width:1400px;text-align:center;top:649.5px;font-size:15.8px;color:#252423;font-weight:normal;white-space:nowrap;line-height:1;">0</div><div style="position:absolute;left:0px;top:775.50px;width:668px;height:129.25px;background:#ffffff;box-sizing:border-box;border-top:1px solid #e6e6e6"></div><div style="position:absolute;left:438px;top:776.50px;width:130.5px;height:129.25px;background:#cfe0ee;"></div><div style="position:absolute;left:8.0px;top:778.9px;font-size:15.8px;color:#252423;font-weight:normal;white-space:nowrap;line-height:1;">Sweden</div><div style="position:absolute;left:176.7px;top:784.5px"><svg width="18" height="17" viewBox="0 0 18 17" style="position:absolute"><path d="M9 1.6 Q10 1.6 16.6 14 Q17.2 15.4 15.8 15.4 L2.2 15.4 Q0.8 15.4 1.4 14 Q8 1.6 9 1.6Z" fill="none" stroke="#b6d1e8" stroke-width="1.9"/><path d="M9 6.2 Q9.7 6.2 12.9 11.6 Q13.5 13 12.1 13.1 L5.9 13.1 Q4.5 13 5.1 11.6 Q8.3 6.2 9 6.2 Z" fill="#2b7bbb"/></svg></div><div style="position:absolute;left:198.1px;top:784.5px"><svg width="18" height="17" viewBox="0 0 18 17" style="position:absolute"><path d="M9 1.6 Q10 1.6 16.6 14 Q17.2 15.4 15.8 15.4 L2.2 15.4 Q0.8 15.4 1.4 14 Q8 1.6 9 1.6Z" fill="none" stroke="#b6d1e8" stroke-width="1.9"/><path d="M9 6.2 Q9.7 6.2 12.9 11.6 Q13.5 13 12.1 13.1 L5.9 13.1 Q4.5 13 5.1 11.6 Q8.3 6.2 9 6.2 Z" fill="#2b7bbb"/></svg></div><div style="position:absolute;left:219.5px;top:784.5px"><svg width="18" height="17" viewBox="0 0 18 17" style="position:absolute"><path d="M9 1.6 Q10 1.6 16.6 14 Q17.2 15.4 15.8 15.4 L2.2 15.4 Q0.8 15.4 1.4 14 Q8 1.6 9 1.6Z" fill="none" stroke="#b6d1e8" stroke-width="1.9"/><path d="M9 6.2 Q9.7 6.2 12.9 11.6 Q13.5 13 12.1 13.1 L5.9 13.1 Q4.5 13 5.1 11.6 Q8.3 6.2 9 6.2 Z" fill="#2b7bbb"/></svg></div><div style="position:absolute;left:240.9px;top:784.5px"><svg width="18" height="17" viewBox="0 0 18 17" style="position:absolute"><path d="M9 1.6 Q10 1.6 16.6 14 Q17.2 15.4 15.8 15.4 L2.2 15.4 Q0.8 15.4 1.4 14 Q8 1.6 9 1.6Z" fill="none" stroke="#b6d1e8" stroke-width="1.9"/><path d="M9 6.2 Q9.7 6.2 12.9 11.6 Q13.5 13 12.1 13.1 L5.9 13.1 Q4.5 13 5.1 11.6 Q8.3 6.2 9 6.2 Z" fill="#2b7bbb"/></svg></div><div style="position:absolute;left:262.3px;top:784.5px"><svg width="18" height="17" viewBox="0 0 18 17" style="position:absolute"><path d="M9 1.6 Q10 1.6 16.6 14 Q17.2 15.4 15.8 15.4 L2.2 15.4 Q0.8 15.4 1.4 14 Q8 1.6 9 1.6Z" fill="none" stroke="#b6d1e8" stroke-width="1.9"/><path d="M9 6.2 Q9.7 6.2 12.9 11.6 Q13.5 13 12.1 13.1 L5.9 13.1 Q4.5 13 5.1 11.6 Q8.3 6.2 9 6.2 Z" fill="#2b7bbb"/></svg></div><svg width="16" height="16" style="position:absolute;left:285.5px;top:785.5px"><path d="M8 1.5 V14.5 M1.5 8 H14.5" stroke="#2b7bbb" stroke-width="1.6"/></svg><div style="position:absolute;left:-1038.0px;width:1400px;text-align:right;top:778.2px;font-size:15.5px;color:#2878bc;font-weight:normal;white-space:nowrap;line-height:1;">G5+</div><div style="position:absolute;left:374px;top:775.5px"><svg width="20" height="18" viewBox="0 0 20 18" style="position:absolute;transform:rotate(0deg)"><g fill="none" stroke-linecap="square"><path d="M2 9 H15.5 M10.5 3.2 L16.3 9 L10.5 14.8" stroke="#555" stroke-width="4.2"/><path d="M2.6 9 H15 M10.5 3.6 L15.9 9 L10.5 14.4" stroke="#8c8c8c" stroke-width="2.2"/></g></svg></div><div style="position:absolute;left:-197.0px;width:1400px;text-align:center;top:778.8px;font-size:15.8px;color:#252423;font-weight:normal;white-space:nowrap;line-height:1;">100</div><div style="position:absolute;left:-82.0px;width:1400px;text-align:center;top:778.8px;font-size:15.8px;color:#252423;font-weight:normal;white-space:nowrap;line-height:1;">0</div></div><div style="position:absolute;left:980px;top:98px;width:12px;height:820px;background:#f1f1f1;"></div><div style="position:absolute;left:980px;top:134.5px;width:12px;height:57px;background:#c6c6c6;"></div><svg width="12" height="8" style="position:absolute;left:980px;top:111px"><path d="M2 6.5 L6 2 L10 6.5" fill="none" stroke="#444" stroke-width="1.2"/></svg><svg width="12" height="8" style="position:absolute;left:980px;top:896px"><path d="M2 1.5 L6 6 L10 1.5" fill="none" stroke="#444" stroke-width="1.2"/></svg><div style="position:absolute;left:1014px;top:71px;width:716px;height:438px;background:#fff;"></div><div style="position:absolute;left:1021.0px;top:72.4px;font-size:15.3px;color:#252423;font-weight:normal;white-space:nowrap;line-height:1;">GLOBAL GOVERNANCE COMPARISON | ABSOLUTE SCORES</div><div style="position:absolute;left:1021px;top:110px;width:14px;height:14px;border-radius:50%;background:#c9dcec"></div><div style="position:absolute;left:1037.0px;top:108.7px;font-size:15.5px;color:#605e5c;font-weight:normal;white-space:nowrap;line-height:1;">Governance/ To...</div><div style="position:absolute;left:1169px;top:110px;width:14px;height:14px;border-radius:50%;background:#b0cfe5"></div><div style="position:absolute;left:1185.0px;top:108.7px;font-size:15.5px;color:#605e5c;font-weight:normal;white-space:nowrap;line-height:1;">Governance/ 6...</div><div style="position:absolute;left:1309px;top:110px;width:14px;height:14px;border-radius:50%;background:#80b0d5"></div><div style="position:absolute;left:1325.0px;top:108.7px;font-size:15.5px;color:#605e5c;font-weight:normal;white-space:nowrap;line-height:1;">Governance/ ...</div><div style="position:absolute;left:1439px;top:110px;width:14px;height:14px;border-radius:50%;background:#4f8fc7"></div><div style="position:absolute;left:1455.0px;top:108.7px;font-size:15.5px;color:#605e5c;font-weight:normal;white-space:nowrap;line-height:1;">Governance/ ...</div><div style="position:absolute;left:1569px;top:110px;width:14px;height:14px;border-radius:50%;background:#1f6fb2"></div><div style="position:absolute;left:1585.0px;top:108.7px;font-size:15.5px;color:#605e5c;font-weight:normal;white-space:nowrap;line-height:1;">Governance/ ...</div><div style="position:absolute;left:1021px;top:135px;width:702px;height:367px;overflow:hidden"><svg width="702" height="367" viewBox="0 0 702 367" style="position:absolute;left:0;top:0"><rect width="702" height="367" fill="#bed0e5"/><polygon points="211.3,23.7 222.9,-2.2 245.9,-28.3 293.9,-44.0 322.7,-21.1 328.5,-13.2 316.9,32.6 315.0,55.7 309.3,77.8 303.5,86.1 290.1,91.3 278.5,103.5 270.9,118.7 267.0,127.4 259.3,122.7 255.5,110.3 251.7,101.2 247.8,80.6 244.0,65.7 234.4,40.8 220.9,36.8 211.3,23.7" fill="#f7f3f1"/><polygon points="305.4,103.5 309.3,99.3 322.7,98.8 325.6,105.8 316.9,112.9 309.3,111.1 305.4,103.5" fill="#dde8f1"/><polygon points="5.9,105.8 5.9,87.2 11.7,88.7 21.3,96.3 25.1,101.2 19.3,108.0 9.7,108.0 5.9,105.8" fill="#f7f3f1"/><polygon points="697.1,105.8 697.1,87.2 704.8,88.7 714.4,96.3 718.2,101.2 712.5,108.0 702.9,108.0 697.1,105.8" fill="#f7f3f1"/><polygon points="80.8,82.8 92.3,86.1 105.7,80.6 121.1,86.1 140.3,91.3 159.5,91.3 169.1,88.7 178.7,86.1 188.3,83.4 194.1,96.3 186.4,101.2 182.5,110.3 172.9,122.7 170.1,130.4 174.9,137.7 184.5,141.1 194.1,144.5 194.1,152.7 199.8,155.8 200.8,144.5 203.7,134.1 201.7,124.7 207.5,117.5 217.1,122.7 226.7,126.6 228.6,134.1 233.4,141.1 242.1,151.1 244.0,154.2 236.3,160.3 224.8,160.3 228.6,164.7 226.7,169.0 234.4,169.0 236.3,171.8 228.6,175.9 222.9,174.5 219.0,168.2 215.2,174.5 207.5,174.5 199.8,178.6 192.1,182.5 192.1,171.8 180.6,166.2 169.1,163.3 115.3,163.3 111.5,160.3 105.7,154.2 101.9,146.2 96.1,137.7 88.5,130.4 80.8,125.5" fill="#dee9f2"/><polygon points="169.1,88.7 178.7,86.1 188.3,83.4 194.1,96.3 186.4,101.2 182.5,110.3 172.9,122.7 170.1,130.4 174.9,137.7 184.5,141.1 194.1,144.5 194.1,152.7 199.8,155.8 200.8,144.5 203.7,134.1 201.7,124.7 207.5,117.5 217.1,122.7 226.7,126.6 228.6,118.7 213.3,110.3 197.9,110.3 186.4,101.2 169.1,88.7" fill="#cbdbe9"/><polygon points="105.0,84.5 158.0,-14.4 219.0,-14.4 207.5,23.7 197.9,40.8 199.8,57.7 211.3,71.9 228.6,96.3 232.5,99.7 226.7,116.6 213.3,116.6 201.7,112.4 194.1,96.3 188.3,83.4 178.7,86.1 159.5,91.3 121.1,86.1 105.0,84.5" fill="#d6e3ee"/><polygon points="124.9,80.6 149.9,86.1 157.6,77.8 149.9,59.1 130.7,59.1 124.9,80.6" fill="#dee9f2"/><polygon points="178.7,68.8 197.9,57.0 215.2,74.9 228.6,93.9 232.5,98.8 226.7,114.6 213.3,112.4 201.7,108.0 209.4,96.3 197.9,83.4 182.5,80.6 178.7,68.8" fill="#dee9f2"/><polygon points="163.3,36.8 188.3,36.8 201.7,32.6 213.3,19.0 232.5,-14.4 197.9,-28.3 169.1,-14.4 163.3,36.8" fill="#dee9f2"/><polygon points="111.5,70.0 121.1,71.9 126.9,55.7 113.4,53.5 111.5,70.0" fill="#dee9f2"/><polygon points="169.1,68.8 182.5,52.1 197.9,52.1 174.9,40.8 159.5,40.8 163.3,62.4 169.1,68.8" fill="#dee9f2"/><polygon points="126.9,44.7 149.9,48.5 151.8,32.6 132.6,36.8 126.9,44.7" fill="#dee9f2"/><polygon points="186.4,110.3 196.0,116.6 197.9,110.3 186.4,103.5 186.4,110.3" fill="#dee9f2"/><polygon points="238.2,167.3 249.7,169.9 250.3,161.8 244.0,155.5 238.2,167.3" fill="#dee9f2"/><polygon points="80.8,82.8 63.5,77.8 51.0,73.1 40.5,80.6 32.8,88.7 40.5,98.8 28.9,103.5 40.5,110.3 34.7,118.7 34.7,124.7 40.5,132.3 50.1,131.2 40.5,142.9 57.7,135.9 63.5,128.5 71.2,124.7 80.8,125.5" fill="#d3e2ee"/><polygon points="115.3,163.3 169.1,163.3 180.6,166.2 192.1,171.8 192.1,182.5 199.8,178.6 207.5,174.5 215.2,174.5 219.0,168.2 222.9,174.5 217.1,178.6 217.1,183.8 209.4,186.3 205.6,192.5 206.5,198.5 201.7,202.0 196.0,207.7 197.9,217.6 196.9,221.5 194.1,219.8 192.1,213.3 188.3,211.1 180.6,210.4 178.7,213.3 171.0,212.0 165.3,215.9 164.9,219.8 161.4,218.7 153.7,213.3 150.9,212.0 147.0,207.0 138.4,208.2 131.1,205.5 126.7,205.5 124.0,202.0 119.9,200.6 116.3,193.7 113.4,186.3 112.5,179.9 113.4,170.4 112.1,165.0 115.3,163.3" fill="#d2e1ed"/><polygon points="126.7,205.5 131.1,205.5 138.4,208.2 147.0,207.0 150.9,212.0 153.7,213.3 161.4,218.7 164.9,219.8 164.3,228.2 168.1,234.7 170.1,236.0 176.8,234.7 177.7,230.2 184.5,229.2 182.5,235.3 180.6,236.8 175.8,239.4 174.5,243.4 169.1,240.4 163.3,240.0 157.6,237.4 148.9,231.3 149.5,229.2 148.0,225.7 142.2,220.8 135.5,213.3 131.7,208.4 134.5,207.7 140.3,217.6 140.3,226.1 136.5,223.0 132.6,215.5 126.7,205.5" fill="#b3cfe5"/><polygon points="174.5,243.4 180.6,236.8 182.5,235.3 182.5,240.4 190.2,240.8 191.6,242.6 190.8,250.3 194.1,254.1 199.8,253.2 202.9,254.9 201.7,257.4 196.9,257.4 192.5,255.7 187.0,252.2 183.3,246.3 176.8,244.7 174.5,243.4" fill="#a6c7e2"/><polygon points="188.3,228.4 196.0,225.7 203.7,228.2 209.0,231.9 202.7,232.5 197.9,228.8 188.3,228.4" fill="#8db5d8"/><polygon points="208.7,232.7 220.0,234.3 220.0,235.6 214.2,237.2 208.7,235.6" fill="#a6c7e2"/><polygon points="202.9,254.9 205.6,253.4 206.5,250.6 213.3,247.5 215.2,249.1 220.9,251.2 228.6,250.8 232.5,251.0 236.3,255.1 242.1,260.0 247.8,260.3 252.6,263.4 255.5,268.0 257.4,272.5 266.1,275.9 274.7,277.1 284.3,281.7 284.7,285.4 280.5,292.7 276.6,300.6 275.7,308.7 272.8,314.8 266.1,317.3 258.4,323.2 257.4,328.8 252.6,335.3 248.8,341.0 245.9,343.3 242.1,344.5 241.1,350.5 232.5,352.9 226.7,357.9 226.7,368.5 221.9,372.6 224.8,376.8 220.2,384.2 213.3,382.7 208.5,382.7 206.5,371.2 210.4,355.4 210.4,348.1 214.2,331.9 216.5,306.6 205.6,299.6 196.2,283.0 197.9,277.3 196.0,274.4 197.9,270.0 200.8,266.5 202.9,263.8 202.9,254.9" fill="#b6d1e6"/><polygon points="213.3,247.5 215.2,249.1 220.9,251.2 228.6,250.8 232.5,251.0 236.3,255.1 234.4,260.9 229.8,264.0 223.2,269.2 221.9,260.0 217.1,258.0 212.3,257.1 213.3,247.5" fill="#8db5d8"/><polygon points="202.9,254.9 205.6,253.4 206.5,250.6 213.3,247.5 212.3,257.1 217.1,258.0 221.9,260.0 223.2,269.2 218.1,273.4 217.1,279.2 211.3,275.3 207.5,271.9 200.8,266.5 202.9,263.8 202.9,254.9" fill="#9dc0dd"/><polygon points="252.6,263.4 255.5,268.0 257.4,272.5 266.1,275.9 274.7,277.1 284.3,281.7 284.7,285.4 280.5,292.7 276.6,300.6 275.7,308.7 272.8,314.8 266.1,317.3 258.4,323.2 257.4,328.8 252.6,335.3 248.8,340.3 240.9,332.4 244.6,327.5 246.7,322.4 244.7,315.9 240.1,310.7 240.1,303.2 235.9,300.6 226.1,290.8 216.1,292.7 211.3,285.9 217.1,279.2 218.1,273.4 223.2,269.2 229.8,264.0 236.3,261.5 243.0,267.7 247.8,267.1 252.6,263.4" fill="#d4e3ef"/><polygon points="216.5,306.6 219.0,314.8 220.9,325.4 218.1,338.7 215.2,355.4 214.2,371.2 213.3,382.7 220.2,384.2 224.8,376.8 221.9,372.6 226.7,368.5 226.7,357.9 232.5,352.9 241.1,350.5 242.1,344.5 239.4,339.8 240.9,332.4 244.6,327.5 246.7,322.4 244.7,315.9 240.1,310.7 240.1,303.2 235.9,300.6 226.1,290.8 219.0,292.7 219.0,300.6 216.5,306.6" fill="#97bcdb"/><polygon points="239.4,339.8 240.9,332.4 248.8,340.3 245.9,343.3 242.1,344.5 239.4,339.8" fill="#d4e3ef"/><polygon points="216.5,306.6 219.0,314.8 220.9,325.4 218.1,338.7 215.2,355.4 214.2,371.2 213.3,382.7 208.5,382.7 206.5,371.2 210.4,355.4 210.4,348.1 214.2,331.9 216.5,306.6" fill="#dae7f1"/><polygon points="318.9,230.2 320.8,224.0 326.5,216.6 332.7,211.1 333.3,205.5 340.0,197.8 347.7,199.7 357.3,195.4 370.7,194.2 372.6,199.7 370.7,202.0 380.3,205.9 388.9,210.0 389.9,206.6 399.5,207.3 407.2,209.1 412.9,208.2 417.2,208.2 417.7,215.5 413.9,211.3 418.7,224.0 422.5,230.2 426.4,240.4 434.4,249.3 449.8,248.7 449.4,251.2 443.7,261.9 432.1,273.4 429.3,276.3 427.0,281.1 427.7,290.8 429.3,301.6 419.7,312.8 419.7,319.0 414.7,323.2 413.9,329.3 409.1,335.3 400.5,341.0 389.9,342.8 386.8,341.0 385.7,334.2 380.3,324.3 379.1,315.9 374.2,305.2 374.5,297.7 377.4,292.7 374.5,283.0 368.8,273.4 369.7,264.2 363.0,263.2 360.1,259.4 353.4,260.0 345.7,261.9 337.1,263.0 329.4,258.2 326.0,254.1 322.5,250.3 319.2,246.3 317.9,243.0 319.8,239.4 320.8,234.3 318.9,230.2" fill="#9dc0dd"/><polygon points="318.9,230.2 320.8,224.0 326.5,216.6 332.7,211.1 333.3,205.5 340.0,197.8 347.7,199.7 348.2,205.5 341.9,211.1 334.8,216.1 326.5,224.0 318.9,230.2" fill="#c4daeb"/><polygon points="347.7,199.7 357.3,195.4 370.7,194.2 372.6,199.7 370.7,202.0 380.3,205.9 388.9,210.0 389.9,206.6 399.5,207.3 399.5,232.3 397.6,232.3 380.3,226.1 374.5,225.1 361.1,233.3 353.4,230.2 341.9,221.9 334.8,216.1 341.9,211.1 348.2,205.5 347.7,199.7" fill="#8fb6d8"/><polygon points="399.5,207.3 407.2,209.1 412.9,208.2 417.2,208.2 417.7,215.5 413.9,211.3 418.7,224.0 422.5,228.2 399.5,228.2 399.5,207.3" fill="#a9c9e3"/><polygon points="318.9,230.2 326.5,224.0 334.8,216.1 341.9,221.9 353.4,230.2 361.1,233.3 374.5,225.1 380.3,226.1 397.6,232.3 399.5,228.2 422.5,228.2 426.4,240.4 434.4,249.3 432.1,254.1 420.6,261.9 414.9,264.8 403.3,261.9 393.7,262.9 380.3,257.1 368.8,250.3 359.2,248.3 347.7,246.3 336.1,248.3 328.5,246.3 319.2,246.3 317.9,243.0 319.8,239.4 320.8,234.3 318.9,230.2" fill="#8ab3d7"/><polygon points="318.9,230.2 326.5,224.0 334.8,216.1 341.9,221.9 353.4,230.2 359.2,234.3 359.2,248.3 347.7,246.3 336.1,248.3 328.5,246.3 319.2,246.3 317.9,243.0 319.8,239.4 320.8,234.3 318.9,230.2" fill="#9dc0dd"/><polygon points="319.2,246.3 328.5,246.3 336.1,248.3 347.7,246.3 359.2,248.3 368.8,250.3 369.7,264.2 363.0,263.2 360.1,259.4 353.4,260.0 345.7,261.9 337.1,263.0 329.4,258.2 326.0,254.1 322.5,250.3 319.2,246.3" fill="#a3c5e0"/><polygon points="357.3,258.0 357.3,249.3 359.2,245.3 368.8,246.3 378.4,246.3 378.4,250.3 374.5,258.0 368.8,262.9 363.0,263.2 360.1,259.4 357.3,258.0" fill="#8ab3d7"/><polygon points="420.6,261.9 432.1,254.1 434.4,249.3 449.8,248.7 449.4,251.2 443.7,261.9 432.1,273.4 429.3,276.3 427.0,281.1 416.8,273.4 414.9,264.8 420.6,261.9" fill="#8fb6d8"/><polygon points="375.5,283.0 386.1,279.2 387.0,264.8 397.6,261.9 403.3,261.9 411.0,267.7 408.1,274.4 408.1,283.0 410.1,287.9 406.2,287.9 407.2,296.7 401.4,293.7 393.7,292.7 391.8,285.0 384.1,285.0 375.5,283.0" fill="#5e98c9"/><polygon points="368.8,273.4 369.7,264.2 368.8,262.9 374.5,258.0 378.4,250.3 380.3,257.1 393.7,262.9 397.6,261.9 387.0,264.8 386.1,279.2 375.5,283.0 374.5,283.0 368.8,273.4" fill="#7eaad3"/><polygon points="408.1,274.4 411.0,267.7 414.9,264.8 416.8,273.4 427.0,281.1 427.7,290.8 429.3,301.6 419.7,312.8 419.7,319.0 414.7,323.2 411.0,314.8 414.9,304.6 409.1,300.6 407.2,296.7 406.2,287.9 410.1,287.9 408.1,283.0 408.1,274.4" fill="#8fb6d8"/><polygon points="374.5,283.0 384.1,285.0 391.8,285.0 393.7,292.7 401.4,293.7 407.2,296.7 409.1,300.6 399.5,305.6 391.8,306.6 374.2,305.2 374.5,297.7 377.4,292.7 374.5,283.0" fill="#a3c5e0"/><polygon points="374.2,305.2 391.8,306.6 399.5,305.6 409.1,300.6 414.9,304.6 411.0,314.8 414.7,323.2 413.9,329.3 409.1,335.3 400.5,341.0 389.9,342.8 386.8,341.0 385.7,334.2 380.3,324.3 379.1,315.9 374.2,305.2" fill="#c8ddee"/><polygon points="385.7,334.2 381.3,327.5 389.9,320.7 389.9,314.8 399.5,322.8 403.3,315.9 412.0,314.8 414.7,323.2 413.9,329.3 409.1,335.3 400.5,341.0 389.9,342.8 386.8,341.0 385.7,334.2" fill="#d6e5f0"/><polygon points="446.2,294.7 448.5,301.6 446.5,305.6 442.3,320.0 437.9,322.2 435.2,316.9 436.6,310.7 436.0,304.6 440.8,301.6 446.2,294.7" fill="#8fb6d8"/><polygon points="340.7,197.3 334.2,194.9 334.6,182.5 336.1,178.0 348.6,178.8 349.2,171.8 342.9,166.2 348.6,164.2 354.4,159.7 359.2,155.8 361.1,150.1 367.8,148.5 368.0,137.7 371.7,135.2 371.7,146.2 374.5,147.2 378.4,147.8 388.0,146.5 391.8,139.4 397.6,137.0 396.6,129.7 407.2,126.6 395.7,126.6 392.8,122.7 392.8,114.6 399.5,105.8 393.7,102.1 385.1,116.6 387.0,128.5 383.2,137.7 379.3,141.1 376.1,141.1 372.6,131.2 366.9,134.1 362.1,131.5 361.1,120.7 364.9,115.8 370.7,110.3 376.5,101.2 380.3,88.7 388.0,80.6 399.5,74.9 405.3,74.9 411.0,80.6 414.9,84.5 428.3,93.9 430.2,98.8 420.6,98.8 416.8,105.8 422.5,110.3 436.0,101.2 436.0,88.7 441.7,91.3 455.2,89.8 464.8,89.3 468.6,81.7 480.1,86.1 479.2,74.9 484.0,62.4 491.7,65.7 489.7,86.1 493.6,88.7 495.5,68.8 505.1,67.6 507.0,59.1 518.5,55.7 516.6,48.5 530.1,40.8 543.5,36.8 551.2,26.4 556.9,34.3 566.5,36.8 568.5,59.1 580.0,62.4 597.3,65.7 601.1,74.9 620.3,65.7 639.5,71.9 658.7,80.6 677.9,80.6 689.4,81.7 697.1,87.2 697.1,105.8 691.3,107.1 695.2,117.5 685.6,119.5 678.9,126.6 666.4,127.4 664.5,135.9 662.5,145.2 652.4,157.3 650.1,144.5 651.0,135.9 660.6,124.7 658.7,120.7 647.2,129.7 626.1,129.3 618.4,137.7 611.7,146.2 622.2,151.1 621.3,164.7 611.7,178.0 603.0,180.9 600.5,185.1 596.3,188.1 599.9,196.4 594.4,200.9 593.6,193.3 590.9,192.3 585.0,190.3 584.8,185.3 578.1,189.6 580.0,194.5 586.7,194.9 582.9,197.3 580.6,200.9 584.8,206.6 585.7,211.5 581.1,220.8 576.1,224.9 568.5,227.8 562.7,230.2 559.8,228.8 556.4,230.9 554.6,235.3 560.4,241.4 561.4,248.7 553.1,254.9 552.7,251.2 545.4,246.9 543.5,252.2 542.0,253.8 544.3,257.4 550.2,262.9 550.2,269.0 546.0,265.9 540.2,256.3 541.0,251.4 539.1,239.4 532.6,240.4 532.4,234.5 528.1,229.2 525.3,228.2 520.5,229.0 518.2,231.7 513.7,235.3 505.7,240.6 505.1,251.2 500.3,256.1 498.4,253.2 492.6,240.8 491.3,233.3 490.9,229.6 485.9,227.1 483.0,225.5 479.8,221.3 469.6,221.5 461.5,220.4 459.8,217.4 456.3,218.7 450.2,215.7 447.5,211.1 443.7,211.1 447.5,219.8 450.4,221.9 450.6,224.0 455.2,223.8 459.6,219.3 460.0,223.0 466.3,227.1 462.3,234.3 457.1,238.4 451.3,241.0 437.9,246.7 434.6,246.7 433.5,241.4 430.2,235.3 426.4,228.6 423.3,223.0 418.7,215.5 417.7,212.2 417.2,208.2 419.7,202.2 420.6,197.8 421.2,195.4 413.9,197.1 409.1,196.9 403.7,194.9 401.8,189.1 407.2,185.1 401.4,185.6 396.6,187.1 397.6,192.5 394.7,196.1 391.8,191.3 389.9,188.3 388.7,183.0 382.2,178.6 377.6,174.3 375.1,175.9 378.4,182.5 381.5,187.6 382.2,192.5 387.0,187.1 384.1,185.1 376.5,177.5 375.1,174.5 371.1,177.2 366.9,177.8 359.2,178.8 357.6,182.5 352.8,185.8 351.5,190.6 347.7,195.4 340.7,197.3" fill="#9ec0dc"/><polygon points="405.3,74.9 411.0,80.6 414.9,84.5 428.3,93.9 430.2,98.8 420.6,98.8 416.8,105.8 422.5,110.3 436.0,101.2 436.0,88.7 441.7,91.3 455.2,89.8 464.8,89.3 468.6,81.7 480.1,86.1 479.2,74.9 484.0,62.4 491.7,65.7 489.7,86.1 493.6,88.7 495.5,68.8 505.1,67.6 507.0,59.1 518.5,55.7 516.6,48.5 530.1,40.8 543.5,36.8 551.2,26.4 556.9,34.3 566.5,36.8 568.5,59.1 580.0,62.4 597.3,65.7 601.1,74.9 620.3,65.7 639.5,71.9 658.7,80.6 677.9,80.6 689.4,81.7 697.1,87.2 697.1,105.8 691.3,107.1 695.2,117.5 685.6,119.5 678.9,126.6 666.4,127.4 664.5,135.9 662.5,145.2 652.4,157.3 650.1,144.5 651.0,135.9 660.6,124.7 658.7,120.7 647.2,129.7 626.1,129.3 618.4,137.7 611.7,146.2 622.2,151.1 621.3,164.7 611.7,178.0 603.0,180.9 602.1,181.7 603.0,174.5 606.9,166.2 595.3,160.3 583.8,150.1 576.1,161.5 558.9,160.3 539.7,154.2 520.5,163.3 505.1,158.8 497.4,147.8 482.1,144.5 468.6,147.8 468.6,157.3 457.1,158.8 443.7,169.0 443.7,182.5 434.1,183.8 428.3,178.6 424.5,169.0 428.3,164.7 428.3,160.3 419.7,154.2 412.9,154.2 412.0,147.8 405.3,141.1 405.3,134.1 404.3,126.6 407.2,126.6 395.7,126.6 409.1,120.7 409.1,112.4 408.1,96.3 405.3,86.1 405.3,74.9" fill="#88aed3"/><polygon points="340.7,197.3 334.2,194.9 334.6,182.5 336.1,178.0 348.6,178.8 349.2,171.8 342.9,166.2 348.6,164.2 354.4,159.7 359.2,155.8 361.1,150.1 367.8,148.5 368.0,137.7 371.7,135.2 371.7,146.2 374.5,147.2 378.4,147.8 388.0,146.5 391.8,139.4 397.6,137.0 396.6,129.7 407.2,126.6 395.7,126.6 392.8,122.7 392.8,114.6 399.5,105.8 393.7,102.1 385.1,116.6 387.0,128.5 383.2,137.7 379.3,141.1 376.1,141.1 372.6,131.2 366.9,134.1 362.1,131.5 361.1,120.7 364.9,115.8 370.7,110.3 376.5,101.2 380.3,88.7 388.0,80.6 399.5,74.9 405.3,74.9 405.3,86.1 408.1,96.3 409.1,112.4 409.1,120.7 404.3,126.6 405.3,141.1 397.6,147.8 397.6,158.8 394.7,164.7 402.4,165.6 406.2,173.2 408.3,174.5 406.4,176.7 404.5,181.2 405.3,184.5 401.4,185.6 396.6,187.1 397.6,192.5 394.7,196.1 391.8,191.3 389.9,188.3 388.7,183.0 382.2,178.6 377.6,174.3 375.1,175.9 378.4,182.5 381.5,187.6 382.2,192.5 387.0,187.1 384.1,185.1 376.5,177.5 375.1,174.5 371.1,177.2 366.9,177.8 359.2,178.8 357.6,182.5 352.8,185.8 351.5,190.6 347.7,195.4 340.7,197.3" fill="#dde9f2"/><polygon points="397.6,147.8 405.3,141.1 412.0,147.8 412.9,154.2 419.7,154.2 428.3,160.3 428.3,164.7 424.5,169.0 418.7,173.2 415.8,175.9 413.9,173.2 410.1,170.4 408.3,174.5 406.2,173.2 402.4,165.6 394.7,164.7 397.6,158.8 397.6,147.8" fill="#8cb1d4"/><polygon points="428.3,178.6 434.1,183.8 443.7,182.5 446.5,186.3 445.6,191.3 436.9,190.1 432.1,185.1 428.3,178.6" fill="#a3c5e0"/><polygon points="401.8,189.1 403.7,194.9 409.1,196.9 413.9,197.1 421.2,195.4 420.6,197.8 424.5,195.4 432.1,194.7 437.5,194.5 436.9,188.8 432.1,185.1 431.2,183.8 424.5,185.1 418.7,182.5 409.1,184.8 405.3,184.5 407.2,185.1 401.8,189.1" fill="#8fb6d8"/><polygon points="417.2,208.2 419.7,202.2 420.6,197.8 424.5,195.4 432.1,194.7 437.5,194.5 439.8,199.7 443.7,211.1 447.5,219.8 450.4,221.9 450.6,224.0 455.2,223.8 459.6,219.3 460.0,223.0 466.3,227.1 462.3,234.3 457.1,238.4 451.3,241.0 437.9,246.7 434.6,246.7 433.5,241.4 430.2,235.3 426.4,228.6 423.3,223.0 418.7,215.5 417.7,212.2 417.2,208.2" fill="#9dc0dd"/><polygon points="437.5,194.5 436.9,188.8 443.7,190.6 445.6,191.3 455.2,194.0 466.7,193.7 478.2,194.2 487.8,195.4 495.5,194.9 499.3,199.7 494.5,205.0 487.8,215.5 485.9,223.0 483.0,225.5 479.8,221.3 469.6,221.5 461.5,220.4 459.8,217.4 456.3,218.7 450.2,215.7 447.5,211.1 443.7,211.1 439.8,199.7 437.5,194.5" fill="#8fb6d8"/><polygon points="443.7,169.0 457.1,158.8 468.6,157.3 468.6,147.8 482.1,144.5 497.4,147.8 505.1,158.8 514.7,169.0 505.1,174.5 505.1,181.2 493.6,179.9 484.0,185.1 478.2,179.9 468.6,177.2 459.0,174.5 451.3,183.8 449.4,175.9 453.3,169.0 446.5,170.4 443.7,169.0" fill="#8cb1d4"/><polygon points="451.3,183.8 455.2,187.6 455.2,194.0 466.7,193.7 478.2,194.2 487.8,195.4 495.5,194.9 495.5,188.8 505.1,181.2 493.6,179.9 484.0,185.1 478.2,179.9 468.6,177.2 459.0,174.5 451.3,183.8" fill="#a9c9e3"/><polygon points="520.5,163.3 539.7,154.2 558.9,160.3 576.1,161.5 580.0,169.0 566.5,174.5 553.1,183.0 535.8,180.4 526.2,173.2 520.5,163.3" fill="#b6d1e6"/><polygon points="505.1,181.2 495.5,188.8 495.5,194.9 499.3,199.7 503.2,205.5 502.2,210.0 507.0,211.1 520.5,215.9 528.1,215.9 537.7,214.8 539.7,223.0 545.4,229.2 555.0,226.5 559.8,228.8 562.7,230.2 568.5,227.8 576.1,224.9 581.1,220.8 585.7,211.5 584.8,206.6 580.6,200.9 582.9,197.3 586.7,194.9 580.0,194.5 578.1,189.6 584.8,185.3 590.5,187.6 599.2,181.5 602.1,181.7 603.0,174.5 606.9,166.2 595.3,160.3 583.8,150.1 576.1,161.5 580.0,169.0 566.5,174.5 553.1,183.0 535.8,180.4 526.2,173.2 520.5,163.3 514.7,169.0 505.1,174.5 505.1,181.2" fill="#9ec0dc"/><polygon points="590.5,187.6 599.2,181.5 602.1,181.7 600.5,185.1 596.3,188.1 599.9,196.4 598.2,199.7 594.4,200.9 593.6,193.3 590.9,192.3 590.5,187.6" fill="#cfe0ee"/><polygon points="483.0,225.5 485.9,223.0 487.8,215.5 494.5,205.0 499.3,199.7 503.2,205.5 502.2,210.0 507.0,211.1 520.5,215.9 528.1,215.9 537.7,214.8 532.9,224.0 529.1,228.2 528.1,229.2 525.3,228.2 520.5,229.0 518.2,231.7 513.7,235.3 505.7,240.6 505.1,251.2 500.3,256.1 498.4,253.2 492.6,240.8 491.3,233.3 490.9,229.6 485.9,227.1 483.0,225.5" fill="#9dc0dd"/><polygon points="537.7,214.8 539.7,223.0 545.4,229.2 555.0,226.5 559.8,228.8 556.4,230.9 554.6,235.3 560.4,241.4 561.4,248.7 553.1,254.9 552.7,251.2 545.4,246.9 543.5,252.2 542.0,253.8 544.3,257.4 550.2,262.9 550.2,269.0 546.0,265.9 540.2,256.3 541.0,251.4 539.1,239.4 532.6,240.4 532.4,234.5 528.1,229.2 529.1,228.2 532.9,224.0 537.7,214.8" fill="#94b9da"/><polygon points="404.5,181.2 405.3,184.5 409.1,184.8 418.7,182.5 424.5,185.1 431.2,183.8 428.3,178.6 423.5,175.4 418.7,174.5 415.8,175.9 413.9,173.2 410.1,170.4 408.1,174.5 406.4,176.7 404.5,181.2" fill="#bed0e5"/><polygon points="441.7,175.9 446.5,170.4 453.3,169.0 453.3,174.5 449.4,175.9 452.3,182.5 455.2,187.6 455.2,194.0 447.5,194.2 445.6,191.3 446.5,186.3 443.7,182.5 441.7,175.9" fill="#bed0e5"/><polygon points="340.6,160.3 354.4,156.7 354.8,152.0 351.5,149.5 348.6,144.5 347.7,137.7 345.2,131.9 341.9,131.9 339.6,138.4 341.9,144.5 345.7,147.8 342.9,151.7 341.5,155.2 344.8,156.1 340.6,160.3" fill="#dde9f2"/><polygon points="332.3,155.5 340.0,153.6 340.0,147.8 337.1,143.9 332.3,147.2 332.3,155.5" fill="#dde9f2"/><polygon points="601.1,208.2 604.0,200.9 610.7,201.6 614.2,200.9 619.9,199.7 621.8,197.3 623.8,190.1 623.2,184.0 620.3,186.3 619.7,191.3 614.5,195.4 605.9,198.7 602.6,202.0 601.1,208.2" fill="#dde9f2"/><polygon points="620.3,183.8 623.2,181.2 630.9,179.1 628.0,176.7 623.6,173.5 621.3,179.1 620.3,183.8" fill="#dde9f2"/><polygon points="624.1,171.8 627.0,163.3 625.1,146.9 624.1,157.3 624.1,171.8" fill="#88aed3"/><polygon points="504.7,259.6 508.6,257.6 507.0,253.4 505.1,252.6 504.7,259.6" fill="#a9c9e3"/><polygon points="582.3,226.5 583.8,228.2 585.7,221.9 584.8,221.3 582.3,226.5" fill="#cfe0ee"/><polygon points="581.9,235.3 586.3,235.3 585.7,240.4 589.6,246.3 593.4,253.2 593.4,259.0 585.7,258.0 588.6,252.2 583.8,247.3 581.9,242.4 581.9,235.3" fill="#a9c9e3"/><polygon points="560.8,268.6 562.7,277.3 571.3,279.2 575.2,275.3 578.1,269.6 580.0,261.9 576.1,258.0 573.3,261.9 568.5,265.4 561.9,267.7 560.8,268.6" fill="#b6d1e6"/><polygon points="534.3,260.7 539.7,263.8 549.3,271.5 555.0,277.3 555.0,283.0 547.9,279.2 543.5,273.4 534.3,260.7" fill="#b6d1e6"/><polygon points="553.5,284.6 558.9,283.4 567.5,284.6 571.3,286.5 562.7,287.3 553.5,284.6" fill="#b6d1e6"/><polygon points="580.9,282.1 582.9,269.6 591.5,268.6 587.7,270.5 584.8,273.4 587.7,277.3 583.8,282.1 580.9,282.1" fill="#b6d1e6"/><polygon points="603.0,273.4 610.7,277.8 616.5,274.4 622.2,276.5 629.9,279.2 634.7,283.0 639.5,292.0 633.7,290.8 628.0,286.3 622.2,288.9 616.5,287.5 616.1,281.7 606.9,279.2 604.9,276.9 603.0,273.4" fill="#b6d1e6"/><polygon points="569.4,314.8 570.4,323.2 572.3,340.5 578.1,343.3 588.6,340.5 599.2,335.5 606.9,336.6 612.0,342.8 616.1,338.7 617.4,344.5 620.3,350.0 627.0,352.4 632.4,352.9 639.5,349.3 645.3,334.2 646.2,327.5 645.3,321.1 638.5,314.8 631.8,308.3 630.7,300.6 627.4,298.6 625.1,292.2 623.2,296.7 623.4,304.2 619.3,305.6 614.0,302.4 611.9,300.6 614.2,295.1 606.1,293.7 602.1,295.1 600.1,300.2 594.4,298.6 590.3,303.2 585.7,307.2 582.9,310.1 576.1,311.9 569.4,314.8" fill="#dfeaf3"/><polygon points="683.1,341.9 686.5,345.7 689.2,349.3 694.2,349.7 691.3,353.7 689.4,358.7 686.9,358.5 686.7,354.9 685.2,353.4 686.5,348.1 683.1,341.9" fill="#dfeaf3"/><polygon points="372.6,19.0 382.2,3.5 403.3,3.5 393.7,23.7 382.2,36.8 372.6,19.0" fill="#f7f3f1"/><polygon points="451.3,71.9 457.1,59.1 460.9,44.7 470.5,36.8 482.1,32.6 466.7,52.1 459.0,68.8 451.3,71.9" fill="#88aed3"/><polygon points="533.9,8.9 543.5,-8.1 553.1,14.1 545.4,23.7 533.9,8.9" fill="#88aed3"/><polygon points="614.5,48.5 624.1,40.8 639.5,44.7 628.0,62.4 614.5,48.5" fill="#88aed3"/></svg><svg width="702" height="367" style="position:absolute;left:0;top:0;font-family:"Liberation Sans", sans-serif"><text x="182" y="157" font-size="23.7" fill="#2a3440" fill-opacity="0.42" text-anchor="middle">NORTH</text><text x="184" y="183" font-size="24.3" fill="#2a3440" fill-opacity="0.5" text-anchor="middle">AMERICA</text><text x="426" y="172" font-size="23.6" fill="#2a3440" fill-opacity="0.5" text-anchor="middle">EUROPE</text><text x="565" y="158.60000000000002" font-size="23.4" fill="#2a3440" fill-opacity="0.6" text-anchor="middle">ASIA</text><text x="423" y="274.6" font-size="23.9" fill="#2a3440" fill-opacity="0.68" text-anchor="middle">AFRICA</text><text x="277" y="311" font-size="24.2" fill="#2a3440" fill-opacity="0.6" text-anchor="middle">SOUTH</text><text x="277" y="337" font-size="24.3" fill="#2a3440" fill-opacity="0.65" text-anchor="middle">AMERICA</text><text x="588" y="329" font-size="24.5" fill="#2a3440" fill-opacity="0.55" text-anchor="start">AUSTRAL</text><text x="46" y="211.60000000000002" font-size="16.2" fill="#5f78c4" text-anchor="middle" >Pacific</text><text x="47" y="229" font-size="16.1" fill="#5f78c4" text-anchor="middle" >Ocean</text><text x="311" y="216" font-size="16.1" fill="#5f78c4" text-anchor="end" >Atlantic</text><text x="311" y="233" font-size="16.1" fill="#5f78c4" text-anchor="end" >Ocean</text><text x="490" y="319.29999999999995" font-size="16.1" fill="#5f78c4" text-anchor="start" >Indian</text><text x="490.5999999999999" y="337" font-size="16.1" fill="#5f78c4" text-anchor="start" >Ocean</text><rect x="6" y="341" width="6.3" height="6.3" fill="#f25022"/><rect x="13" y="341" width="6.3" height="6.3" fill="#7fba00"/><rect x="6" y="348" width="6.3" height="6.3" fill="#00a4ef"/><rect x="13" y="348" width="6.3" height="6.3" fill="#ffb900"/><text x="22.799999999999955" y="353" font-size="10.9" fill="#6b6b6b" text-anchor="start" >Microsoft Bing</text><text x="467.4000000000001" y="355" font-size="12.1" fill="#111" text-anchor="start" >© 2022 Microsoft Corporation</text><text x="636" y="355" font-size="11.9" fill="#2a3f9a" text-anchor="start" text-decoration="underline">Terms</text></svg></div><div style="position:absolute;left:1014px;top:526px;width:716px;height:410px;background:#fff;"></div><div style="position:absolute;left:1021.0px;top:527.9px;font-size:15.2px;color:#252423;font-weight:normal;white-space:nowrap;line-height:1;">GOVERNANCE PERCENTILE SCORES &amp; GDP PER CAPITA | ABSOLUTE SCORES</div><div style="position:absolute;left:1021px;top:566px;width:14px;height:14px;border-radius:50%;background:#c9dcec"></div><div style="position:absolute;left:1037.0px;top:564.7px;font-size:15.5px;color:#605e5c;font-weight:normal;white-space:nowrap;line-height:1;">Governance/ To...</div><div style="position:absolute;left:1169px;top:566px;width:14px;height:14px;border-radius:50%;background:#b0cfe5"></div><div style="position:absolute;left:1185.0px;top:564.7px;font-size:15.5px;color:#605e5c;font-weight:normal;white-space:nowrap;line-height:1;">Governance/ 6...</div><div style="position:absolute;left:1309px;top:566px;width:14px;height:14px;border-radius:50%;background:#80b0d5"></div><div style="position:absolute;left:1325.0px;top:564.7px;font-size:15.5px;color:#605e5c;font-weight:normal;white-space:nowrap;line-height:1;">Governance/ ...</div><div style="position:absolute;left:1439px;top:566px;width:14px;height:14px;border-radius:50%;background:#4f8fc7"></div><div style="position:absolute;left:1455.0px;top:564.7px;font-size:15.5px;color:#605e5c;font-weight:normal;white-space:nowrap;line-height:1;">Governance/ ...</div><div style="position:absolute;left:1569px;top:566px;width:14px;height:14px;border-radius:50%;background:#1f6fb2"></div><div style="position:absolute;left:1585.0px;top:564.7px;font-size:15.5px;color:#605e5c;font-weight:normal;white-space:nowrap;line-height:1;">Governance/ ...</div><svg width="716" height="410" viewBox="1014 526 716 410" style="position:absolute;left:1014px;top:526px"><defs><clipPath id="pc"><rect x="1014" y="600" width="716" height="288"/></clipPath></defs><line x1="1084.2" y1="603.8" x2="1084.2" y2="887" stroke="#c8c8c8" stroke-width="1.2" stroke-dasharray="1.3 6.6"/><line x1="1236" y1="603.8" x2="1236" y2="887" stroke="#c8c8c8" stroke-width="1.2" stroke-dasharray="1.3 6.6"/><line x1="1387.9" y1="603.8" x2="1387.9" y2="887" stroke="#c8c8c8" stroke-width="1.2" stroke-dasharray="1.3 6.6"/><line x1="1539.7" y1="603.8" x2="1539.7" y2="887" stroke="#c8c8c8" stroke-width="1.2" stroke-dasharray="1.3 6.6"/><line x1="1691.5" y1="603.8" x2="1691.5" y2="887" stroke="#c8c8c8" stroke-width="1.2" stroke-dasharray="1.3 6.6"/><line x1="1084.2" y1="603.8" x2="1691.5" y2="603.8" stroke="#c8c8c8" stroke-width="1.2" stroke-dasharray="1.3 6.6"/><line x1="1084.2" y1="745.4" x2="1691.5" y2="745.4" stroke="#c8c8c8" stroke-width="1.2" stroke-dasharray="1.3 6.6"/><line x1="1084.2" y1="887" x2="1691.5" y2="887" stroke="#c8c8c8" stroke-width="1.2" stroke-dasharray="1.3 6.6"/><g clip-path="url(#pc)"><circle cx="1307.1" cy="630.7" r="6.6" fill="#cfe2f0" fill-opacity="0.92"/><circle cx="1385.0" cy="642.6" r="6.6" fill="#cfe2f0" fill-opacity="0.92"/><circle cx="1448.2" cy="606.3" r="6.6" fill="#cfe2f0" fill-opacity="0.92"/><circle cx="1464.5" cy="606.3" r="6.6" fill="#cfe2f0" fill-opacity="0.92"/><circle cx="1478.7" cy="603.0" r="6.6" fill="#cfe2f0" fill-opacity="0.92"/><circle cx="1487.3" cy="605.2" r="6.6" fill="#cfe2f0" fill-opacity="0.92"/><circle cx="1496.0" cy="603.0" r="6.6" fill="#cfe2f0" fill-opacity="0.92"/><circle cx="1502.6" cy="605.2" r="6.6" fill="#cfe2f0" fill-opacity="0.92"/><circle cx="1509.1" cy="603.0" r="6.6" fill="#cfe2f0" fill-opacity="0.92"/><circle cx="1521.0" cy="603.0" r="6.6" fill="#cfe2f0" fill-opacity="0.92"/><circle cx="1533.0" cy="603.0" r="6.6" fill="#cfe2f0" fill-opacity="0.92"/><circle cx="1554.7" cy="603.0" r="6.6" fill="#cfe2f0" fill-opacity="0.92"/><circle cx="1579.7" cy="605.2" r="6.6" fill="#cfe2f0" fill-opacity="0.92"/><circle cx="1452.6" cy="613.9" r="6.6" fill="#cfe2f0" fill-opacity="0.92"/><circle cx="1461.3" cy="611.7" r="6.6" fill="#cfe2f0" fill-opacity="0.92"/><circle cx="1458.0" cy="627.0" r="6.6" fill="#cfe2f0" fill-opacity="0.92"/><circle cx="1470.0" cy="623.7" r="6.6" fill="#cfe2f0" fill-opacity="0.92"/><circle cx="1464.5" cy="636.3" r="6.6" fill="#cfe2f0" fill-opacity="0.92"/><circle cx="1485.2" cy="619.3" r="6.6" fill="#cfe2f0" fill-opacity="0.92"/><circle cx="1485.2" cy="627.0" r="6.6" fill="#cfe2f0" fill-opacity="0.92"/><circle cx="1495.0" cy="611.7" r="6.6" fill="#cfe2f0" fill-opacity="0.92"/><circle cx="1438.0" cy="635.7" r="6.6" fill="#cfe2f0" fill-opacity="0.92"/><circle cx="1420.0" cy="635.0" r="6.6" fill="#cfe2f0" fill-opacity="0.92"/><circle cx="1412.8" cy="640.4" r="6.6" fill="#cfe2f0" fill-opacity="0.92"/><circle cx="1413.4" cy="652.4" r="6.6" fill="#cfe2f0" fill-opacity="0.92"/><circle cx="1578.7" cy="642.2" r="6.6" fill="#cfe2f0" fill-opacity="0.92"/><circle cx="1290.4" cy="700.9" r="6.6" fill="#b5d4e8" fill-opacity="0.92"/><circle cx="1316.5" cy="683.5" r="6.6" fill="#b5d4e8" fill-opacity="0.92"/><circle cx="1320.8" cy="683.5" r="6.6" fill="#b5d4e8" fill-opacity="0.92"/><circle cx="1331.7" cy="683.0" r="6.6" fill="#b5d4e8" fill-opacity="0.92"/><circle cx="1337.8" cy="679.1" r="6.6" fill="#b5d4e8" fill-opacity="0.92"/><circle cx="1349.1" cy="686.7" r="6.6" fill="#b5d4e8" fill-opacity="0.92"/><circle cx="1363.2" cy="677.6" r="6.6" fill="#b5d4e8" fill-opacity="0.92"/><circle cx="1375.6" cy="678.0" r="6.6" fill="#b5d4e8" fill-opacity="0.92"/><circle cx="1359.5" cy="690.4" r="6.6" fill="#b5d4e8" fill-opacity="0.92"/><circle cx="1340.8" cy="696.5" r="6.6" fill="#b5d4e8" fill-opacity="0.92"/><circle cx="1328.4" cy="702.0" r="6.6" fill="#b5d4e8" fill-opacity="0.92"/><circle cx="1316.5" cy="708.5" r="6.6" fill="#b5d4e8" fill-opacity="0.92"/><circle cx="1325.2" cy="709.6" r="6.6" fill="#b5d4e8" fill-opacity="0.92"/><circle cx="1336.0" cy="703.0" r="6.6" fill="#b5d4e8" fill-opacity="0.92"/><circle cx="1344.7" cy="709.6" r="6.6" fill="#b5d4e8" fill-opacity="0.92"/><circle cx="1327.8" cy="716.1" r="6.6" fill="#b5d4e8" fill-opacity="0.92"/><circle cx="1361.0" cy="715.7" r="6.6" fill="#b5d4e8" fill-opacity="0.92"/><circle cx="1381.3" cy="696.1" r="6.6" fill="#b5d4e8" fill-opacity="0.92"/><circle cx="1391.5" cy="671.5" r="6.6" fill="#b5d4e8" fill-opacity="0.92"/><circle cx="1388.2" cy="682.4" r="6.6" fill="#b5d4e8" fill-opacity="0.92"/><circle cx="1396.9" cy="688.9" r="6.6" fill="#b5d4e8" fill-opacity="0.92"/><circle cx="1399.1" cy="683.5" r="6.6" fill="#b5d4e8" fill-opacity="0.92"/><circle cx="1421.0" cy="675.9" r="6.6" fill="#b5d4e8" fill-opacity="0.92"/><circle cx="1425.4" cy="671.5" r="6.6" fill="#b5d4e8" fill-opacity="0.92"/><circle cx="1424.3" cy="681.3" r="6.6" fill="#b5d4e8" fill-opacity="0.92"/><circle cx="1434.5" cy="667.8" r="6.6" fill="#b5d4e8" fill-opacity="0.92"/><circle cx="1433.0" cy="688.3" r="6.6" fill="#b5d4e8" fill-opacity="0.92"/><circle cx="1441.7" cy="687.8" r="6.6" fill="#b5d4e8" fill-opacity="0.92"/><circle cx="1463.0" cy="693.3" r="6.6" fill="#b5d4e8" fill-opacity="0.92"/><circle cx="1442.8" cy="710.7" r="6.6" fill="#b5d4e8" fill-opacity="0.92"/><circle cx="1511.9" cy="706.7" r="6.6" fill="#b5d4e8" fill-opacity="0.92"/><circle cx="1405.8" cy="687.4" r="6.6" fill="#b5d4e8" fill-opacity="0.92"/><circle cx="1174.7" cy="728.3" r="6.6" fill="#8fbadb" fill-opacity="0.92"/><circle cx="1185.6" cy="758.7" r="6.6" fill="#8fbadb" fill-opacity="0.92"/><circle cx="1206.3" cy="763.9" r="6.6" fill="#8fbadb" fill-opacity="0.92"/><circle cx="1211.7" cy="751.5" r="6.6" fill="#8fbadb" fill-opacity="0.92"/><circle cx="1221.9" cy="754.1" r="6.6" fill="#8fbadb" fill-opacity="0.92"/><circle cx="1225.2" cy="753.5" r="6.6" fill="#8fbadb" fill-opacity="0.92"/><circle cx="1236.5" cy="742.8" r="6.6" fill="#8fbadb" fill-opacity="0.92"/><circle cx="1235.6" cy="762.8" r="6.6" fill="#8fbadb" fill-opacity="0.92"/><circle cx="1251.3" cy="749.8" r="6.6" fill="#8fbadb" fill-opacity="0.92"/><circle cx="1258.9" cy="754.6" r="6.6" fill="#8fbadb" fill-opacity="0.92"/><circle cx="1267.6" cy="754.6" r="6.6" fill="#8fbadb" fill-opacity="0.92"/><circle cx="1274.7" cy="745.4" r="6.6" fill="#8fbadb" fill-opacity="0.92"/><circle cx="1285.4" cy="751.5" r="6.6" fill="#8fbadb" fill-opacity="0.92"/><circle cx="1296.9" cy="747.6" r="6.6" fill="#8fbadb" fill-opacity="0.92"/><circle cx="1299.1" cy="748.7" r="6.6" fill="#8fbadb" fill-opacity="0.92"/><circle cx="1298.0" cy="755.2" r="6.6" fill="#8fbadb" fill-opacity="0.92"/><circle cx="1257.8" cy="772.6" r="6.6" fill="#8fbadb" fill-opacity="0.92"/><circle cx="1326.3" cy="731.3" r="6.6" fill="#8fbadb" fill-opacity="0.92"/><circle cx="1331.7" cy="729.1" r="6.6" fill="#8fbadb" fill-opacity="0.92"/><circle cx="1337.1" cy="733.5" r="6.6" fill="#8fbadb" fill-opacity="0.92"/><circle cx="1325.2" cy="738.9" r="6.6" fill="#8fbadb" fill-opacity="0.92"/><circle cx="1332.8" cy="742.2" r="6.6" fill="#8fbadb" fill-opacity="0.92"/><circle cx="1320.8" cy="748.7" r="6.6" fill="#8fbadb" fill-opacity="0.92"/><circle cx="1329.5" cy="748.7" r="6.6" fill="#8fbadb" fill-opacity="0.92"/><circle cx="1336.0" cy="750.9" r="6.6" fill="#8fbadb" fill-opacity="0.92"/><circle cx="1342.6" cy="755.2" r="6.6" fill="#8fbadb" fill-opacity="0.92"/><circle cx="1332.8" cy="763.9" r="6.6" fill="#8fbadb" fill-opacity="0.92"/><circle cx="1331.7" cy="769.3" r="6.6" fill="#8fbadb" fill-opacity="0.92"/><circle cx="1348.0" cy="763.9" r="6.6" fill="#8fbadb" fill-opacity="0.92"/><circle cx="1356.7" cy="763.9" r="6.6" fill="#8fbadb" fill-opacity="0.92"/><circle cx="1343.7" cy="722.2" r="6.6" fill="#8fbadb" fill-opacity="0.92"/><circle cx="1362.1" cy="743.9" r="6.6" fill="#8fbadb" fill-opacity="0.92"/><circle cx="1368.7" cy="743.3" r="6.6" fill="#8fbadb" fill-opacity="0.92"/><circle cx="1375.2" cy="740.0" r="6.6" fill="#8fbadb" fill-opacity="0.92"/><circle cx="1370.8" cy="749.8" r="6.6" fill="#8fbadb" fill-opacity="0.92"/><circle cx="1386.0" cy="743.3" r="6.6" fill="#8fbadb" fill-opacity="0.92"/><circle cx="1387.1" cy="747.6" r="6.6" fill="#8fbadb" fill-opacity="0.92"/><circle cx="1401.3" cy="717.2" r="6.6" fill="#8fbadb" fill-opacity="0.92"/><circle cx="1410.2" cy="731.7" r="6.6" fill="#8fbadb" fill-opacity="0.92"/><circle cx="1411.3" cy="740.0" r="6.6" fill="#8fbadb" fill-opacity="0.92"/><circle cx="1412.3" cy="749.8" r="6.6" fill="#8fbadb" fill-opacity="0.92"/><circle cx="1421.0" cy="743.9" r="6.6" fill="#8fbadb" fill-opacity="0.92"/><circle cx="1451.0" cy="747.0" r="6.6" fill="#8fbadb" fill-opacity="0.92"/><circle cx="1465.6" cy="746.5" r="6.6" fill="#8fbadb" fill-opacity="0.92"/><circle cx="1490.6" cy="746.5" r="6.6" fill="#8fbadb" fill-opacity="0.92"/><circle cx="1500.4" cy="746.1" r="6.6" fill="#8fbadb" fill-opacity="0.92"/><circle cx="1508.0" cy="748.3" r="6.6" fill="#8fbadb" fill-opacity="0.92"/><circle cx="1490.6" cy="767.8" r="6.6" fill="#8fbadb" fill-opacity="0.92"/><circle cx="1191.9" cy="787.4" r="6.6" fill="#5d9ccc" fill-opacity="0.92"/><circle cx="1196.9" cy="787.8" r="6.6" fill="#5d9ccc" fill-opacity="0.92"/><circle cx="1222.1" cy="791.1" r="6.6" fill="#5d9ccc" fill-opacity="0.92"/><circle cx="1269.3" cy="774.8" r="6.6" fill="#5d9ccc" fill-opacity="0.92"/><circle cx="1285.0" cy="779.6" r="6.6" fill="#5d9ccc" fill-opacity="0.92"/><circle cx="1275.2" cy="786.1" r="6.6" fill="#5d9ccc" fill-opacity="0.92"/><circle cx="1273.0" cy="797.6" r="6.6" fill="#5d9ccc" fill-opacity="0.92"/><circle cx="1278.4" cy="804.1" r="6.6" fill="#5d9ccc" fill-opacity="0.92"/><circle cx="1282.8" cy="800.4" r="6.6" fill="#5d9ccc" fill-opacity="0.92"/><circle cx="1286.0" cy="809.6" r="6.6" fill="#5d9ccc" fill-opacity="0.92"/><circle cx="1289.3" cy="816.1" r="6.6" fill="#5d9ccc" fill-opacity="0.92"/><circle cx="1289.3" cy="821.5" r="6.6" fill="#5d9ccc" fill-opacity="0.92"/><circle cx="1299.1" cy="823.7" r="6.6" fill="#5d9ccc" fill-opacity="0.92"/><circle cx="1297.6" cy="795.7" r="6.6" fill="#5d9ccc" fill-opacity="0.92"/><circle cx="1320.2" cy="775.9" r="6.6" fill="#5d9ccc" fill-opacity="0.92"/><circle cx="1319.7" cy="783.5" r="6.6" fill="#5d9ccc" fill-opacity="0.92"/><circle cx="1319.7" cy="786.7" r="6.6" fill="#5d9ccc" fill-opacity="0.92"/><circle cx="1333.2" cy="788.5" r="6.6" fill="#5d9ccc" fill-opacity="0.92"/><circle cx="1347.3" cy="775.2" r="6.6" fill="#5d9ccc" fill-opacity="0.92"/><circle cx="1380.6" cy="791.7" r="6.6" fill="#5d9ccc" fill-opacity="0.92"/><circle cx="1398.0" cy="785.7" r="6.6" fill="#5d9ccc" fill-opacity="0.92"/><circle cx="1148.7" cy="829.6" r="6.6" fill="#5d9ccc" fill-opacity="0.92"/><circle cx="1198.0" cy="822.6" r="6.6" fill="#5d9ccc" fill-opacity="0.92"/><circle cx="1205.2" cy="827.6" r="6.6" fill="#5d9ccc" fill-opacity="0.92"/><circle cx="1224.5" cy="811.7" r="6.6" fill="#5d9ccc" fill-opacity="0.92"/><circle cx="1224.5" cy="820.9" r="6.6" fill="#5d9ccc" fill-opacity="0.92"/><circle cx="1235.0" cy="822.2" r="6.6" fill="#5d9ccc" fill-opacity="0.92"/><circle cx="1244.7" cy="827.0" r="6.6" fill="#5d9ccc" fill-opacity="0.92"/><circle cx="1255.2" cy="816.1" r="6.6" fill="#5d9ccc" fill-opacity="0.92"/><circle cx="1253.0" cy="828.0" r="6.6" fill="#5d9ccc" fill-opacity="0.92"/><circle cx="1316.0" cy="813.9" r="6.6" fill="#5d9ccc" fill-opacity="0.92"/><circle cx="1321.9" cy="816.1" r="6.6" fill="#5d9ccc" fill-opacity="0.92"/><circle cx="1338.2" cy="821.5" r="6.6" fill="#5d9ccc" fill-opacity="0.92"/><circle cx="1344.3" cy="816.7" r="6.6" fill="#5d9ccc" fill-opacity="0.92"/><circle cx="1369.7" cy="813.5" r="6.6" fill="#5d9ccc" fill-opacity="0.92"/><circle cx="1373.0" cy="812.8" r="6.6" fill="#5d9ccc" fill-opacity="0.92"/><circle cx="1370.8" cy="820.4" r="6.6" fill="#5d9ccc" fill-opacity="0.92"/><circle cx="1435.2" cy="776.5" r="6.6" fill="#5d9ccc" fill-opacity="0.92"/><circle cx="1444.3" cy="806.3" r="6.6" fill="#5d9ccc" fill-opacity="0.92"/><circle cx="1410.2" cy="817.8" r="6.6" fill="#5d9ccc" fill-opacity="0.92"/><circle cx="1420.4" cy="819.3" r="6.6" fill="#5d9ccc" fill-opacity="0.92"/><circle cx="1099.1" cy="883.5" r="6.6" fill="#2b7bbb" fill-opacity="0.92"/><circle cx="1160.6" cy="885.7" r="6.6" fill="#2b7bbb" fill-opacity="0.92"/><circle cx="1179.5" cy="876.3" r="6.6" fill="#2b7bbb" fill-opacity="0.92"/><circle cx="1186.5" cy="857.0" r="6.6" fill="#2b7bbb" fill-opacity="0.92"/><circle cx="1192.6" cy="853.7" r="6.6" fill="#2b7bbb" fill-opacity="0.92"/><circle cx="1198.7" cy="870.4" r="6.6" fill="#2b7bbb" fill-opacity="0.92"/><circle cx="1190.4" cy="884.6" r="6.6" fill="#2b7bbb" fill-opacity="0.92"/><circle cx="1213.2" cy="884.6" r="6.6" fill="#2b7bbb" fill-opacity="0.92"/><circle cx="1217.1" cy="847.6" r="6.6" fill="#2b7bbb" fill-opacity="0.92"/><circle cx="1229.5" cy="885.7" r="6.6" fill="#2b7bbb" fill-opacity="0.92"/><circle cx="1233.4" cy="847.0" r="6.6" fill="#2b7bbb" fill-opacity="0.92"/><circle cx="1240.4" cy="843.3" r="6.6" fill="#2b7bbb" fill-opacity="0.92"/><circle cx="1244.1" cy="832.4" r="6.6" fill="#2b7bbb" fill-opacity="0.92"/><circle cx="1250.8" cy="849.8" r="6.6" fill="#2b7bbb" fill-opacity="0.92"/><circle cx="1259.5" cy="836.3" r="6.6" fill="#2b7bbb" fill-opacity="0.92"/><circle cx="1265.4" cy="880.2" r="6.6" fill="#2b7bbb" fill-opacity="0.92"/><circle cx="1268.7" cy="884.6" r="6.6" fill="#2b7bbb" fill-opacity="0.92"/><circle cx="1282.1" cy="885.0" r="6.6" fill="#2b7bbb" fill-opacity="0.92"/><circle cx="1308.9" cy="871.1" r="6.6" fill="#2b7bbb" fill-opacity="0.92"/><circle cx="1313.7" cy="866.1" r="6.6" fill="#2b7bbb" fill-opacity="0.92"/><circle cx="1320.2" cy="874.1" r="6.6" fill="#2b7bbb" fill-opacity="0.92"/><circle cx="1316.9" cy="882.4" r="6.6" fill="#2b7bbb" fill-opacity="0.92"/><circle cx="1337.8" cy="846.5" r="6.6" fill="#2b7bbb" fill-opacity="0.92"/><circle cx="1358.9" cy="856.3" r="6.6" fill="#2b7bbb" fill-opacity="0.92"/><circle cx="1379.1" cy="835.0" r="6.6" fill="#2b7bbb" fill-opacity="0.92"/><circle cx="1379.5" cy="848.3" r="6.6" fill="#2b7bbb" fill-opacity="0.92"/><circle cx="1383.4" cy="861.7" r="6.6" fill="#2b7bbb" fill-opacity="0.92"/><circle cx="1392.1" cy="871.5" r="6.6" fill="#2b7bbb" fill-opacity="0.92"/><circle cx="1369.7" cy="872.6" r="6.6" fill="#2b7bbb" fill-opacity="0.92"/><circle cx="1369.7" cy="877.0" r="6.6" fill="#2b7bbb" fill-opacity="0.92"/><circle cx="1369.7" cy="881.3" r="6.6" fill="#2b7bbb" fill-opacity="0.92"/></g></svg><div style="position:absolute;left:-330.0px;width:1400px;text-align:right;top:596.7px;font-size:14px;color:#605e5c;font-weight:normal;white-space:nowrap;line-height:1;">100</div><div style="position:absolute;left:-330.0px;width:1400px;text-align:right;top:738.3px;font-size:14px;color:#605e5c;font-weight:normal;white-space:nowrap;line-height:1;">50</div><div style="position:absolute;left:-330.0px;width:1400px;text-align:right;top:879.9px;font-size:14px;color:#605e5c;font-weight:normal;white-space:nowrap;line-height:1;">0</div><div style="position:absolute;left:384.2px;width:1400px;text-align:center;top:895.4px;font-size:14px;color:#605e5c;font-weight:normal;white-space:nowrap;line-height:1;">100</div><div style="position:absolute;left:536.0px;width:1400px;text-align:center;top:895.4px;font-size:14px;color:#605e5c;font-weight:normal;white-space:nowrap;line-height:1;">1,000</div><div style="position:absolute;left:687.9px;width:1400px;text-align:center;top:895.4px;font-size:14px;color:#605e5c;font-weight:normal;white-space:nowrap;line-height:1;">10,000</div><div style="position:absolute;left:839.7px;width:1400px;text-align:center;top:895.4px;font-size:14px;color:#605e5c;font-weight:normal;white-space:nowrap;line-height:1;">100,000</div><div style="position:absolute;left:991.5px;width:1400px;text-align:center;top:895.4px;font-size:14px;color:#605e5c;font-weight:normal;white-space:nowrap;line-height:1;">1,000,000</div><div style="position:absolute;left:687.0px;width:1400px;text-align:center;top:915.4px;font-size:14px;color:#252423;font-weight:normal;white-space:nowrap;line-height:1;">GDP Per Capita</div><div style="position:absolute;left:966px;top:738px;width:120px;text-align:center;font-size:14px;line-height:1;color:#252423;transform:rotate(-90deg)">Percentile Score</div><div style="position:absolute;left:29.0px;top:946.2px;font-size:14.15px;color:#252423;font-weight:normal;white-space:nowrap;line-height:1;"><span style="color:#1f3a93;font-weight:bold;text-decoration:underline;font-size:13.5px">Click here</span> to download the full Sovereign ESG Ratings dataset - must be logged into GRiD</div><div style="position:absolute;left:338.0px;width:1400px;text-align:right;top:946.1px;font-size:14.4px;color:#252423;font-weight:normal;white-space:nowrap;line-height:1;">Copyright © 2022, Verisk Maplecroft Limited. All rights reserved. Verisk Maplecroft is a Verisk business.</div><div style="position:absolute;left:0px;top:970px;width:1768px;height:24px;background:#f0efee;box-sizing:border-box;border-top:1px solid #dedede"></div><div style="position:absolute;left:27px;top:971px;width:73px;height:23px;background:#fff;box-sizing:border-box;border-bottom:3px solid #f2c811;border-left:1px solid #dcdcdc;border-right:1px solid #dcdcdc"></div><div style="position:absolute;left:-636.5px;width:1400px;text-align:center;top:978.5px;font-size:8.6px;color:#252423;font-weight:normal;white-space:nowrap;line-height:1;">Global View</div><div style="position:absolute;left:100px;top:971px;width:77px;height:23px;background:transparent;box-sizing:border-box;border-right:1px solid #dcdcdc"></div><div style="position:absolute;left:-561.0px;width:1400px;text-align:center;top:978.5px;font-size:8.6px;color:#444;font-weight:normal;white-space:nowrap;line-height:1;">Country View</div><div style="position:absolute;left:177px;top:971px;width:87px;height:23px;background:transparent;box-sizing:border-box;border-right:1px solid #dcdcdc"></div><div style="position:absolute;left:-479.5px;width:1400px;text-align:center;top:978.5px;font-size:8.6px;color:#444;font-weight:normal;white-space:nowrap;line-height:1;">Dimension View</div><svg width="26" height="12" style="position:absolute;left:0;top:976px"><path d="M8 3 L5 6 L8 9Z M18 3 L21 6 L18 9Z" fill="#c8c8c8"/></svg></div>
</body></html>
